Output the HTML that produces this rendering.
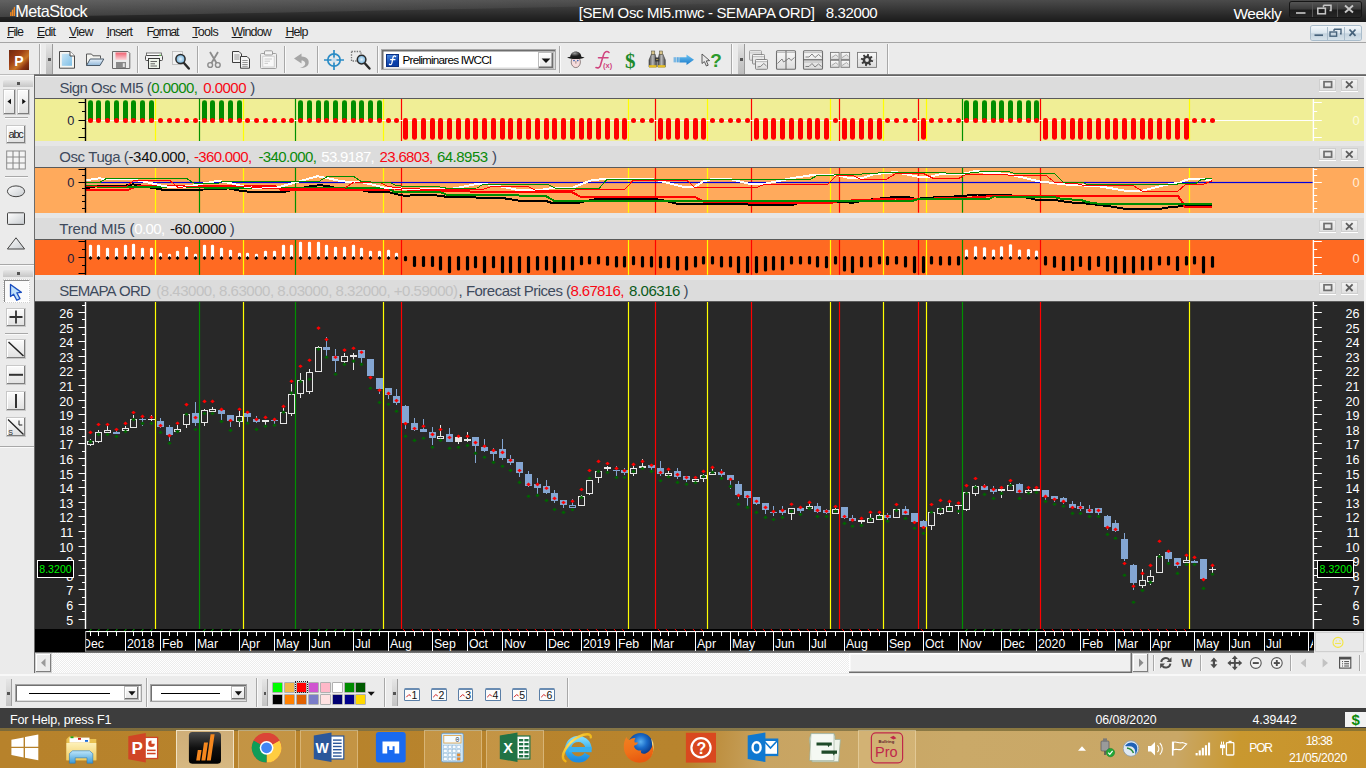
<!DOCTYPE html>
<html><head><meta charset="utf-8"><title>MetaStock</title>
<style>
html,body{margin:0;padding:0;}
body{width:1366px;height:768px;overflow:hidden;position:relative;background:#ebebeb;font-family:"Liberation Sans",sans-serif;}
.a{position:absolute;}
.t{position:absolute;white-space:nowrap;font-family:"Liberation Sans",sans-serif;}
svg{position:absolute;left:0;top:0;overflow:visible;}

</style></head>
<body>
<div class="a" style="left:0;top:0;width:1366px;height:22px;background:linear-gradient(#4b4b4b 0%,#3a3a3a 35%,#262626 75%,#1b1b1b 100%);"></div>
<svg width="1366" height="22"><defs><linearGradient id="sh" x1="0" y1="0" x2="1" y2="0"><stop offset="0" stop-color="#fff" stop-opacity="0.13"/><stop offset="1" stop-color="#fff" stop-opacity="0.0"/></linearGradient></defs><path d="M0,0 L900,0 C600,6 250,14 0,17 Z" fill="url(#sh)"/></svg>
<svg width="20" height="22"><path d="M10.1,16 V12.4 L11.5,11.6 V16 Z M11.9,16 V10 L13.3,9.2 V16 Z M13.7,16 V7.4 L15.1,6.6 V16 Z" fill="#f08a24"/></svg>
<div class="t" style="left:15.2px;top:0.8px;font-size:16.2px;line-height:21px;color:#ffffff;letter-spacing:-0.503px;">MetaStock</div>
<div class="t" style="left:578.7px;top:3.1px;font-size:15px;line-height:20px;color:#ffffff;letter-spacing:-0.384px;">[SEM Osc MI5.mwc - SEMAPA ORD]   8.32000</div>
<div class="t" style="left:1233.4px;top:3.6px;font-size:15.5px;line-height:20px;color:#ffffff;letter-spacing:-0.456px;">Weekly</div>
<div class="a" style="left:1289.5px;top:1.5px;width:71px;height:15.5px;border-radius:2px;background:linear-gradient(#555 0%,#3a3a3a 45%,#1d1d1d 55%,#262626 100%);box-shadow:0 0 0 1px #161616;"></div>
<div class="a" style="left:1311.5px;top:2px;width:1px;height:15px;background:#555;"></div><div class="a" style="left:1336.5px;top:2px;width:1px;height:15px;background:#555;"></div>
<svg width="1366" height="22"><g stroke="#c8c8c8" fill="none"><path d="M1296,13 H1305.5" stroke-width="1.6"/><path d="M1323.5,5.2 H1331 V10.5 H1329.5 M1323.5,5.2 V7.5" stroke-width="1.5"/><rect x="1317.8" y="8.2" width="7.6" height="5.6" stroke-width="1.5"/><path d="M1345,5.5 L1353,12.5 M1353,5.5 L1345,12.5" stroke-width="1.9"/></g></svg>
<div class="a" style="left:0;top:22px;width:1366px;height:20px;background:#ebebeb;"></div>
<div class="a" style="left:0;top:42px;width:1366px;height:1px;background:#a5a5a5;"></div>
<div class="t" style="left:7.0px;top:23.8px;font-size:12.5px;line-height:16px;color:#1a1a1a;letter-spacing:-1.035px;"><u>F</u>ile</div>
<div class="t" style="left:37.0px;top:23.8px;font-size:12.5px;line-height:16px;color:#1a1a1a;letter-spacing:-0.885px;"><u>E</u>dit</div>
<div class="t" style="left:69.0px;top:23.8px;font-size:12.5px;line-height:16px;color:#1a1a1a;letter-spacing:-0.816px;"><u>V</u>iew</div>
<div class="t" style="left:106.4px;top:23.8px;font-size:12.5px;line-height:16px;color:#1a1a1a;letter-spacing:-0.944px;"><u>I</u>nsert</div>
<div class="t" style="left:146.5px;top:23.8px;font-size:12.5px;line-height:16px;color:#1a1a1a;letter-spacing:-1.348px;">F<u>o</u>rmat</div>
<div class="t" style="left:192.3px;top:23.8px;font-size:12.5px;line-height:16px;color:#1a1a1a;letter-spacing:-0.696px;"><u>T</u>ools</div>
<div class="t" style="left:231.6px;top:23.8px;font-size:12.5px;line-height:16px;color:#1a1a1a;letter-spacing:-0.843px;"><u>W</u>indow</div>
<div class="t" style="left:285.4px;top:23.8px;font-size:12.5px;line-height:16px;color:#1a1a1a;letter-spacing:-0.902px;"><u>H</u>elp</div>
<div class="a" style="left:1310.5px;top:26px;width:50px;height:13.5px;border-radius:2px;background:linear-gradient(#f4f8fb 0%,#dbe6ee 50%,#c3d3de 55%,#d6e2ea 100%);box-shadow:0 0 0 1px #a9bccb;"></div>
<div class="a" style="left:1326.5px;top:26.5px;width:1px;height:13px;background:#a9bccb;"></div><div class="a" style="left:1344px;top:26.5px;width:1px;height:13px;background:#a9bccb;"></div>
<svg width="1366" height="44"><g stroke="#46627a" fill="none"><path d="M1314.5,35.2 H1323" stroke-width="1.7"/><path d="M1334,29.3 H1341 V33.8 H1340 M1334,29.3 V31" stroke-width="1.4"/><rect x="1330" y="32" width="6.6" height="4.2" stroke-width="1.4"/><path d="M1349.5,29.5 L1355.5,35.8 M1355.5,29.5 L1349.5,35.8" stroke-width="1.8"/></g></svg>
<div class="a" style="left:0;top:43px;width:1366px;height:32px;background:#ebebeb;"></div>
<div class="a" style="left:9px;top:50px;width:20px;height:20px;background:linear-gradient(135deg,#6e2810 0%,#9a3c14 35%,#c87426 62%,#8a3412 80%,#5e200c 100%);"></div>
<div class="t" style="left:14.2px;top:51.6px;font-size:14px;line-height:18px;color:#ffffff;font-weight:bold;">P</div>
<div class="a" style="left:39px;top:44px;width:1px;height:30px;background:#a8a8a8;"></div><div class="a" style="left:40px;top:44px;width:1px;height:30px;background:#fafafa;"></div>
<div class="a" style="left:46px;top:44px;width:6px;height:30px;background:linear-gradient(#e4e4e4,#c9c9c9 60%,#bdbdbd);border-right:1px solid #9a9a9a;"></div><div class="a" style="left:48px;top:58px;width:3px;height:3px;background:#555;"></div>
<div class="a" style="left:137px;top:46px;width:1px;height:27px;background:#a8a8a8;"></div><div class="a" style="left:138px;top:46px;width:1px;height:27px;background:#fafafa;"></div>
<div class="a" style="left:197px;top:46px;width:1px;height:27px;background:#a8a8a8;"></div><div class="a" style="left:198px;top:46px;width:1px;height:27px;background:#fafafa;"></div>
<div class="a" style="left:284px;top:46px;width:1px;height:27px;background:#a8a8a8;"></div><div class="a" style="left:285px;top:46px;width:1px;height:27px;background:#fafafa;"></div>
<div class="a" style="left:317px;top:46px;width:1px;height:27px;background:#a8a8a8;"></div><div class="a" style="left:318px;top:46px;width:1px;height:27px;background:#fafafa;"></div>
<div class="a" style="left:377px;top:46px;width:1px;height:27px;background:#a8a8a8;"></div><div class="a" style="left:378px;top:46px;width:1px;height:27px;background:#fafafa;"></div>
<div class="a" style="left:559px;top:46px;width:1px;height:27px;background:#a8a8a8;"></div><div class="a" style="left:560px;top:46px;width:1px;height:27px;background:#fafafa;"></div>
<div class="a" style="left:731px;top:44px;width:1px;height:30px;background:#a8a8a8;"></div><div class="a" style="left:732px;top:44px;width:1px;height:30px;background:#fafafa;"></div>
<div class="a" style="left:738px;top:44px;width:6px;height:30px;background:linear-gradient(#e4e4e4,#c9c9c9 60%,#bdbdbd);border-right:1px solid #9a9a9a;"></div><div class="a" style="left:740px;top:58px;width:3px;height:3px;background:#555;"></div>
<div class="a" style="left:887px;top:44px;width:1px;height:30px;background:#a8a8a8;"></div><div class="a" style="left:888px;top:44px;width:1px;height:30px;background:#fafafa;"></div>
<svg width="1366" height="80"><defs><linearGradient id="gblue" x1="0" y1="0" x2="1" y2="1"><stop offset="0" stop-color="#c9e6f6"/><stop offset="1" stop-color="#7fbfe6"/></linearGradient><linearGradient id="gfold" x1="0" y1="0" x2="0" y2="1"><stop offset="0" stop-color="#e9f2fa"/><stop offset="1" stop-color="#8fb6d9"/></linearGradient><linearGradient id="gred" x1="0" y1="0" x2="0" y2="1"><stop offset="0" stop-color="#f06070"/><stop offset="1" stop-color="#fbd8dc"/></linearGradient><radialGradient id="glens"><stop offset="0" stop-color="#e6f3fb"/><stop offset="1" stop-color="#6fb0dc"/></radialGradient><linearGradient id="ggrip" x1="0" y1="0" x2="0" y2="1"><stop offset="0" stop-color="#fdfdfd"/><stop offset="1" stop-color="#dcdcdc"/></linearGradient></defs><path d="M59.5,51.5 H70 L74.5,56 V68.2 H59.5 Z" fill="#f6f6f2" stroke="#4a4a4a" stroke-width="1"/><rect x="61.8" y="53.8" width="10.2" height="12" fill="url(#gblue)"/><path d="M70,51.5 V56 H74.5" fill="#fff" stroke="#4a4a4a" stroke-width="1"/><path d="M86.5,65.5 V54 H91.5 L93,55.8 H100.5 V58.5" fill="#f4f4f0" stroke="#5a5a5a" stroke-width="1"/><path d="M86.5,65.5 L90.2,59 H103.8 L100,65.5 Z" fill="url(#gfold)" stroke="#4a5a6a" stroke-width="1"/><path d="M112.5,51.5 H128 L129.8,53.3 V68.5 H112.5 Z" fill="#ececec" stroke="#6a6a6a" stroke-width="1"/><rect x="115.5" y="52.5" width="11" height="7.5" fill="url(#gred)"/><rect x="116" y="62" width="10" height="6" fill="#8a8a8a"/><rect x="122.8" y="63.2" width="2" height="3.8" fill="#e4e4e4"/><rect x="146.5" y="53" width="15" height="2.5" fill="#fdfdfd" stroke="#5a5a5a" stroke-width="0.8"/><rect x="145.5" y="55.5" width="17" height="5" rx="1" fill="#f2f2f2" stroke="#4a4a4a" stroke-width="1"/><rect x="159.3" y="54.6" width="1.6" height="1.4" fill="#5fc04f"/><rect x="148.5" y="58.5" width="11" height="10" fill="#eef4ea" stroke="#3a3a3a" stroke-width="1"/><path d="M150.5,61.5 H157 M150.5,63.8 H155 M150.5,66 H157" stroke="#555" stroke-width="0.9"/><rect x="172.5" y="51.5" width="10" height="13" fill="#f2f2f2" stroke="#b8b8b8" stroke-width="0.8"/><path d="M183.5,62.5 L188.8,68.5" stroke="#2a2a2a" stroke-width="2.4" stroke-linecap="round"/><circle cx="180.5" cy="59" r="4.6" fill="url(#glens)" stroke="#2a2a2a" stroke-width="1.5"/><g stroke="#8c8c8c" fill="none" stroke-width="1.4"><circle cx="210.2" cy="65" r="2.4"/><circle cx="217.8" cy="65" r="2.4"/><path d="M211.5,63 L218,52 M216.5,63 L210,52" stroke-width="1.8"/></g><g><path d="M232.5,51.5 H239 L241.5,54 V62.5 H232.5 Z" fill="#f4f4f4" stroke="#3e3e3e"/><path d="M234.3,55 H239.5 M234.3,57 H239.5 M234.3,59 H239.5" stroke="#8a8a8a" stroke-width="0.9"/><path d="M240.5,56.5 H247 L249.5,59 V68.2 H240.5 Z" fill="#f4f4f4" stroke="#3e3e3e"/><path d="M242.3,60.5 H247.7 M242.3,62.5 H247.7 M242.3,64.5 H247.7 M242.3,66.3 H247.7" stroke="#8a8a8a" stroke-width="0.9"/></g><g><rect x="260.5" y="53.5" width="16" height="15" rx="1" fill="#f0f0f0" stroke="#a0a0a0"/><rect x="264.5" y="50.8" width="8" height="4.2" rx="1" fill="#f4f4f4" stroke="#9a9a9a"/><rect x="262.8" y="56.2" width="11.4" height="10.8" fill="#f8f8f8" stroke="#c4c4c4" stroke-width="0.7"/><path d="M264.5,59 H272 M264.5,61.2 H270 M264.5,63.4 H268" stroke="#c0c0c0" stroke-width="0.8"/></g><path d="M294,58.5 L301.5,53.5 V56.5 C307.5,56.5 309.5,60.5 308.5,64 C307.5,67 304,68.2 300,68 C304,67 306,64.5 305,62.5 C304.3,61 303,60.6 301.5,60.6 V63.5 Z" fill="#a6a6a6"/><g stroke="#2b8cc6" fill="none"><circle cx="334" cy="60" r="6.2" stroke-width="1.7"/><path d="M324,60 H344 M334,50 V70" stroke-width="1.7"/></g><circle cx="334" cy="60" r="2.6" fill="#d8e6f0" opacity="0.9"/><g><rect x="351.5" y="51.5" width="9.5" height="9.5" fill="none" stroke="#777" stroke-width="1.3" stroke-dasharray="1.4,1.2"/><path d="M365,63.5 L369.5,68.5" stroke="#2a2a2a" stroke-width="2.4" stroke-linecap="round"/><circle cx="361.6" cy="59.6" r="4.3" fill="url(#glens)" stroke="#2a2a2a" stroke-width="1.5"/></g></svg>
<div class="a" style="left:380.6px;top:48.9px;width:175.2px;height:21.5px;background:#fff;box-shadow:inset 1.5px 1.5px 0 #6e6e6e, inset -1.5px -1.5px 0 #dadada;border:1px solid #a8a8a8;box-sizing:border-box;"></div>
<div class="a" style="left:385.8px;top:53.7px;width:13.1px;height:13.3px;background:linear-gradient(160deg,#4a8ae0,#0a3ea8 70%);border:1px solid #0a2f82;box-sizing:border-box;"></div>
<svg width="1366" height="80"><path d="M395.6,56.6 C394.6,55.4 393.2,56 392.9,57.8 L391.9,63 C391.6,64.6 390.4,65.2 389.4,64.2 M390.6,59.6 H395" fill="none" stroke="#fff" stroke-width="1.25" stroke-linecap="round"/></svg>
<div class="t" style="left:402.5px;top:52.4px;font-size:11.7px;line-height:15px;color:#000;letter-spacing:-0.767px;">Preliminares IWCCI</div>
<div class="a" style="left:538px;top:51.6px;width:16.4px;height:17.7px;background:linear-gradient(#fdfdfd,#e6e6e6);box-shadow:inset -1.5px -1.5px 0 #6e6e6e, inset 1px 1px 0 #fff;border:1px solid #bcbcbc;box-sizing:border-box;"></div>
<svg width="1366" height="80"><path d="M541.6,58.6 H550.4 L546,63 Z" fill="#111"/></svg>
<svg width="1366" height="80"><defs><radialGradient id="ghat" cx="0.4" cy="0.3"><stop offset="0" stop-color="#9a9a9a"/><stop offset="1" stop-color="#1e1e1e"/></radialGradient><linearGradient id="garrow" x1="0" y1="0" x2="0" y2="1"><stop offset="0" stop-color="#6cc4f4"/><stop offset="1" stop-color="#1878c8"/></linearGradient><linearGradient id="gbino" x1="0" y1="0" x2="1" y2="0"><stop offset="0" stop-color="#4a4a4a"/><stop offset="0.5" stop-color="#b8b8b8"/><stop offset="1" stop-color="#4a4a4a"/></linearGradient><linearGradient id="gwin" x1="0" y1="0" x2="0" y2="1"><stop offset="0" stop-color="#fafafa"/><stop offset="1" stop-color="#dcdcdc"/></linearGradient></defs><ellipse cx="575.8" cy="62" rx="4.6" ry="5.6" fill="#f6dcdc" stroke="#6a5a5a" stroke-width="0.7"/><path d="M570.2,57.5 C570.2,49.5 581.4,49.5 581.4,57.5 Z" fill="url(#ghat)"/><path d="M567,57.6 C572,59.6 580,59.6 584.6,57.6 C580,56.2 572,56.2 567,57.6 Z" fill="#1a1a1a"/><circle cx="574" cy="60.6" r="0.8" fill="#2a5ab0"/><circle cx="577.8" cy="60.6" r="0.8" fill="#2a5ab0"/><path d="M575.9,61 V63.6" stroke="#5a4a4a" stroke-width="0.6"/><path d="M609,52.5 C607,50.6 604.5,51.5 603.6,54.6 L600.2,66 C599.6,67.6 598,68.4 596,67.6 M598.5,57.8 H608" fill="none" stroke="#d0447e" stroke-width="1.6" stroke-linecap="round"/><text x="603" y="67.6" font-family="Liberation Sans" font-size="7.5" font-weight="bold" fill="#d0447e">(x)</text><text x="624.9" y="67.6" font-family="Liberation Serif" font-size="21" font-weight="bold" fill="#1c8a2c">$</text><g><path d="M649,67 V60 L651.5,54 H655 L656.5,60 V67 Z" fill="url(#gbino)" stroke="#3a3a3a" stroke-width="0.6"/><path d="M657.8,67 V60 L659.3,54 H662.8 L665.3,60 V67 Z" fill="url(#gbino)" stroke="#3a3a3a" stroke-width="0.6"/><rect x="651.5" y="51" width="3.3" height="3.4" fill="#d8c48a" stroke="#4a4a3a" stroke-width="0.5"/><rect x="659.4" y="51" width="3.3" height="3.4" fill="#d8c48a" stroke="#4a4a3a" stroke-width="0.5"/><rect x="655" y="57.5" width="4.4" height="4" fill="#3a3a3a"/><rect x="649" y="65.2" width="7.5" height="2.2" fill="#e8c020"/><rect x="657.8" y="65.2" width="7.5" height="2.2" fill="#e8c020"/><path d="M656,59.5 H658.6" stroke="#e8d070" stroke-width="0.8" stroke-dasharray="0.7,0.5"/></g><path d="M679.5,57.2 H686.5 V54.5 L694,59.8 L686.5,65 V62.4 H679.5 Z" fill="url(#garrow)"/><path d="M674.2,57.2 V62.4 M675.8,57.2 V62.4 M677.4,57.2 V62.4 M678.8,57.2 V62.4" stroke="#3a9ae0" stroke-width="0.9"/><path d="M702,54 L702,63.5 L704.4,61.6 L706.4,66 L708.2,65.2 L706.3,60.9 L709.6,60.6 Z" fill="#e8e8e8" stroke="#4a4a4a" stroke-width="0.9"/><text x="710.2" y="67" font-family="Liberation Sans" font-size="19" font-weight="bold" fill="#2c9a2c">?</text><g opacity="0.75"><rect x="749.5" y="50.7" width="12" height="9.5" rx="0.8" fill="url(#gwin)" stroke="#7a7a7a" stroke-width="0.9"/><path d="M749.5,52.900000000000006 H761.5" stroke="#9a9a9a" stroke-width="0.7"/></g><g opacity="0.9"><rect x="752.5" y="54.5" width="12" height="9.5" rx="0.8" fill="url(#gwin)" stroke="#7a7a7a" stroke-width="0.9"/><path d="M752.5,56.7 H764.5" stroke="#9a9a9a" stroke-width="0.7"/></g><rect x="755.5" y="59.5" width="12" height="9.8" rx="0.8" fill="url(#gwin)" stroke="#7a7a7a" stroke-width="0.9"/><path d="M755.5,61.7 H767.5" stroke="#9a9a9a" stroke-width="0.7"/><path d="M757.5,67 L760.5,66.5 L763.8,63.5 L766.5,66" fill="none" stroke="#6a6a6a" stroke-width="0.8"/><rect x="776.5" y="50.7" width="19" height="18.6" rx="1" fill="url(#gwin)" stroke="#6e6e6e" stroke-width="1.1"/><path d="M786,50.7 V69.3" stroke="#6e6e6e" stroke-width="1.1"/><path d="M776.5,52.5 H795.5" stroke="#9a9a9a" stroke-width="0.6"/><path d="M777.5,63.5 L780,61 L782,59 L783.5,62 L786,60.5 L789,58 L791,60.5 L794.5,57.5" fill="none" stroke="#6a6a6a" stroke-width="0.8"/><rect x="803.5" y="50.7" width="19" height="18.6" rx="1" fill="url(#gwin)" stroke="#6e6e6e" stroke-width="1.1"/><path d="M803.5,59.8 H822.5" stroke="#6e6e6e" stroke-width="1.3"/><path d="M803.5,52.6 H822.5 M803.5,62 H822.5" stroke="#9a9a9a" stroke-width="0.6"/><path d="M805.5,57 H809 L812,54 L815,57.5 L818.5,54.5 L821.5,57 M805.5,66.5 H809 L812,63.5 L815,67 L818.5,64 L821.5,66.5" fill="none" stroke="#6a6a6a" stroke-width="0.8"/><rect x="830.5" y="52.4" width="8.6" height="7" fill="url(#gwin)" stroke="#7a7a7a" stroke-width="0.9"/><path d="M831.7,57.6 L834.0,56.0 L835.9,54.8 L837.9,56.6" fill="none" stroke="#8a8a8a" stroke-width="0.7"/><rect x="841" y="52.4" width="8.6" height="7" fill="url(#gwin)" stroke="#7a7a7a" stroke-width="0.9"/><path d="M842.2,57.6 L844.5,56.0 L846.4,54.8 L848.4,56.6" fill="none" stroke="#8a8a8a" stroke-width="0.7"/><rect x="830.5" y="60.3" width="8.6" height="7" fill="url(#gwin)" stroke="#7a7a7a" stroke-width="0.9"/><path d="M831.7,65.5 L834.0,63.9 L835.9,62.699999999999996 L837.9,64.5" fill="none" stroke="#8a8a8a" stroke-width="0.7"/><rect x="841" y="60.3" width="8.6" height="7" fill="url(#gwin)" stroke="#7a7a7a" stroke-width="0.9"/><path d="M842.2,65.5 L844.5,63.9 L846.4,62.699999999999996 L848.4,64.5" fill="none" stroke="#8a8a8a" stroke-width="0.7"/><rect x="857.5" y="52.4" width="19" height="15" fill="url(#gwin)" stroke="#7a7a7a" stroke-width="0.9"/><path d="M857.5,59.8 H876.5" stroke="#bdbdbd" stroke-width="0.6" stroke-dasharray="1,1"/><path d="M873.19,60.41 L872.87,61.99 L870.77,61.86 L870.16,62.77 L871.08,64.67 L869.75,65.56 L868.35,63.98 L867.28,64.19 L866.59,66.19 L865.01,65.87 L865.14,63.77 L864.23,63.16 L862.33,64.08 L861.44,62.75 L863.02,61.35 L862.81,60.28 L860.81,59.59 L861.13,58.01 L863.23,58.14 L863.84,57.23 L862.92,55.33 L864.25,54.44 L865.65,56.02 L866.72,55.81 L867.41,53.81 L868.99,54.13 L868.86,56.23 L869.77,56.84 L871.67,55.92 L872.56,57.25 L870.98,58.65 L871.19,59.72 Z" fill="#3c3c3c"/><circle cx="867" cy="60" r="1.9" fill="#e6e6e6"/></svg>
<div class="a" style="left:0;top:75px;width:34px;height:600px;background:#ebebeb;"></div>
<div class="a" style="left:0;top:74px;width:34px;height:1px;background:#bcbcbc;"></div><div class="a" style="left:0;top:75px;width:34px;height:1px;background:#f8f8f8;"></div>
<div class="a" style="left:34px;top:74px;width:1332px;height:2px;background:linear-gradient(#8a8a8a,#585858);"></div>
<div class="a" style="left:33.5px;top:75px;width:1.5px;height:598px;background:#6c6c6c;"></div>
<div class="a" style="left:3px;top:79.5px;width:30px;height:7px;background:linear-gradient(#e6e6e6,#c6c6c6);border-radius:2px 2px 0 0;"></div><div class="a" style="left:16.5px;top:81.5px;width:3px;height:3px;background:#555;"></div>
<div class="a" style="left:3px;top:89px;width:13px;height:25.5px;background:linear-gradient(#fbfbfb,#e0e0e0);box-shadow:inset -1px -1px 0 #7e7e7e, inset 1px 1px 0 #ffffff;border:1px solid #c8c8c8;box-sizing:border-box;"></div>
<div class="a" style="left:17px;top:89px;width:13px;height:25.5px;background:linear-gradient(#fbfbfb,#e0e0e0);box-shadow:inset -1px -1px 0 #7e7e7e, inset 1px 1px 0 #ffffff;border:1px solid #c8c8c8;box-sizing:border-box;"></div>
<div class="a" style="left:5px;top:117px;width:23px;height:1px;background:#a8a8a8;"></div><div class="a" style="left:5px;top:118px;width:23px;height:1px;background:#fafafa;"></div>
<div class="a" style="left:5px;top:176px;width:23px;height:1px;background:#a8a8a8;"></div><div class="a" style="left:5px;top:177px;width:23px;height:1px;background:#fafafa;"></div>
<div class="a" style="left:6px;top:124.5px;width:20px;height:19px;background:linear-gradient(#fbfbfb,#e0e0e0);box-shadow:inset -1px -1px 0 #7e7e7e, inset 1px 1px 0 #ffffff;border:1px solid #c8c8c8;box-sizing:border-box;"></div>
<div class="t" style="left:8.6px;top:126.6px;font-size:11px;line-height:14px;color:#1a1a1a;letter-spacing:-1.311px;">abc</div>
<svg width="40" height="680"><path d="M7.4,101.5 L11,98.7 V104.3 Z M25.8,101.5 L22.2,98.7 V104.3 Z" fill="#111" transform="translate(0,0)"/><rect x="6.7" y="151" width="18.6" height="18" fill="#f4f4f4" stroke="#8a8a8a" stroke-width="1"/><path d="M13,151 V169 M19.2,151 V169 M6.7,157 H25.3 M6.7,163 H25.3" stroke="#8a8a8a" stroke-width="1.1"/><defs><linearGradient id="gsh" x1="0" y1="0" x2="1" y2="1"><stop offset="0" stop-color="#ffffff"/><stop offset="1" stop-color="#c8ccd0"/></linearGradient></defs><ellipse cx="16" cy="191.3" rx="8.6" ry="5.4" fill="url(#gsh)" stroke="#444" stroke-width="1"/><rect x="7.5" y="212.8" width="17" height="11.6" rx="0.8" fill="url(#gsh)" stroke="#444" stroke-width="1"/><path d="M7.4,249 L16,237.8 L24.6,249 Z" fill="url(#gsh)" stroke="#444" stroke-width="1" stroke-linejoin="round"/></svg>
<div class="a" style="left:0;top:264px;width:33.5px;height:1px;background:#a8a8a8;"></div><div class="a" style="left:0;top:265px;width:33.5px;height:1px;background:#fafafa;"></div>
<div class="a" style="left:3px;top:270px;width:30px;height:7px;background:linear-gradient(#e6e6e6,#c6c6c6);border-radius:2px 2px 0 0;"></div><div class="a" style="left:16.5px;top:272px;width:3px;height:3px;background:#555;"></div>
<div class="a" style="left:3px;top:278.5px;width:26.5px;height:24px;background:#fbfbfb;box-shadow:inset 1px 1px 0 #8a8a8a, inset -1px -1px 0 #ffffff;border:1px dotted #d0d0d0;box-sizing:border-box;"></div>
<div class="a" style="left:6px;top:307.5px;width:20px;height:19px;background:linear-gradient(#fbfbfb,#e0e0e0);box-shadow:inset -1px -1px 0 #7e7e7e, inset 1px 1px 0 #ffffff;border:1px solid #c8c8c8;box-sizing:border-box;"></div>
<div class="a" style="left:5px;top:332.5px;width:23px;height:1px;background:#a8a8a8;"></div><div class="a" style="left:5px;top:333.5px;width:23px;height:1px;background:#fafafa;"></div>
<div class="a" style="left:6px;top:339px;width:20px;height:19.5px;background:linear-gradient(#fbfbfb,#e0e0e0);box-shadow:inset -1px -1px 0 #7e7e7e, inset 1px 1px 0 #ffffff;border:1px solid #c8c8c8;box-sizing:border-box;"></div>
<div class="a" style="left:6px;top:365px;width:20px;height:19.5px;background:linear-gradient(#fbfbfb,#e0e0e0);box-shadow:inset -1px -1px 0 #7e7e7e, inset 1px 1px 0 #ffffff;border:1px solid #c8c8c8;box-sizing:border-box;"></div>
<div class="a" style="left:6px;top:391px;width:20px;height:19.5px;background:linear-gradient(#fbfbfb,#e0e0e0);box-shadow:inset -1px -1px 0 #7e7e7e, inset 1px 1px 0 #ffffff;border:1px solid #c8c8c8;box-sizing:border-box;"></div>
<div class="a" style="left:6px;top:417px;width:20px;height:19.5px;background:linear-gradient(#fbfbfb,#e0e0e0);box-shadow:inset -1px -1px 0 #7e7e7e, inset 1px 1px 0 #ffffff;border:1px solid #c8c8c8;box-sizing:border-box;"></div>
<div class="a" style="left:0;top:445.5px;width:33.5px;height:1px;background:#a8a8a8;"></div><div class="a" style="left:0;top:446.5px;width:33.5px;height:1px;background:#fafafa;"></div>
<svg width="40" height="680"><path d="M10.5,284.5 L10.5,296.5 L13.6,294.2 L16.8,300.3 L20,298.6 L16.8,292.8 L21.4,292.4 Z" fill="#bfe0fa" stroke="#1a4ec0" stroke-width="1.3" stroke-linejoin="round"/><path d="M9.5,317 H22.5 M16,310.5 V323.5" stroke="#333" stroke-width="1.8"/><path d="M8.5,342 L23.5,356" stroke="#222" stroke-width="1.5"/><path d="M9,374.8 H23" stroke="#333" stroke-width="2"/><path d="M16,394 V408" stroke="#333" stroke-width="2"/><path d="M8,419.5 L23.5,434.5" stroke="#222" stroke-width="1.3"/><path d="M19,420.5 V425 H22.3" stroke="#222" stroke-width="1" fill="none"/><text x="8.2" y="434.6" font-family="Liberation Sans" font-size="7" fill="#222">S</text></svg>
<div class="a" style="left:35px;top:76px;width:1331px;height:596.5px;background:#e6e6e6;"></div>
<div class="a" style="left:35px;top:76px;width:1331px;height:1px;background:#f8f8f8;"></div>
<div class="a" style="left:35px;top:77px;width:1329px;height:21px;background:#dcdcdc;"></div>
<div class="a" style="left:35px;top:97.5px;width:1329px;height:1.5px;background:#5a5a5a;"></div>
<div class="a" style="left:35px;top:99px;width:1329px;height:42px;background:#f0ee96;"></div>
<div class="a" style="left:35px;top:146px;width:1329px;height:21px;background:#dcdcdc;"></div>
<div class="a" style="left:35px;top:166.5px;width:1329px;height:1.5px;background:#5a5a5a;"></div>
<div class="a" style="left:35px;top:168px;width:1329px;height:44.69999999999999px;background:#ffaa5c;"></div>
<div class="a" style="left:35px;top:218px;width:1329px;height:21px;background:#dcdcdc;"></div>
<div class="a" style="left:35px;top:238.5px;width:1329px;height:1.5px;background:#5a5a5a;"></div>
<div class="a" style="left:35px;top:240px;width:1329px;height:34.80000000000001px;background:#ff6a22;"></div>
<div class="a" style="left:35px;top:279.5px;width:1329px;height:21.5px;background:#dcdcdc;"></div>
<div class="a" style="left:35px;top:300.5px;width:1329px;height:1.5px;background:#5a5a5a;"></div>
<div class="a" style="left:35px;top:302px;width:1329px;height:327px;background:#282828;"></div>
<div class="a" style="left:1319.3px;top:78.5px;width:16.6px;height:12.2px;background:linear-gradient(#f4f4f4,#dedede);box-shadow:0 1px 0 #fff, inset 0 0 0 1px #cfcfcf;box-sizing:border-box;"></div>
<div class="a" style="left:1341px;top:78.5px;width:16.6px;height:12.2px;background:linear-gradient(#f4f4f4,#dedede);box-shadow:0 1px 0 #fff, inset 0 0 0 1px #cfcfcf;box-sizing:border-box;"></div>
<svg width="1366" height="768"><rect x="1324" y="81.7" width="7.6" height="5.6" fill="none" stroke="#6e6e6e" stroke-width="1.7"/><path d="M1346,81.3 L1352.6,87.9 M1352.6,81.3 L1346,87.9" stroke="#5e5e5e" stroke-width="1.8"/></svg>
<div class="a" style="left:1319.3px;top:148.3px;width:16.6px;height:12.2px;background:linear-gradient(#f4f4f4,#dedede);box-shadow:0 1px 0 #fff, inset 0 0 0 1px #cfcfcf;box-sizing:border-box;"></div>
<div class="a" style="left:1341px;top:148.3px;width:16.6px;height:12.2px;background:linear-gradient(#f4f4f4,#dedede);box-shadow:0 1px 0 #fff, inset 0 0 0 1px #cfcfcf;box-sizing:border-box;"></div>
<svg width="1366" height="768"><rect x="1324" y="151.5" width="7.6" height="5.6" fill="none" stroke="#6e6e6e" stroke-width="1.7"/><path d="M1346,151.10000000000002 L1352.6,157.70000000000002 M1352.6,151.10000000000002 L1346,157.70000000000002" stroke="#5e5e5e" stroke-width="1.8"/></svg>
<div class="a" style="left:1319.3px;top:220.3px;width:16.6px;height:12.2px;background:linear-gradient(#f4f4f4,#dedede);box-shadow:0 1px 0 #fff, inset 0 0 0 1px #cfcfcf;box-sizing:border-box;"></div>
<div class="a" style="left:1341px;top:220.3px;width:16.6px;height:12.2px;background:linear-gradient(#f4f4f4,#dedede);box-shadow:0 1px 0 #fff, inset 0 0 0 1px #cfcfcf;box-sizing:border-box;"></div>
<svg width="1366" height="768"><rect x="1324" y="223.5" width="7.6" height="5.6" fill="none" stroke="#6e6e6e" stroke-width="1.7"/><path d="M1346,223.10000000000002 L1352.6,229.70000000000002 M1352.6,223.10000000000002 L1346,229.70000000000002" stroke="#5e5e5e" stroke-width="1.8"/></svg>
<div class="a" style="left:1319.3px;top:281.6px;width:16.6px;height:12.2px;background:linear-gradient(#f4f4f4,#dedede);box-shadow:0 1px 0 #fff, inset 0 0 0 1px #cfcfcf;box-sizing:border-box;"></div>
<div class="a" style="left:1341px;top:281.6px;width:16.6px;height:12.2px;background:linear-gradient(#f4f4f4,#dedede);box-shadow:0 1px 0 #fff, inset 0 0 0 1px #cfcfcf;box-sizing:border-box;"></div>
<svg width="1366" height="768"><rect x="1324" y="284.8" width="7.6" height="5.6" fill="none" stroke="#6e6e6e" stroke-width="1.7"/><path d="M1346,284.40000000000003 L1352.6,291.0 M1352.6,284.40000000000003 L1346,291.0" stroke="#5e5e5e" stroke-width="1.8"/></svg>
<div class="a" style="left:1364px;top:76.5px;width:2px;height:596px;background:#f4f4f4;"></div>
<div class="t" style="left:59.5px;top:77.5px;font-size:15px;line-height:20px;color:#3e4a5c;letter-spacing:-0.535px;">Sign Osc MI5 (</div>
<div class="t" style="left:151.2px;top:77.5px;font-size:15px;line-height:20px;color:#0a8a0a;letter-spacing:-0.535px;">0.0000,</div>
<div class="t" style="left:203.3px;top:77.5px;font-size:15px;line-height:20px;color:#f80814;letter-spacing:-0.530px;">0.0000</div>
<div class="t" style="left:250.2px;top:77.5px;font-size:15px;line-height:20px;color:#3e4a5c;">)</div>
<div class="t" style="left:59.3px;top:146.9px;font-size:15px;line-height:20px;color:#3e4a5c;letter-spacing:-0.453px;">Osc Tuga (</div>
<div class="t" style="left:128.4px;top:146.9px;font-size:15px;line-height:20px;color:#101010;letter-spacing:-0.276px;">-340.000,</div>
<div class="t" style="left:194.0px;top:146.9px;font-size:15px;line-height:20px;color:#f80814;letter-spacing:-0.665px;">-360.000,</div>
<div class="t" style="left:258.4px;top:146.9px;font-size:15px;line-height:20px;color:#0a8a0a;letter-spacing:-0.620px;">-340.000,</div>
<div class="t" style="left:321.3px;top:146.9px;font-size:15px;line-height:20px;color:#ffffff;letter-spacing:-0.711px;">53.9187,</div>
<div class="t" style="left:379.6px;top:146.9px;font-size:15px;line-height:20px;color:#f80814;letter-spacing:-0.673px;">23.6803,</div>
<div class="t" style="left:437.0px;top:146.9px;font-size:15px;line-height:20px;color:#0a8a0a;letter-spacing:-0.531px;">64.8953</div>
<div class="t" style="left:492.0px;top:146.9px;font-size:15px;line-height:20px;color:#3e4a5c;">)</div>
<div class="t" style="left:59.3px;top:219.0px;font-size:15px;line-height:20px;color:#3e4a5c;letter-spacing:-0.178px;">Trend MI5 (</div>
<div class="t" style="left:134.3px;top:219.0px;font-size:15px;line-height:20px;color:#ffffff;letter-spacing:-0.592px;">0.00,</div>
<div class="t" style="left:170.0px;top:219.0px;font-size:15px;line-height:20px;color:#101010;letter-spacing:-0.427px;">-60.0000</div>
<div class="t" style="left:229.7px;top:219.0px;font-size:15px;line-height:20px;color:#3e4a5c;">)</div>
<div class="t" style="left:59.3px;top:280.9px;font-size:15px;line-height:20px;color:#3e4a5c;letter-spacing:-0.821px;">SEMAPA ORD</div>
<div class="t" style="left:156.3px;top:280.9px;font-size:15px;line-height:20px;color:#c2c2c2;letter-spacing:-0.480px;">(8.43000, 8.63000, 8.03000, 8.32000, +0.59000)</div>
<div class="t" style="left:458.6px;top:280.9px;font-size:15px;line-height:20px;color:#3e4a5c;letter-spacing:-0.515px;">, Forecast Prices (</div>
<div class="t" style="left:570.5px;top:280.9px;font-size:15px;line-height:20px;color:#f80814;letter-spacing:-0.648px;">8.67816,</div>
<div class="t" style="left:629.0px;top:280.9px;font-size:15px;line-height:20px;color:#0a5a1a;letter-spacing:-0.460px;">8.06316</div>
<div class="t" style="left:683.5px;top:280.9px;font-size:15px;line-height:20px;color:#3e4a5c;">)</div>
<svg width="1366" height="768" shape-rendering="auto"><rect x="154.90" y="99" width="1.2" height="42" fill="#ffff00"/><rect x="198.90" y="99" width="1.2" height="42" fill="#009000"/><rect x="242.90" y="99" width="1.2" height="42" fill="#ffff00"/><rect x="294.90" y="99" width="1.2" height="42" fill="#009000"/><rect x="382.90" y="99" width="1.2" height="42" fill="#ffff00"/><rect x="400.90" y="99" width="1.2" height="42" fill="#ff0000"/><rect x="627.90" y="99" width="1.2" height="42" fill="#ffff00"/><rect x="654.90" y="99" width="1.2" height="42" fill="#ff0000"/><rect x="706.90" y="99" width="1.2" height="42" fill="#ffff00"/><rect x="750.90" y="99" width="1.2" height="42" fill="#ff0000"/><rect x="829.90" y="99" width="1.2" height="42" fill="#ffff00"/><rect x="838.90" y="99" width="1.2" height="42" fill="#ff0000"/><rect x="882.90" y="99" width="1.2" height="42" fill="#ffff00"/><rect x="917.90" y="99" width="1.2" height="42" fill="#ff0000"/><rect x="925.90" y="99" width="1.2" height="42" fill="#ffff00"/><rect x="961.90" y="99" width="1.2" height="42" fill="#009000"/><rect x="1039.90" y="99" width="1.2" height="42" fill="#ff0000"/><rect x="1188.90" y="99" width="1.2" height="42" fill="#ffff00"/><rect x="86" y="120.0" width="1227" height="1" fill="#ffffff"/><rect x="88.00" y="100.2" width="5" height="21.3" rx="2.3" fill="#008c00"/><rect x="96.00" y="100.2" width="5" height="21.3" rx="2.3" fill="#008c00"/><rect x="105.00" y="100.2" width="5" height="21.3" rx="2.3" fill="#008c00"/><rect x="114.00" y="100.2" width="5" height="21.3" rx="2.3" fill="#008c00"/><rect x="123.00" y="100.2" width="5" height="21.3" rx="2.3" fill="#008c00"/><rect x="131.00" y="100.2" width="5" height="21.3" rx="2.3" fill="#008c00"/><rect x="140.00" y="100.2" width="5" height="21.3" rx="2.3" fill="#008c00"/><rect x="149.00" y="100.2" width="5" height="21.3" rx="2.3" fill="#008c00"/><rect x="202.00" y="100.2" width="5" height="21.3" rx="2.3" fill="#008c00"/><rect x="210.00" y="100.2" width="5" height="21.3" rx="2.3" fill="#008c00"/><rect x="219.00" y="100.2" width="5" height="21.3" rx="2.3" fill="#008c00"/><rect x="228.00" y="100.2" width="5" height="21.3" rx="2.3" fill="#008c00"/><rect x="237.00" y="100.2" width="5" height="21.3" rx="2.3" fill="#008c00"/><rect x="298.00" y="100.2" width="5" height="21.3" rx="2.3" fill="#008c00"/><rect x="307.00" y="100.2" width="5" height="21.3" rx="2.3" fill="#008c00"/><rect x="316.00" y="100.2" width="5" height="21.3" rx="2.3" fill="#008c00"/><rect x="324.00" y="100.2" width="5" height="21.3" rx="2.3" fill="#008c00"/><rect x="333.00" y="100.2" width="5" height="21.3" rx="2.3" fill="#008c00"/><rect x="342.00" y="100.2" width="5" height="21.3" rx="2.3" fill="#008c00"/><rect x="351.00" y="100.2" width="5" height="21.3" rx="2.3" fill="#008c00"/><rect x="359.00" y="100.2" width="5" height="21.3" rx="2.3" fill="#008c00"/><rect x="368.00" y="100.2" width="5" height="21.3" rx="2.3" fill="#008c00"/><rect x="377.00" y="100.2" width="5" height="21.3" rx="2.3" fill="#008c00"/><rect x="964.00" y="100.2" width="5" height="21.3" rx="2.3" fill="#008c00"/><rect x="973.00" y="100.2" width="5" height="21.3" rx="2.3" fill="#008c00"/><rect x="982.00" y="100.2" width="5" height="21.3" rx="2.3" fill="#008c00"/><rect x="991.00" y="100.2" width="5" height="21.3" rx="2.3" fill="#008c00"/><rect x="999.00" y="100.2" width="5" height="21.3" rx="2.3" fill="#008c00"/><rect x="1008.00" y="100.2" width="5" height="21.3" rx="2.3" fill="#008c00"/><rect x="1017.00" y="100.2" width="5" height="21.3" rx="2.3" fill="#008c00"/><rect x="1026.00" y="100.2" width="5" height="21.3" rx="2.3" fill="#008c00"/><rect x="1034.00" y="100.2" width="5" height="21.3" rx="2.3" fill="#008c00"/><rect x="403.00" y="118.1" width="5" height="21.7" rx="2.3" fill="#ff0000"/><rect x="412.00" y="118.1" width="5" height="21.7" rx="2.3" fill="#ff0000"/><rect x="421.00" y="118.1" width="5" height="21.7" rx="2.3" fill="#ff0000"/><rect x="430.00" y="118.1" width="5" height="21.7" rx="2.3" fill="#ff0000"/><rect x="438.00" y="118.1" width="5" height="21.7" rx="2.3" fill="#ff0000"/><rect x="447.00" y="118.1" width="5" height="21.7" rx="2.3" fill="#ff0000"/><rect x="456.00" y="118.1" width="5" height="21.7" rx="2.3" fill="#ff0000"/><rect x="465.00" y="118.1" width="5" height="21.7" rx="2.3" fill="#ff0000"/><rect x="473.00" y="118.1" width="5" height="21.7" rx="2.3" fill="#ff0000"/><rect x="482.00" y="118.1" width="5" height="21.7" rx="2.3" fill="#ff0000"/><rect x="491.00" y="118.1" width="5" height="21.7" rx="2.3" fill="#ff0000"/><rect x="500.00" y="118.1" width="5" height="21.7" rx="2.3" fill="#ff0000"/><rect x="508.00" y="118.1" width="5" height="21.7" rx="2.3" fill="#ff0000"/><rect x="517.00" y="118.1" width="5" height="21.7" rx="2.3" fill="#ff0000"/><rect x="526.00" y="118.1" width="5" height="21.7" rx="2.3" fill="#ff0000"/><rect x="535.00" y="118.1" width="5" height="21.7" rx="2.3" fill="#ff0000"/><rect x="544.00" y="118.1" width="5" height="21.7" rx="2.3" fill="#ff0000"/><rect x="552.00" y="118.1" width="5" height="21.7" rx="2.3" fill="#ff0000"/><rect x="561.00" y="118.1" width="5" height="21.7" rx="2.3" fill="#ff0000"/><rect x="570.00" y="118.1" width="5" height="21.7" rx="2.3" fill="#ff0000"/><rect x="579.00" y="118.1" width="5" height="21.7" rx="2.3" fill="#ff0000"/><rect x="587.00" y="118.1" width="5" height="21.7" rx="2.3" fill="#ff0000"/><rect x="596.00" y="118.1" width="5" height="21.7" rx="2.3" fill="#ff0000"/><rect x="605.00" y="118.1" width="5" height="21.7" rx="2.3" fill="#ff0000"/><rect x="614.00" y="118.1" width="5" height="21.7" rx="2.3" fill="#ff0000"/><rect x="622.00" y="118.1" width="5" height="21.7" rx="2.3" fill="#ff0000"/><rect x="658.00" y="118.1" width="5" height="21.7" rx="2.3" fill="#ff0000"/><rect x="666.00" y="118.1" width="5" height="21.7" rx="2.3" fill="#ff0000"/><rect x="675.00" y="118.1" width="5" height="21.7" rx="2.3" fill="#ff0000"/><rect x="684.00" y="118.1" width="5" height="21.7" rx="2.3" fill="#ff0000"/><rect x="693.00" y="118.1" width="5" height="21.7" rx="2.3" fill="#ff0000"/><rect x="701.00" y="118.1" width="5" height="21.7" rx="2.3" fill="#ff0000"/><rect x="754.00" y="118.1" width="5" height="21.7" rx="2.3" fill="#ff0000"/><rect x="763.00" y="118.1" width="5" height="21.7" rx="2.3" fill="#ff0000"/><rect x="771.00" y="118.1" width="5" height="21.7" rx="2.3" fill="#ff0000"/><rect x="780.00" y="118.1" width="5" height="21.7" rx="2.3" fill="#ff0000"/><rect x="789.00" y="118.1" width="5" height="21.7" rx="2.3" fill="#ff0000"/><rect x="798.00" y="118.1" width="5" height="21.7" rx="2.3" fill="#ff0000"/><rect x="807.00" y="118.1" width="5" height="21.7" rx="2.3" fill="#ff0000"/><rect x="815.00" y="118.1" width="5" height="21.7" rx="2.3" fill="#ff0000"/><rect x="824.00" y="118.1" width="5" height="21.7" rx="2.3" fill="#ff0000"/><rect x="842.00" y="118.1" width="5" height="21.7" rx="2.3" fill="#ff0000"/><rect x="850.00" y="118.1" width="5" height="21.7" rx="2.3" fill="#ff0000"/><rect x="859.00" y="118.1" width="5" height="21.7" rx="2.3" fill="#ff0000"/><rect x="868.00" y="118.1" width="5" height="21.7" rx="2.3" fill="#ff0000"/><rect x="877.00" y="118.1" width="5" height="21.7" rx="2.3" fill="#ff0000"/><rect x="921.00" y="118.1" width="5" height="21.7" rx="2.3" fill="#ff0000"/><rect x="1043.00" y="118.1" width="5" height="21.7" rx="2.3" fill="#ff0000"/><rect x="1052.00" y="118.1" width="5" height="21.7" rx="2.3" fill="#ff0000"/><rect x="1061.00" y="118.1" width="5" height="21.7" rx="2.3" fill="#ff0000"/><rect x="1070.00" y="118.1" width="5" height="21.7" rx="2.3" fill="#ff0000"/><rect x="1078.00" y="118.1" width="5" height="21.7" rx="2.3" fill="#ff0000"/><rect x="1087.00" y="118.1" width="5" height="21.7" rx="2.3" fill="#ff0000"/><rect x="1096.00" y="118.1" width="5" height="21.7" rx="2.3" fill="#ff0000"/><rect x="1105.00" y="118.1" width="5" height="21.7" rx="2.3" fill="#ff0000"/><rect x="1113.00" y="118.1" width="5" height="21.7" rx="2.3" fill="#ff0000"/><rect x="1122.00" y="118.1" width="5" height="21.7" rx="2.3" fill="#ff0000"/><rect x="1131.00" y="118.1" width="5" height="21.7" rx="2.3" fill="#ff0000"/><rect x="1140.00" y="118.1" width="5" height="21.7" rx="2.3" fill="#ff0000"/><rect x="1148.00" y="118.1" width="5" height="21.7" rx="2.3" fill="#ff0000"/><rect x="1157.00" y="118.1" width="5" height="21.7" rx="2.3" fill="#ff0000"/><rect x="1166.00" y="118.1" width="5" height="21.7" rx="2.3" fill="#ff0000"/><rect x="1175.00" y="118.1" width="5" height="21.7" rx="2.3" fill="#ff0000"/><rect x="1184.00" y="118.1" width="5" height="21.7" rx="2.3" fill="#ff0000"/><circle cx="90.50" cy="120.5" r="2.5" fill="#ff0000"/><circle cx="98.50" cy="120.5" r="2.5" fill="#ff0000"/><circle cx="107.50" cy="120.5" r="2.5" fill="#ff0000"/><circle cx="116.50" cy="120.5" r="2.5" fill="#ff0000"/><circle cx="125.50" cy="120.5" r="2.5" fill="#ff0000"/><circle cx="133.50" cy="120.5" r="2.5" fill="#ff0000"/><circle cx="142.50" cy="120.5" r="2.5" fill="#ff0000"/><circle cx="151.50" cy="120.5" r="2.5" fill="#ff0000"/><circle cx="160.50" cy="120.5" r="2.5" fill="#ff0000"/><circle cx="169.50" cy="120.5" r="2.5" fill="#ff0000"/><circle cx="177.50" cy="120.5" r="2.5" fill="#ff0000"/><circle cx="186.50" cy="120.5" r="2.5" fill="#ff0000"/><circle cx="195.50" cy="120.5" r="2.5" fill="#ff0000"/><circle cx="204.50" cy="120.5" r="2.5" fill="#ff0000"/><circle cx="212.50" cy="120.5" r="2.5" fill="#ff0000"/><circle cx="221.50" cy="120.5" r="2.5" fill="#ff0000"/><circle cx="230.50" cy="120.5" r="2.5" fill="#ff0000"/><circle cx="239.50" cy="120.5" r="2.5" fill="#ff0000"/><circle cx="247.50" cy="120.5" r="2.5" fill="#ff0000"/><circle cx="256.50" cy="120.5" r="2.5" fill="#ff0000"/><circle cx="265.50" cy="120.5" r="2.5" fill="#ff0000"/><circle cx="274.50" cy="120.5" r="2.5" fill="#ff0000"/><circle cx="283.50" cy="120.5" r="2.5" fill="#ff0000"/><circle cx="291.50" cy="120.5" r="2.5" fill="#ff0000"/><circle cx="300.50" cy="120.5" r="2.5" fill="#ff0000"/><circle cx="309.50" cy="120.5" r="2.5" fill="#ff0000"/><circle cx="318.50" cy="120.5" r="2.5" fill="#ff0000"/><circle cx="326.50" cy="120.5" r="2.5" fill="#ff0000"/><circle cx="335.50" cy="120.5" r="2.5" fill="#ff0000"/><circle cx="344.50" cy="120.5" r="2.5" fill="#ff0000"/><circle cx="353.50" cy="120.5" r="2.5" fill="#ff0000"/><circle cx="361.50" cy="120.5" r="2.5" fill="#ff0000"/><circle cx="370.50" cy="120.5" r="2.5" fill="#ff0000"/><circle cx="379.50" cy="120.5" r="2.5" fill="#ff0000"/><circle cx="388.50" cy="120.5" r="2.5" fill="#ff0000"/><circle cx="396.50" cy="120.5" r="2.5" fill="#ff0000"/><circle cx="633.50" cy="120.5" r="2.5" fill="#ff0000"/><circle cx="642.50" cy="120.5" r="2.5" fill="#ff0000"/><circle cx="651.50" cy="120.5" r="2.5" fill="#ff0000"/><circle cx="712.50" cy="120.5" r="2.5" fill="#ff0000"/><circle cx="721.50" cy="120.5" r="2.5" fill="#ff0000"/><circle cx="730.50" cy="120.5" r="2.5" fill="#ff0000"/><circle cx="738.50" cy="120.5" r="2.5" fill="#ff0000"/><circle cx="747.50" cy="120.5" r="2.5" fill="#ff0000"/><circle cx="835.50" cy="120.5" r="2.5" fill="#ff0000"/><circle cx="887.50" cy="120.5" r="2.5" fill="#ff0000"/><circle cx="896.50" cy="120.5" r="2.5" fill="#ff0000"/><circle cx="905.50" cy="120.5" r="2.5" fill="#ff0000"/><circle cx="914.50" cy="120.5" r="2.5" fill="#ff0000"/><circle cx="931.50" cy="120.5" r="2.5" fill="#ff0000"/><circle cx="940.50" cy="120.5" r="2.5" fill="#ff0000"/><circle cx="949.50" cy="120.5" r="2.5" fill="#ff0000"/><circle cx="958.50" cy="120.5" r="2.5" fill="#ff0000"/><circle cx="966.50" cy="120.5" r="2.5" fill="#ff0000"/><circle cx="975.50" cy="120.5" r="2.5" fill="#ff0000"/><circle cx="984.50" cy="120.5" r="2.5" fill="#ff0000"/><circle cx="993.50" cy="120.5" r="2.5" fill="#ff0000"/><circle cx="1001.50" cy="120.5" r="2.5" fill="#ff0000"/><circle cx="1010.50" cy="120.5" r="2.5" fill="#ff0000"/><circle cx="1019.50" cy="120.5" r="2.5" fill="#ff0000"/><circle cx="1028.50" cy="120.5" r="2.5" fill="#ff0000"/><circle cx="1036.50" cy="120.5" r="2.5" fill="#ff0000"/><circle cx="1194.50" cy="120.5" r="2.5" fill="#ff0000"/><circle cx="1203.50" cy="120.5" r="2.5" fill="#ff0000"/><circle cx="1212.50" cy="120.5" r="2.5" fill="#ff0000"/><rect x="84.8" y="99" width="1.4" height="42" fill="#000"/><rect x="78.5" y="102" width="7" height="1" fill="#000"/><rect x="82.0" y="111" width="3.5" height="1" fill="#000"/><rect x="78.5" y="120" width="7" height="1" fill="#000"/><rect x="82.0" y="128" width="3.5" height="1" fill="#000"/><rect x="78.5" y="137" width="7" height="1" fill="#000"/><rect x="1312.7" y="99" width="1.4" height="42" fill="#fff"/><rect x="1313.4" y="102" width="8.4" height="1" fill="#fff"/><rect x="1313.4" y="111" width="3.8" height="1" fill="#fff"/><rect x="1313.4" y="120" width="8.4" height="1" fill="#fff"/><rect x="1313.4" y="128" width="3.8" height="1" fill="#fff"/><rect x="1313.4" y="137" width="8.4" height="1" fill="#fff"/><rect x="154.90" y="168" width="1.2" height="44.69999999999999" fill="#ffff00"/><rect x="198.90" y="168" width="1.2" height="44.69999999999999" fill="#009000"/><rect x="242.90" y="168" width="1.2" height="44.69999999999999" fill="#ffff00"/><rect x="294.90" y="168" width="1.2" height="44.69999999999999" fill="#009000"/><rect x="382.90" y="168" width="1.2" height="44.69999999999999" fill="#ffff00"/><rect x="400.90" y="168" width="1.2" height="44.69999999999999" fill="#ff0000"/><rect x="627.90" y="168" width="1.2" height="44.69999999999999" fill="#ffff00"/><rect x="654.90" y="168" width="1.2" height="44.69999999999999" fill="#ff0000"/><rect x="706.90" y="168" width="1.2" height="44.69999999999999" fill="#ffff00"/><rect x="750.90" y="168" width="1.2" height="44.69999999999999" fill="#ff0000"/><rect x="829.90" y="168" width="1.2" height="44.69999999999999" fill="#ffff00"/><rect x="838.90" y="168" width="1.2" height="44.69999999999999" fill="#ff0000"/><rect x="882.90" y="168" width="1.2" height="44.69999999999999" fill="#ffff00"/><rect x="917.90" y="168" width="1.2" height="44.69999999999999" fill="#ff0000"/><rect x="925.90" y="168" width="1.2" height="44.69999999999999" fill="#ffff00"/><rect x="961.90" y="168" width="1.2" height="44.69999999999999" fill="#009000"/><rect x="1039.90" y="168" width="1.2" height="44.69999999999999" fill="#ff0000"/><rect x="1188.90" y="168" width="1.2" height="44.69999999999999" fill="#ffff00"/><rect x="86" y="181.9" width="1227" height="1.2" fill="#0000e0"/><polyline points="86.0,188.4 98.4,185.8 126.0,185.5 132.7,184.4 138.0,185.0 151.0,187.7 164.3,190.0 182.8,190.0 203.9,189.5 229.0,188.4 238.0,190.4 248.7,191.7 284.0,192.0 291.0,190.2 309.0,186.5 319.0,185.3 328.0,185.8 335.0,188.0 361.5,190.2 370.3,192.0 388.0,192.0 398.0,194.5 405.4,196.0 420.0,194.5 439.8,195.7 448.6,197.2 501.3,197.8 518.8,200.7 545.2,200.7 551.8,202.9 578.0,202.9 591.3,200.0 600.0,198.5 650.6,198.5 661.6,200.0 677.0,203.8 703.3,203.8 739.5,204.4 792.2,205.1 798.8,202.9 842.8,201.6 851.5,202.9 871.3,199.4 893.3,197.2 906.5,196.7 915.0,198.9 937.2,197.2 959.2,196.3 976.7,194.5 1008.6,195.0 1028.3,197.8 1037.1,200.0 1054.7,200.0 1067.9,202.2 1089.8,203.8 1111.8,206.6 1125.0,208.8 1160.1,208.8 1168.9,207.3 1184.3,206.0 1211.7,205.5" fill="none" stroke="#000000" stroke-width="2" stroke-linejoin="round" shape-rendering="crispEdges"/><polyline points="86.0,190.4 127.4,190.4 132.7,187.7 138.0,186.4 230.0,186.2 275.0,185.8 281.0,190.0 388.0,190.0 394.0,188.4 420.0,190.6 464.0,190.6 472.7,191.9 571.5,191.9 580.3,196.7 694.5,196.7 703.3,201.6 720.0,202.2 783.5,202.9 829.6,203.3 838.4,201.1 895.5,198.5 917.4,198.9 963.6,197.8 980.0,197.2 993.2,195.7 1177.7,195.7 1183.2,203.3 1184.3,206.6 1211.7,206.6" fill="none" stroke="#ff0000" stroke-width="2" stroke-linejoin="round" shape-rendering="crispEdges"/><polyline points="86.0,186.4 126.0,186.8 151.0,187.1 229.0,187.7 243.4,188.4 260.0,187.6 388.0,187.6 394.0,192.0 420.0,191.9 439.8,191.9 447.5,195.0 545.2,195.7 554.0,200.7 720.0,200.7 836.2,201.1 913.0,200.7 917.4,199.4 987.7,199.4 994.3,196.5 1054.7,197.2 1061.3,198.9 1081.0,200.0 1087.6,202.2 1098.6,203.8 1182.0,204.4 1211.7,204.4" fill="none" stroke="#008c00" stroke-width="2" stroke-linejoin="round" shape-rendering="crispEdges"/><polyline points="86.0,180.2 99.8,178.3 106.4,179.2 132.7,179.4 143.2,181.5 153.8,183.8 164.3,186.4 180.1,187.1 192.0,185.8 205.2,183.1 218.4,180.8 227.6,182.5 238.1,185.1 246.0,187.1 260.0,188.0 276.6,187.7 317.6,176.2 342.5,181.4 361.5,182.1 386.4,188.0 420.0,189.1 453.0,188.6 477.0,184.0 492.5,184.7 518.8,190.2 538.6,190.2 551.8,188.0 571.5,188.0 591.3,180.3 606.7,178.7 650.6,178.7 661.6,181.4 683.6,186.9 694.5,186.9 703.3,181.4 713.0,178.7 728.6,178.7 748.3,183.6 765.9,183.6 792.2,178.1 814.2,174.8 836.2,174.8 849.4,178.1 862.5,178.1 873.5,174.3 895.5,172.1 908.7,174.8 921.8,177.4 928.4,177.4 941.6,173.7 963.6,173.7 976.7,170.8 985.5,173.0 1006.4,173.7 1039.3,181.4 1067.9,184.7 1098.6,186.2 1125.0,190.6 1142.5,190.6 1166.7,184.7 1179.9,182.5 1186.5,179.6 1197.4,178.7 1211.7,180.3" fill="none" stroke="#ffffff" stroke-width="2" stroke-linejoin="round" shape-rendering="crispEdges"/><polyline points="86.0,186.6 126.0,186.8 134.0,180.2 169.6,180.2 177.5,187.1 240.0,186.0 262.0,188.0 345.0,188.0 354.0,182.0 361.5,182.1 380.5,182.8 388.0,186.5 401.0,188.0 415.0,188.0 421.6,189.4 481.5,189.7 492.5,186.2 527.6,186.2 536.4,190.6 560.6,190.6 599.0,189.0 625.4,189.0 633.0,180.3 686.9,180.3 694.5,187.3 757.1,187.3 763.7,184.7 827.4,184.7 836.2,175.9 853.7,175.9 860.3,179.2 886.7,179.2 895.5,173.7 924.0,173.7 932.8,178.1 959.2,178.1 965.8,174.8 1045.9,175.2 1054.7,182.5 1076.6,183.6 1083.2,185.3 1133.7,185.8 1142.5,191.3 1177.7,191.3 1185.4,184.7 1204.0,184.0 1211.7,180.9" fill="none" stroke="#ff0000" stroke-width="1" stroke-linejoin="round" shape-rendering="crispEdges"/><polyline points="86.0,182.5 99.8,182.5 106.4,178.5 186.7,178.5 194.6,183.5 218.0,183.5 221.0,181.8 260.0,181.5 319.0,181.4 327.8,176.2 353.5,176.2 361.5,181.8 389.3,182.4 396.7,185.8 420.0,186.9 439.8,186.9 448.6,188.6 477.0,188.0 483.7,184.0 547.4,184.0 556.0,188.6 599.0,188.6 606.7,179.6 809.8,179.6 816.4,175.9 838.4,174.8 871.3,173.7 886.7,172.1 943.8,172.1 948.2,173.7 963.6,173.7 983.3,171.5 1008.6,171.5 1015.1,173.7 1054.7,173.7 1063.5,182.5 1083.0,182.5 1087.6,184.7 1173.3,184.7 1180.0,183.6 1196.3,183.1 1201.8,179.2 1211.7,178.7" fill="none" stroke="#008c00" stroke-width="1" stroke-linejoin="round" shape-rendering="crispEdges"/><rect x="84.8" y="168" width="1.4" height="44.69999999999999" fill="#000"/><rect x="78.5" y="169" width="7" height="1" fill="#000"/><rect x="82.0" y="175" width="3.5" height="1" fill="#000"/><rect x="78.5" y="182" width="7" height="1" fill="#000"/><rect x="82.0" y="188" width="3.5" height="1" fill="#000"/><rect x="82.0" y="195" width="3.5" height="1" fill="#000"/><rect x="82.0" y="201" width="3.5" height="1" fill="#000"/><rect x="82.0" y="208" width="3.5" height="1" fill="#000"/><rect x="1312.7" y="168" width="1.4" height="44.69999999999999" fill="#fff"/><rect x="1313.4" y="169" width="3.8" height="1" fill="#fff"/><rect x="1313.4" y="175" width="3.8" height="1" fill="#fff"/><rect x="1313.4" y="182" width="8.4" height="1" fill="#fff"/><rect x="1313.4" y="188" width="3.8" height="1" fill="#fff"/><rect x="1313.4" y="195" width="3.8" height="1" fill="#fff"/><rect x="1313.4" y="201" width="3.8" height="1" fill="#fff"/><rect x="1313.4" y="208" width="3.8" height="1" fill="#fff"/><rect x="154.90" y="240" width="1.2" height="34.80000000000001" fill="#ffff00"/><rect x="198.90" y="240" width="1.2" height="34.80000000000001" fill="#009000"/><rect x="242.90" y="240" width="1.2" height="34.80000000000001" fill="#ffff00"/><rect x="294.90" y="240" width="1.2" height="34.80000000000001" fill="#009000"/><rect x="382.90" y="240" width="1.2" height="34.80000000000001" fill="#ffff00"/><rect x="400.90" y="240" width="1.2" height="34.80000000000001" fill="#ff0000"/><rect x="627.90" y="240" width="1.2" height="34.80000000000001" fill="#ffff00"/><rect x="654.90" y="240" width="1.2" height="34.80000000000001" fill="#ff0000"/><rect x="706.90" y="240" width="1.2" height="34.80000000000001" fill="#ffff00"/><rect x="750.90" y="240" width="1.2" height="34.80000000000001" fill="#ff0000"/><rect x="829.90" y="240" width="1.2" height="34.80000000000001" fill="#ffff00"/><rect x="838.90" y="240" width="1.2" height="34.80000000000001" fill="#ff0000"/><rect x="882.90" y="240" width="1.2" height="34.80000000000001" fill="#ffff00"/><rect x="917.90" y="240" width="1.2" height="34.80000000000001" fill="#ff0000"/><rect x="925.90" y="240" width="1.2" height="34.80000000000001" fill="#ffff00"/><rect x="961.90" y="240" width="1.2" height="34.80000000000001" fill="#009000"/><rect x="1039.90" y="240" width="1.2" height="34.80000000000001" fill="#ff0000"/><rect x="1188.90" y="240" width="1.2" height="34.80000000000001" fill="#ffff00"/><rect x="88.90" y="244.7" width="3.2" height="14.0" rx="1.4" fill="#ffffff"/><path d="M88.50,257.9 L90.50,256.09999999999997 L92.50,257.9 L90.50,259.9 Z" fill="#000"/><rect x="96.90" y="244.7" width="3.2" height="14.0" rx="1.4" fill="#ffffff"/><path d="M96.50,257.9 L98.50,256.09999999999997 L100.50,257.9 L98.50,259.9 Z" fill="#000"/><rect x="105.90" y="247.7" width="3.2" height="11.0" rx="1.4" fill="#ffffff"/><path d="M105.50,257.9 L107.50,256.09999999999997 L109.50,257.9 L107.50,259.9 Z" fill="#000"/><rect x="114.90" y="247.7" width="3.2" height="11.0" rx="1.4" fill="#ffffff"/><path d="M114.50,257.9 L116.50,256.09999999999997 L118.50,257.9 L116.50,259.9 Z" fill="#000"/><rect x="123.90" y="244.7" width="3.2" height="14.0" rx="1.4" fill="#ffffff"/><path d="M123.50,257.9 L125.50,256.09999999999997 L127.50,257.9 L125.50,259.9 Z" fill="#000"/><rect x="131.90" y="243.7" width="3.2" height="15.0" rx="1.4" fill="#ffffff"/><path d="M131.50,257.9 L133.50,256.09999999999997 L135.50,257.9 L133.50,259.9 Z" fill="#000"/><rect x="140.90" y="247.7" width="3.2" height="11.0" rx="1.4" fill="#ffffff"/><path d="M140.50,257.9 L142.50,256.09999999999997 L144.50,257.9 L142.50,259.9 Z" fill="#000"/><rect x="149.90" y="247.7" width="3.2" height="11.0" rx="1.4" fill="#ffffff"/><path d="M149.50,257.9 L151.50,256.09999999999997 L153.50,257.9 L151.50,259.9 Z" fill="#000"/><rect x="158.90" y="252.7" width="3.2" height="6.0" rx="1.4" fill="#ffffff"/><path d="M158.50,257.9 L160.50,256.09999999999997 L162.50,257.9 L160.50,259.9 Z" fill="#000"/><rect x="167.90" y="253.7" width="3.2" height="5.0" rx="1.4" fill="#ffffff"/><path d="M167.50,257.9 L169.50,256.09999999999997 L171.50,257.9 L169.50,259.9 Z" fill="#000"/><rect x="175.90" y="250.7" width="3.2" height="8.0" rx="1.4" fill="#ffffff"/><path d="M175.50,257.9 L177.50,256.09999999999997 L179.50,257.9 L177.50,259.9 Z" fill="#000"/><rect x="184.90" y="246.7" width="3.2" height="12.0" rx="1.4" fill="#ffffff"/><path d="M184.50,257.9 L186.50,256.09999999999997 L188.50,257.9 L186.50,259.9 Z" fill="#000"/><rect x="193.90" y="253.7" width="3.2" height="5.0" rx="1.4" fill="#ffffff"/><path d="M193.50,257.9 L195.50,256.09999999999997 L197.50,257.9 L195.50,259.9 Z" fill="#000"/><rect x="202.90" y="244.7" width="3.2" height="14.0" rx="1.4" fill="#ffffff"/><path d="M202.50,257.9 L204.50,256.09999999999997 L206.50,257.9 L204.50,259.9 Z" fill="#000"/><rect x="210.90" y="244.7" width="3.2" height="14.0" rx="1.4" fill="#ffffff"/><path d="M210.50,257.9 L212.50,256.09999999999997 L214.50,257.9 L212.50,259.9 Z" fill="#000"/><rect x="219.90" y="247.7" width="3.2" height="11.0" rx="1.4" fill="#ffffff"/><path d="M219.50,257.9 L221.50,256.09999999999997 L223.50,257.9 L221.50,259.9 Z" fill="#000"/><rect x="228.90" y="249.7" width="3.2" height="9.0" rx="1.4" fill="#ffffff"/><path d="M228.50,257.9 L230.50,256.09999999999997 L232.50,257.9 L230.50,259.9 Z" fill="#000"/><rect x="237.90" y="252.7" width="3.2" height="6.0" rx="1.4" fill="#ffffff"/><path d="M237.50,257.9 L239.50,256.09999999999997 L241.50,257.9 L239.50,259.9 Z" fill="#000"/><rect x="245.90" y="252.7" width="3.2" height="6.0" rx="1.4" fill="#ffffff"/><path d="M245.50,257.9 L247.50,256.09999999999997 L249.50,257.9 L247.50,259.9 Z" fill="#000"/><rect x="254.90" y="253.7" width="3.2" height="5.0" rx="1.4" fill="#ffffff"/><path d="M254.50,257.9 L256.50,256.09999999999997 L258.50,257.9 L256.50,259.9 Z" fill="#000"/><rect x="263.90" y="250.7" width="3.2" height="8.0" rx="1.4" fill="#ffffff"/><path d="M263.50,257.9 L265.50,256.09999999999997 L267.50,257.9 L265.50,259.9 Z" fill="#000"/><rect x="272.90" y="250.7" width="3.2" height="8.0" rx="1.4" fill="#ffffff"/><path d="M272.50,257.9 L274.50,256.09999999999997 L276.50,257.9 L274.50,259.9 Z" fill="#000"/><rect x="281.90" y="244.7" width="3.2" height="14.0" rx="1.4" fill="#ffffff"/><path d="M281.50,257.9 L283.50,256.09999999999997 L285.50,257.9 L283.50,259.9 Z" fill="#000"/><rect x="289.90" y="244.7" width="3.2" height="14.0" rx="1.4" fill="#ffffff"/><path d="M289.50,257.9 L291.50,256.09999999999997 L293.50,257.9 L291.50,259.9 Z" fill="#000"/><rect x="298.90" y="241.7" width="3.2" height="17.0" rx="1.4" fill="#ffffff"/><path d="M298.50,257.9 L300.50,256.09999999999997 L302.50,257.9 L300.50,259.9 Z" fill="#000"/><rect x="307.90" y="241.7" width="3.2" height="17.0" rx="1.4" fill="#ffffff"/><path d="M307.50,257.9 L309.50,256.09999999999997 L311.50,257.9 L309.50,259.9 Z" fill="#000"/><rect x="316.90" y="241.7" width="3.2" height="17.0" rx="1.4" fill="#ffffff"/><path d="M316.50,257.9 L318.50,256.09999999999997 L320.50,257.9 L318.50,259.9 Z" fill="#000"/><rect x="324.90" y="244.7" width="3.2" height="14.0" rx="1.4" fill="#ffffff"/><path d="M324.50,257.9 L326.50,256.09999999999997 L328.50,257.9 L326.50,259.9 Z" fill="#000"/><rect x="333.90" y="246.7" width="3.2" height="12.0" rx="1.4" fill="#ffffff"/><path d="M333.50,257.9 L335.50,256.09999999999997 L337.50,257.9 L335.50,259.9 Z" fill="#000"/><rect x="342.90" y="246.7" width="3.2" height="12.0" rx="1.4" fill="#ffffff"/><path d="M342.50,257.9 L344.50,256.09999999999997 L346.50,257.9 L344.50,259.9 Z" fill="#000"/><rect x="351.90" y="244.7" width="3.2" height="14.0" rx="1.4" fill="#ffffff"/><path d="M351.50,257.9 L353.50,256.09999999999997 L355.50,257.9 L353.50,259.9 Z" fill="#000"/><rect x="359.90" y="247.7" width="3.2" height="11.0" rx="1.4" fill="#ffffff"/><path d="M359.50,257.9 L361.50,256.09999999999997 L363.50,257.9 L361.50,259.9 Z" fill="#000"/><rect x="368.90" y="250.7" width="3.2" height="8.0" rx="1.4" fill="#ffffff"/><path d="M368.50,257.9 L370.50,256.09999999999997 L372.50,257.9 L370.50,259.9 Z" fill="#000"/><rect x="377.90" y="250.7" width="3.2" height="8.0" rx="1.4" fill="#ffffff"/><path d="M377.50,257.9 L379.50,256.09999999999997 L381.50,257.9 L379.50,259.9 Z" fill="#000"/><rect x="386.90" y="249.7" width="3.2" height="9.0" rx="1.4" fill="#ffffff"/><path d="M386.50,257.9 L388.50,256.09999999999997 L390.50,257.9 L388.50,259.9 Z" fill="#000"/><rect x="394.90" y="252.7" width="3.2" height="6.0" rx="1.4" fill="#ffffff"/><path d="M394.50,257.9 L396.50,256.09999999999997 L398.50,257.9 L396.50,259.9 Z" fill="#000"/><rect x="403.90" y="256.1" width="3.2" height="5.1" rx="1.5" fill="#000000"/><rect x="412.90" y="256.1" width="3.2" height="10.9" rx="1.5" fill="#000000"/><rect x="421.90" y="256.1" width="3.2" height="10.9" rx="1.5" fill="#000000"/><rect x="430.90" y="256.1" width="3.2" height="10.9" rx="1.5" fill="#000000"/><rect x="438.90" y="256.1" width="3.2" height="14.4" rx="1.5" fill="#000000"/><rect x="447.90" y="256.1" width="3.2" height="17.1" rx="1.5" fill="#000000"/><rect x="456.90" y="256.1" width="3.2" height="14.4" rx="1.5" fill="#000000"/><rect x="465.90" y="256.1" width="3.2" height="14.4" rx="1.5" fill="#000000"/><rect x="473.90" y="256.1" width="3.2" height="12.1" rx="1.5" fill="#000000"/><rect x="482.90" y="256.1" width="3.2" height="17.1" rx="1.5" fill="#000000"/><rect x="491.90" y="256.1" width="3.2" height="12.1" rx="1.5" fill="#000000"/><rect x="500.90" y="256.1" width="3.2" height="17.1" rx="1.5" fill="#000000"/><rect x="508.90" y="256.1" width="3.2" height="17.1" rx="1.5" fill="#000000"/><rect x="517.90" y="256.1" width="3.2" height="17.1" rx="1.5" fill="#000000"/><rect x="526.90" y="256.1" width="3.2" height="17.1" rx="1.5" fill="#000000"/><rect x="535.90" y="256.1" width="3.2" height="14.4" rx="1.5" fill="#000000"/><rect x="544.90" y="256.1" width="3.2" height="14.4" rx="1.5" fill="#000000"/><rect x="552.90" y="256.1" width="3.2" height="17.1" rx="1.5" fill="#000000"/><rect x="561.90" y="256.1" width="3.2" height="14.4" rx="1.5" fill="#000000"/><rect x="570.90" y="256.1" width="3.2" height="14.4" rx="1.5" fill="#000000"/><rect x="579.90" y="256.1" width="3.2" height="9.1" rx="1.5" fill="#000000"/><rect x="587.90" y="256.1" width="3.2" height="8.3" rx="1.5" fill="#000000"/><rect x="596.90" y="256.1" width="3.2" height="8.3" rx="1.5" fill="#000000"/><rect x="605.90" y="256.1" width="3.2" height="9.6" rx="1.5" fill="#000000"/><rect x="614.90" y="256.1" width="3.2" height="11.4" rx="1.5" fill="#000000"/><rect x="622.90" y="256.1" width="3.2" height="11.4" rx="1.5" fill="#000000"/><rect x="631.90" y="256.1" width="3.2" height="9.1" rx="1.5" fill="#000000"/><rect x="640.90" y="256.1" width="3.2" height="11.4" rx="1.5" fill="#000000"/><rect x="649.90" y="256.1" width="3.2" height="11.4" rx="1.5" fill="#000000"/><rect x="658.90" y="256.1" width="3.2" height="12.1" rx="1.5" fill="#000000"/><rect x="666.90" y="256.1" width="3.2" height="12.1" rx="1.5" fill="#000000"/><rect x="675.90" y="256.1" width="3.2" height="14.4" rx="1.5" fill="#000000"/><rect x="684.90" y="256.1" width="3.2" height="14.4" rx="1.5" fill="#000000"/><rect x="693.90" y="256.1" width="3.2" height="11.4" rx="1.5" fill="#000000"/><rect x="701.90" y="256.1" width="3.2" height="8.3" rx="1.5" fill="#000000"/><rect x="710.90" y="256.1" width="3.2" height="8.3" rx="1.5" fill="#000000"/><rect x="719.90" y="256.1" width="3.2" height="11.4" rx="1.5" fill="#000000"/><rect x="728.90" y="256.1" width="3.2" height="11.4" rx="1.5" fill="#000000"/><rect x="736.90" y="256.1" width="3.2" height="17.1" rx="1.5" fill="#000000"/><rect x="745.90" y="256.1" width="3.2" height="17.1" rx="1.5" fill="#000000"/><rect x="754.90" y="256.1" width="3.2" height="17.1" rx="1.5" fill="#000000"/><rect x="763.90" y="256.1" width="3.2" height="15.3" rx="1.5" fill="#000000"/><rect x="771.90" y="256.1" width="3.2" height="14.4" rx="1.5" fill="#000000"/><rect x="780.90" y="256.1" width="3.2" height="14.4" rx="1.5" fill="#000000"/><rect x="789.90" y="256.1" width="3.2" height="8.3" rx="1.5" fill="#000000"/><rect x="798.90" y="256.1" width="3.2" height="8.3" rx="1.5" fill="#000000"/><rect x="807.90" y="256.1" width="3.2" height="8.3" rx="1.5" fill="#000000"/><rect x="815.90" y="256.1" width="3.2" height="11.4" rx="1.5" fill="#000000"/><rect x="824.90" y="256.1" width="3.2" height="12.1" rx="1.5" fill="#000000"/><rect x="833.90" y="256.1" width="3.2" height="8.3" rx="1.5" fill="#000000"/><rect x="842.90" y="256.1" width="3.2" height="15.3" rx="1.5" fill="#000000"/><rect x="850.90" y="256.1" width="3.2" height="17.1" rx="1.5" fill="#000000"/><rect x="859.90" y="256.1" width="3.2" height="11.4" rx="1.5" fill="#000000"/><rect x="868.90" y="256.1" width="3.2" height="11.4" rx="1.5" fill="#000000"/><rect x="877.90" y="256.1" width="3.2" height="8.3" rx="1.5" fill="#000000"/><rect x="885.90" y="256.1" width="3.2" height="9.1" rx="1.5" fill="#000000"/><rect x="894.90" y="256.1" width="3.2" height="8.3" rx="1.5" fill="#000000"/><rect x="903.90" y="256.1" width="3.2" height="11.4" rx="1.5" fill="#000000"/><rect x="912.90" y="256.1" width="3.2" height="17.1" rx="1.5" fill="#000000"/><rect x="921.90" y="256.1" width="3.2" height="17.1" rx="1.5" fill="#000000"/><rect x="929.90" y="256.1" width="3.2" height="8.3" rx="1.5" fill="#000000"/><rect x="938.90" y="256.1" width="3.2" height="9.4" rx="1.5" fill="#000000"/><rect x="947.90" y="256.1" width="3.2" height="9.4" rx="1.5" fill="#000000"/><rect x="956.90" y="256.1" width="3.2" height="9.4" rx="1.5" fill="#000000"/><rect x="964.90" y="249.4" width="3.2" height="9.3" rx="1.4" fill="#ffffff"/><path d="M964.50,257.9 L966.50,256.09999999999997 L968.50,257.9 L966.50,259.9 Z" fill="#000"/><rect x="973.90" y="246.3" width="3.2" height="12.4" rx="1.4" fill="#ffffff"/><path d="M973.50,257.9 L975.50,256.09999999999997 L977.50,257.9 L975.50,259.9 Z" fill="#000"/><rect x="982.90" y="247.2" width="3.2" height="11.5" rx="1.4" fill="#ffffff"/><path d="M982.50,257.9 L984.50,256.09999999999997 L986.50,257.9 L984.50,259.9 Z" fill="#000"/><rect x="991.90" y="249.4" width="3.2" height="9.3" rx="1.4" fill="#ffffff"/><path d="M991.50,257.9 L993.50,256.09999999999997 L995.50,257.9 L993.50,259.9 Z" fill="#000"/><rect x="999.90" y="246.3" width="3.2" height="12.4" rx="1.4" fill="#ffffff"/><path d="M999.50,257.9 L1001.50,256.09999999999997 L1003.50,257.9 L1001.50,259.9 Z" fill="#000"/><rect x="1008.90" y="244.2" width="3.2" height="14.5" rx="1.4" fill="#ffffff"/><path d="M1008.50,257.9 L1010.50,256.09999999999997 L1012.50,257.9 L1010.50,259.9 Z" fill="#000"/><rect x="1017.90" y="249.4" width="3.2" height="9.3" rx="1.4" fill="#ffffff"/><path d="M1017.50,257.9 L1019.50,256.09999999999997 L1021.50,257.9 L1019.50,259.9 Z" fill="#000"/><rect x="1026.90" y="249.0" width="3.2" height="9.7" rx="1.4" fill="#ffffff"/><path d="M1026.50,257.9 L1028.50,256.09999999999997 L1030.50,257.9 L1028.50,259.9 Z" fill="#000"/><rect x="1034.90" y="250.5" width="3.2" height="8.2" rx="1.4" fill="#ffffff"/><path d="M1034.50,257.9 L1036.50,256.09999999999997 L1038.50,257.9 L1036.50,259.9 Z" fill="#000"/><rect x="1043.90" y="256.1" width="3.2" height="9.4" rx="1.5" fill="#000000"/><rect x="1052.90" y="256.1" width="3.2" height="11.6" rx="1.5" fill="#000000"/><rect x="1061.90" y="256.1" width="3.2" height="14.8" rx="1.5" fill="#000000"/><rect x="1070.90" y="256.1" width="3.2" height="14.8" rx="1.5" fill="#000000"/><rect x="1078.90" y="256.1" width="3.2" height="10.9" rx="1.5" fill="#000000"/><rect x="1087.90" y="256.1" width="3.2" height="14.4" rx="1.5" fill="#000000"/><rect x="1096.90" y="256.1" width="3.2" height="10.9" rx="1.5" fill="#000000"/><rect x="1105.90" y="256.1" width="3.2" height="15.3" rx="1.5" fill="#000000"/><rect x="1113.90" y="256.1" width="3.2" height="17.5" rx="1.5" fill="#000000"/><rect x="1122.90" y="256.1" width="3.2" height="17.5" rx="1.5" fill="#000000"/><rect x="1131.90" y="256.1" width="3.2" height="17.5" rx="1.5" fill="#000000"/><rect x="1140.90" y="256.1" width="3.2" height="14.4" rx="1.5" fill="#000000"/><rect x="1148.90" y="256.1" width="3.2" height="14.4" rx="1.5" fill="#000000"/><rect x="1157.90" y="256.1" width="3.2" height="9.4" rx="1.5" fill="#000000"/><rect x="1166.90" y="256.1" width="3.2" height="9.4" rx="1.5" fill="#000000"/><rect x="1175.90" y="256.1" width="3.2" height="14.8" rx="1.5" fill="#000000"/><rect x="1184.90" y="256.1" width="3.2" height="9.4" rx="1.5" fill="#000000"/><rect x="1192.90" y="256.1" width="3.2" height="8.3" rx="1.5" fill="#000000"/><rect x="1201.90" y="256.1" width="3.2" height="17.5" rx="1.5" fill="#000000"/><rect x="1210.90" y="256.1" width="3.2" height="11.6" rx="1.5" fill="#000000"/><rect x="84.8" y="240" width="1.4" height="34.80000000000001" fill="#000"/><rect x="78.5" y="241" width="7" height="1" fill="#000"/><rect x="82.0" y="249" width="3.5" height="1" fill="#000"/><rect x="78.5" y="257" width="7" height="1" fill="#000"/><rect x="82.0" y="265" width="3.5" height="1" fill="#000"/><rect x="78.5" y="273" width="7" height="1" fill="#000"/><rect x="1312.7" y="240" width="1.4" height="34.80000000000001" fill="#fff"/><rect x="1313.4" y="241" width="8.4" height="1" fill="#fff"/><rect x="1313.4" y="249" width="3.8" height="1" fill="#fff"/><rect x="1313.4" y="257" width="8.4" height="1" fill="#fff"/><rect x="1313.4" y="265" width="3.8" height="1" fill="#fff"/><rect x="1313.4" y="273" width="8.4" height="1" fill="#fff"/><rect x="154.90" y="302" width="1.2" height="327" fill="#ffff00"/><rect x="198.90" y="302" width="1.2" height="327" fill="#009000"/><rect x="242.90" y="302" width="1.2" height="327" fill="#ffff00"/><rect x="294.90" y="302" width="1.2" height="327" fill="#009000"/><rect x="382.90" y="302" width="1.2" height="327" fill="#ffff00"/><rect x="400.90" y="302" width="1.2" height="327" fill="#ff0000"/><rect x="627.90" y="302" width="1.2" height="327" fill="#ffff00"/><rect x="654.90" y="302" width="1.2" height="327" fill="#ff0000"/><rect x="706.90" y="302" width="1.2" height="327" fill="#ffff00"/><rect x="750.90" y="302" width="1.2" height="327" fill="#ff0000"/><rect x="829.90" y="302" width="1.2" height="327" fill="#ffff00"/><rect x="838.90" y="302" width="1.2" height="327" fill="#ff0000"/><rect x="882.90" y="302" width="1.2" height="327" fill="#ffff00"/><rect x="917.90" y="302" width="1.2" height="327" fill="#ff0000"/><rect x="925.90" y="302" width="1.2" height="327" fill="#ffff00"/><rect x="961.90" y="302" width="1.2" height="327" fill="#009000"/><rect x="1039.90" y="302" width="1.2" height="327" fill="#ff0000"/><rect x="1188.90" y="302" width="1.2" height="327" fill="#ffff00"/><rect x="84.8" y="302" width="1.4" height="327" fill="#ffffff"/><rect x="78.5" y="619" width="7" height="1" fill="#ffffff"/><rect x="82.0" y="611" width="3.5" height="1" fill="#ffffff"/><rect x="78.5" y="604" width="7" height="1" fill="#ffffff"/><rect x="82.0" y="597" width="3.5" height="1" fill="#ffffff"/><rect x="78.5" y="589" width="7" height="1" fill="#ffffff"/><rect x="82.0" y="582" width="3.5" height="1" fill="#ffffff"/><rect x="78.5" y="575" width="7" height="1" fill="#ffffff"/><rect x="82.0" y="568" width="3.5" height="1" fill="#ffffff"/><rect x="78.5" y="560" width="7" height="1" fill="#ffffff"/><rect x="82.0" y="553" width="3.5" height="1" fill="#ffffff"/><rect x="78.5" y="546" width="7" height="1" fill="#ffffff"/><rect x="82.0" y="538" width="3.5" height="1" fill="#ffffff"/><rect x="78.5" y="531" width="7" height="1" fill="#ffffff"/><rect x="82.0" y="524" width="3.5" height="1" fill="#ffffff"/><rect x="78.5" y="516" width="7" height="1" fill="#ffffff"/><rect x="82.0" y="509" width="3.5" height="1" fill="#ffffff"/><rect x="78.5" y="502" width="7" height="1" fill="#ffffff"/><rect x="82.0" y="495" width="3.5" height="1" fill="#ffffff"/><rect x="78.5" y="487" width="7" height="1" fill="#ffffff"/><rect x="82.0" y="480" width="3.5" height="1" fill="#ffffff"/><rect x="78.5" y="473" width="7" height="1" fill="#ffffff"/><rect x="82.0" y="465" width="3.5" height="1" fill="#ffffff"/><rect x="78.5" y="458" width="7" height="1" fill="#ffffff"/><rect x="82.0" y="451" width="3.5" height="1" fill="#ffffff"/><rect x="78.5" y="443" width="7" height="1" fill="#ffffff"/><rect x="82.0" y="436" width="3.5" height="1" fill="#ffffff"/><rect x="78.5" y="429" width="7" height="1" fill="#ffffff"/><rect x="82.0" y="422" width="3.5" height="1" fill="#ffffff"/><rect x="78.5" y="414" width="7" height="1" fill="#ffffff"/><rect x="82.0" y="407" width="3.5" height="1" fill="#ffffff"/><rect x="78.5" y="400" width="7" height="1" fill="#ffffff"/><rect x="82.0" y="392" width="3.5" height="1" fill="#ffffff"/><rect x="78.5" y="385" width="7" height="1" fill="#ffffff"/><rect x="82.0" y="378" width="3.5" height="1" fill="#ffffff"/><rect x="78.5" y="370" width="7" height="1" fill="#ffffff"/><rect x="82.0" y="363" width="3.5" height="1" fill="#ffffff"/><rect x="78.5" y="356" width="7" height="1" fill="#ffffff"/><rect x="82.0" y="349" width="3.5" height="1" fill="#ffffff"/><rect x="78.5" y="341" width="7" height="1" fill="#ffffff"/><rect x="82.0" y="334" width="3.5" height="1" fill="#ffffff"/><rect x="78.5" y="327" width="7" height="1" fill="#ffffff"/><rect x="82.0" y="319" width="3.5" height="1" fill="#ffffff"/><rect x="78.5" y="312" width="7" height="1" fill="#ffffff"/><rect x="82.0" y="305" width="3.5" height="1" fill="#ffffff"/><rect x="1312.7" y="302" width="1.4" height="327" fill="#ffffff"/><rect x="1313.4" y="619" width="8.4" height="1" fill="#ffffff"/><rect x="1313.4" y="611" width="3.8" height="1" fill="#ffffff"/><rect x="1313.4" y="604" width="8.4" height="1" fill="#ffffff"/><rect x="1313.4" y="597" width="3.8" height="1" fill="#ffffff"/><rect x="1313.4" y="589" width="8.4" height="1" fill="#ffffff"/><rect x="1313.4" y="582" width="3.8" height="1" fill="#ffffff"/><rect x="1313.4" y="575" width="8.4" height="1" fill="#ffffff"/><rect x="1313.4" y="568" width="3.8" height="1" fill="#ffffff"/><rect x="1313.4" y="560" width="8.4" height="1" fill="#ffffff"/><rect x="1313.4" y="553" width="3.8" height="1" fill="#ffffff"/><rect x="1313.4" y="546" width="8.4" height="1" fill="#ffffff"/><rect x="1313.4" y="538" width="3.8" height="1" fill="#ffffff"/><rect x="1313.4" y="531" width="8.4" height="1" fill="#ffffff"/><rect x="1313.4" y="524" width="3.8" height="1" fill="#ffffff"/><rect x="1313.4" y="516" width="8.4" height="1" fill="#ffffff"/><rect x="1313.4" y="509" width="3.8" height="1" fill="#ffffff"/><rect x="1313.4" y="502" width="8.4" height="1" fill="#ffffff"/><rect x="1313.4" y="495" width="3.8" height="1" fill="#ffffff"/><rect x="1313.4" y="487" width="8.4" height="1" fill="#ffffff"/><rect x="1313.4" y="480" width="3.8" height="1" fill="#ffffff"/><rect x="1313.4" y="473" width="8.4" height="1" fill="#ffffff"/><rect x="1313.4" y="465" width="3.8" height="1" fill="#ffffff"/><rect x="1313.4" y="458" width="8.4" height="1" fill="#ffffff"/><rect x="1313.4" y="451" width="3.8" height="1" fill="#ffffff"/><rect x="1313.4" y="443" width="8.4" height="1" fill="#ffffff"/><rect x="1313.4" y="436" width="3.8" height="1" fill="#ffffff"/><rect x="1313.4" y="429" width="8.4" height="1" fill="#ffffff"/><rect x="1313.4" y="422" width="3.8" height="1" fill="#ffffff"/><rect x="1313.4" y="414" width="8.4" height="1" fill="#ffffff"/><rect x="1313.4" y="407" width="3.8" height="1" fill="#ffffff"/><rect x="1313.4" y="400" width="8.4" height="1" fill="#ffffff"/><rect x="1313.4" y="392" width="3.8" height="1" fill="#ffffff"/><rect x="1313.4" y="385" width="8.4" height="1" fill="#ffffff"/><rect x="1313.4" y="378" width="3.8" height="1" fill="#ffffff"/><rect x="1313.4" y="370" width="8.4" height="1" fill="#ffffff"/><rect x="1313.4" y="363" width="3.8" height="1" fill="#ffffff"/><rect x="1313.4" y="356" width="8.4" height="1" fill="#ffffff"/><rect x="1313.4" y="349" width="3.8" height="1" fill="#ffffff"/><rect x="1313.4" y="341" width="8.4" height="1" fill="#ffffff"/><rect x="1313.4" y="334" width="3.8" height="1" fill="#ffffff"/><rect x="1313.4" y="327" width="8.4" height="1" fill="#ffffff"/><rect x="1313.4" y="319" width="3.8" height="1" fill="#ffffff"/><rect x="1313.4" y="312" width="8.4" height="1" fill="#ffffff"/><rect x="1313.4" y="305" width="3.8" height="1" fill="#ffffff"/><g shape-rendering="crispEdges"><rect x="90.0" y="439" width="1" height="2" fill="#e6e6e6"/><rect x="90.0" y="445" width="1" height="1" fill="#e6e6e6"/><rect x="87.5" y="441.5" width="6" height="3" fill="none" stroke="#e6e6e6" stroke-width="1"/><rect x="98.0" y="430" width="1" height="2" fill="#e6e6e6"/><rect x="98.0" y="442" width="1" height="1" fill="#e6e6e6"/><rect x="95.5" y="432.5" width="6" height="9" fill="none" stroke="#e6e6e6" stroke-width="1"/><rect x="107.0" y="426" width="1" height="4" fill="#e6e6e6"/><rect x="104.5" y="430.5" width="6" height="2" fill="none" stroke="#e6e6e6" stroke-width="1"/><rect x="116.0" y="431" width="1" height="3" fill="#84a6d2"/><rect x="113.0" y="432" width="7" height="2" fill="#84a6d2"/><rect x="125.0" y="426" width="1" height="2" fill="#e6e6e6"/><rect x="122.5" y="428.5" width="6" height="2" fill="none" stroke="#e6e6e6" stroke-width="1"/><rect x="133.0" y="415" width="1" height="4" fill="#e6e6e6"/><rect x="130.5" y="419.5" width="6" height="8" fill="none" stroke="#e6e6e6" stroke-width="1"/><rect x="142.0" y="418" width="1" height="8" fill="#84a6d2"/><rect x="139.0" y="419" width="7" height="1" fill="#84a6d2"/><rect x="151.0" y="415" width="1" height="6" fill="#e6e6e6"/><rect x="148.0" y="419" width="7" height="1" fill="#e6e6e6"/><rect x="160.0" y="418" width="1" height="10" fill="#84a6d2"/><rect x="157.0" y="421" width="7" height="6" fill="#84a6d2"/><rect x="169.0" y="425" width="1" height="16" fill="#84a6d2"/><rect x="166.0" y="427" width="7" height="8" fill="#84a6d2"/><rect x="177.0" y="425" width="1" height="4" fill="#e6e6e6"/><rect x="174.5" y="429.5" width="6" height="2" fill="none" stroke="#e6e6e6" stroke-width="1"/><rect x="186.0" y="425" width="1" height="3" fill="#e6e6e6"/><rect x="183.5" y="414.5" width="6" height="10" fill="none" stroke="#e6e6e6" stroke-width="1"/><rect x="195.0" y="402" width="1" height="24" fill="#84a6d2"/><rect x="192.0" y="413" width="7" height="10" fill="#84a6d2"/><rect x="204.0" y="409" width="1" height="1" fill="#e6e6e6"/><rect x="204.0" y="423" width="1" height="3" fill="#e6e6e6"/><rect x="201.5" y="410.5" width="6" height="12" fill="none" stroke="#e6e6e6" stroke-width="1"/><rect x="212.0" y="407" width="1" height="2" fill="#e6e6e6"/><rect x="209.5" y="409.5" width="6" height="2" fill="none" stroke="#e6e6e6" stroke-width="1"/><rect x="221.0" y="410" width="1" height="10" fill="#84a6d2"/><rect x="218.0" y="410" width="7" height="4" fill="#84a6d2"/><rect x="230.0" y="415" width="1" height="12" fill="#84a6d2"/><rect x="227.0" y="415" width="7" height="6" fill="#84a6d2"/><rect x="239.0" y="411" width="1" height="5" fill="#e6e6e6"/><rect x="239.0" y="422" width="1" height="5" fill="#e6e6e6"/><rect x="236.5" y="416.5" width="6" height="5" fill="none" stroke="#e6e6e6" stroke-width="1"/><rect x="247.0" y="413" width="1" height="9" fill="#84a6d2"/><rect x="244.0" y="413" width="7" height="4" fill="#84a6d2"/><rect x="256.0" y="416" width="1" height="7" fill="#84a6d2"/><rect x="253.0" y="419" width="7" height="3" fill="#84a6d2"/><rect x="265.0" y="420" width="1" height="6" fill="#e6e6e6"/><rect x="262.0" y="420" width="7" height="2" fill="#e6e6e6"/><rect x="274.0" y="418" width="1" height="6" fill="#84a6d2"/><rect x="271.0" y="420" width="7" height="1" fill="#84a6d2"/><rect x="283.0" y="408" width="1" height="4" fill="#e6e6e6"/><rect x="280.5" y="412.5" width="6" height="11" fill="none" stroke="#e6e6e6" stroke-width="1"/><rect x="291.0" y="384" width="1" height="10" fill="#e6e6e6"/><rect x="291.0" y="414" width="1" height="2" fill="#e6e6e6"/><rect x="288.5" y="394.5" width="6" height="19" fill="none" stroke="#e6e6e6" stroke-width="1"/><rect x="300.0" y="373" width="1" height="7" fill="#e6e6e6"/><rect x="300.0" y="394" width="1" height="4" fill="#e6e6e6"/><rect x="297.5" y="380.5" width="6" height="13" fill="none" stroke="#e6e6e6" stroke-width="1"/><rect x="309.0" y="369" width="1" height="3" fill="#e6e6e6"/><rect x="309.0" y="392" width="1" height="2" fill="#e6e6e6"/><rect x="306.5" y="372.5" width="6" height="19" fill="none" stroke="#e6e6e6" stroke-width="1"/><rect x="318.0" y="346" width="1" height="1" fill="#e6e6e6"/><rect x="315.5" y="347.5" width="6" height="24" fill="none" stroke="#e6e6e6" stroke-width="1"/><rect x="326.0" y="337" width="1" height="19" fill="#84a6d2"/><rect x="323.0" y="347" width="7" height="3" fill="#84a6d2"/><rect x="335.0" y="349" width="1" height="23" fill="#84a6d2"/><rect x="332.0" y="356" width="7" height="5" fill="#84a6d2"/><rect x="344.0" y="353" width="1" height="3" fill="#e6e6e6"/><rect x="344.0" y="362" width="1" height="1" fill="#e6e6e6"/><rect x="341.5" y="356.5" width="6" height="5" fill="none" stroke="#e6e6e6" stroke-width="1"/><rect x="353.0" y="353" width="1" height="17" fill="#e6e6e6"/><rect x="350.0" y="355" width="7" height="2" fill="#e6e6e6"/><rect x="361.0" y="350" width="1" height="13" fill="#84a6d2"/><rect x="358.0" y="350" width="7" height="8" fill="#84a6d2"/><rect x="370.0" y="359" width="1" height="17" fill="#84a6d2"/><rect x="367.0" y="359" width="7" height="17" fill="#84a6d2"/><rect x="379.0" y="378" width="1" height="16" fill="#84a6d2"/><rect x="376.0" y="378" width="7" height="11" fill="#84a6d2"/><rect x="388.0" y="388" width="1" height="11" fill="#84a6d2"/><rect x="385.0" y="388" width="7" height="7" fill="#84a6d2"/><rect x="396.0" y="389" width="1" height="16" fill="#84a6d2"/><rect x="393.0" y="396" width="7" height="7" fill="#84a6d2"/><rect x="405.0" y="405" width="1" height="24" fill="#84a6d2"/><rect x="402.0" y="406" width="7" height="17" fill="#84a6d2"/><rect x="414.0" y="418" width="1" height="13" fill="#84a6d2"/><rect x="411.0" y="423" width="7" height="7" fill="#84a6d2"/><rect x="423.0" y="419" width="1" height="13" fill="#84a6d2"/><rect x="420.0" y="429" width="7" height="3" fill="#84a6d2"/><rect x="432.0" y="427" width="1" height="18" fill="#84a6d2"/><rect x="429.0" y="432" width="7" height="6" fill="#84a6d2"/><rect x="440.0" y="425" width="1" height="11" fill="#e6e6e6"/><rect x="437.5" y="436.5" width="6" height="2" fill="none" stroke="#e6e6e6" stroke-width="1"/><rect x="449.0" y="428" width="1" height="14" fill="#84a6d2"/><rect x="446.0" y="434" width="7" height="8" fill="#84a6d2"/><rect x="458.0" y="436" width="1" height="8" fill="#e6e6e6"/><rect x="455.0" y="437" width="7" height="5" fill="#e6e6e6"/><rect x="467.0" y="432" width="1" height="10" fill="#e6e6e6"/><rect x="464.0" y="439" width="7" height="2" fill="#e6e6e6"/><rect x="475.0" y="437" width="1" height="26" fill="#84a6d2"/><rect x="472.0" y="437" width="7" height="9" fill="#84a6d2"/><rect x="484.0" y="439" width="1" height="13" fill="#84a6d2"/><rect x="481.0" y="447" width="7" height="4" fill="#84a6d2"/><rect x="493.0" y="448" width="1" height="13" fill="#84a6d2"/><rect x="490.0" y="451" width="7" height="3" fill="#84a6d2"/><rect x="502.0" y="439" width="1" height="21" fill="#84a6d2"/><rect x="499.0" y="449" width="7" height="9" fill="#84a6d2"/><rect x="510.0" y="455" width="1" height="10" fill="#84a6d2"/><rect x="507.0" y="459" width="7" height="4" fill="#84a6d2"/><rect x="519.0" y="462" width="1" height="15" fill="#84a6d2"/><rect x="516.0" y="462" width="7" height="11" fill="#84a6d2"/><rect x="528.0" y="471" width="1" height="16" fill="#84a6d2"/><rect x="525.0" y="474" width="7" height="12" fill="#84a6d2"/><rect x="537.0" y="478" width="1" height="16" fill="#84a6d2"/><rect x="534.0" y="484" width="7" height="4" fill="#84a6d2"/><rect x="546.0" y="480" width="1" height="14" fill="#84a6d2"/><rect x="543.0" y="486" width="7" height="7" fill="#84a6d2"/><rect x="554.0" y="490" width="1" height="13" fill="#84a6d2"/><rect x="551.0" y="493" width="7" height="8" fill="#84a6d2"/><rect x="563.0" y="500" width="1" height="8" fill="#84a6d2"/><rect x="560.0" y="500" width="7" height="5" fill="#84a6d2"/><rect x="572.0" y="499" width="1" height="6" fill="#84a6d2"/><rect x="569.5" y="505.5" width="6" height="2" fill="none" stroke="#84a6d2" stroke-width="1"/><rect x="581.0" y="495" width="1" height="1" fill="#e6e6e6"/><rect x="578.5" y="496.5" width="6" height="9" fill="none" stroke="#e6e6e6" stroke-width="1"/><rect x="589.0" y="494" width="1" height="1" fill="#e6e6e6"/><rect x="586.5" y="480.5" width="6" height="13" fill="none" stroke="#e6e6e6" stroke-width="1"/><rect x="598.0" y="478" width="1" height="5" fill="#e6e6e6"/><rect x="595.5" y="471.5" width="6" height="6" fill="none" stroke="#e6e6e6" stroke-width="1"/><rect x="607.0" y="466" width="1" height="5" fill="#e6e6e6"/><rect x="604.0" y="467" width="7" height="2" fill="#e6e6e6"/><rect x="616.0" y="466" width="1" height="10" fill="#84a6d2"/><rect x="613.0" y="470" width="7" height="1" fill="#84a6d2"/><rect x="624.0" y="468" width="1" height="7" fill="#84a6d2"/><rect x="621.0" y="470" width="7" height="3" fill="#84a6d2"/><rect x="633.0" y="466" width="1" height="2" fill="#e6e6e6"/><rect x="633.0" y="474" width="1" height="2" fill="#e6e6e6"/><rect x="630.5" y="468.5" width="6" height="5" fill="none" stroke="#e6e6e6" stroke-width="1"/><rect x="642.0" y="459" width="1" height="9" fill="#e6e6e6"/><rect x="639.0" y="466" width="7" height="2" fill="#e6e6e6"/><rect x="651.0" y="465" width="1" height="5" fill="#84a6d2"/><rect x="648.0" y="465" width="7" height="3" fill="#84a6d2"/><rect x="660.0" y="461" width="1" height="15" fill="#84a6d2"/><rect x="657.0" y="468" width="7" height="6" fill="#84a6d2"/><rect x="668.0" y="471" width="1" height="2" fill="#e6e6e6"/><rect x="665.5" y="473.5" width="6" height="2" fill="none" stroke="#e6e6e6" stroke-width="1"/><rect x="677.0" y="468" width="1" height="11" fill="#84a6d2"/><rect x="674.0" y="471" width="7" height="6" fill="#84a6d2"/><rect x="686.0" y="476" width="1" height="6" fill="#84a6d2"/><rect x="683.0" y="476" width="7" height="4" fill="#84a6d2"/><rect x="695.0" y="477" width="1" height="2" fill="#e6e6e6"/><rect x="692.5" y="479.5" width="6" height="2" fill="none" stroke="#e6e6e6" stroke-width="1"/><rect x="703.0" y="474" width="1" height="1" fill="#e6e6e6"/><rect x="703.0" y="479" width="1" height="3" fill="#e6e6e6"/><rect x="700.5" y="475.5" width="6" height="3" fill="none" stroke="#e6e6e6" stroke-width="1"/><rect x="712.0" y="468" width="1" height="4" fill="#e6e6e6"/><rect x="709.5" y="472.5" width="6" height="2" fill="none" stroke="#e6e6e6" stroke-width="1"/><rect x="721.0" y="469" width="1" height="9" fill="#84a6d2"/><rect x="718.0" y="472" width="7" height="3" fill="#84a6d2"/><rect x="730.0" y="475" width="1" height="14" fill="#84a6d2"/><rect x="727.0" y="475" width="7" height="5" fill="#84a6d2"/><rect x="738.0" y="481" width="1" height="18" fill="#84a6d2"/><rect x="735.0" y="484" width="7" height="11" fill="#84a6d2"/><rect x="747.0" y="491" width="1" height="16" fill="#84a6d2"/><rect x="744.0" y="491" width="7" height="7" fill="#84a6d2"/><rect x="756.0" y="497" width="1" height="8" fill="#84a6d2"/><rect x="753.0" y="497" width="7" height="7" fill="#84a6d2"/><rect x="765.0" y="503" width="1" height="11" fill="#84a6d2"/><rect x="762.0" y="503" width="7" height="7" fill="#84a6d2"/><rect x="773.0" y="506" width="1" height="10" fill="#84a6d2"/><rect x="770.0" y="512" width="7" height="1" fill="#84a6d2"/><rect x="782.0" y="506" width="1" height="9" fill="#84a6d2"/><rect x="779.0" y="510" width="7" height="3" fill="#84a6d2"/><rect x="791.0" y="514" width="1" height="6" fill="#e6e6e6"/><rect x="788.5" y="508.5" width="6" height="5" fill="none" stroke="#e6e6e6" stroke-width="1"/><rect x="800.0" y="506" width="1" height="7" fill="#84a6d2"/><rect x="797.0" y="508" width="7" height="3" fill="#84a6d2"/><rect x="809.0" y="504" width="1" height="2" fill="#e6e6e6"/><rect x="806.5" y="506.5" width="6" height="2" fill="none" stroke="#e6e6e6" stroke-width="1"/><rect x="817.0" y="503" width="1" height="10" fill="#84a6d2"/><rect x="814.0" y="506" width="7" height="6" fill="#84a6d2"/><rect x="826.0" y="509" width="1" height="5" fill="#84a6d2"/><rect x="823.0" y="510" width="7" height="3" fill="#84a6d2"/><rect x="835.0" y="508" width="1" height="1" fill="#e6e6e6"/><rect x="832.5" y="509.5" width="6" height="4" fill="none" stroke="#e6e6e6" stroke-width="1"/><rect x="844.0" y="507" width="1" height="12" fill="#84a6d2"/><rect x="841.0" y="507" width="7" height="11" fill="#84a6d2"/><rect x="852.0" y="515" width="1" height="6" fill="#84a6d2"/><rect x="849.0" y="518" width="7" height="3" fill="#84a6d2"/><rect x="861.0" y="520" width="1" height="4" fill="#e6e6e6"/><rect x="858.0" y="520" width="7" height="2" fill="#e6e6e6"/><rect x="870.0" y="514" width="1" height="4" fill="#e6e6e6"/><rect x="867.5" y="518.5" width="6" height="4" fill="none" stroke="#e6e6e6" stroke-width="1"/><rect x="879.0" y="514" width="1" height="1" fill="#e6e6e6"/><rect x="876.5" y="515.5" width="6" height="4" fill="none" stroke="#e6e6e6" stroke-width="1"/><rect x="887.0" y="513" width="1" height="7" fill="#84a6d2"/><rect x="884.0" y="515" width="7" height="3" fill="#84a6d2"/><rect x="893.5" y="509.5" width="6" height="8" fill="none" stroke="#e6e6e6" stroke-width="1"/><rect x="905.0" y="506" width="1" height="9" fill="#84a6d2"/><rect x="902.0" y="509" width="7" height="6" fill="#84a6d2"/><rect x="914.0" y="513" width="1" height="9" fill="#84a6d2"/><rect x="911.0" y="513" width="7" height="9" fill="#84a6d2"/><rect x="923.0" y="520" width="1" height="7" fill="#84a6d2"/><rect x="920.0" y="521" width="7" height="6" fill="#84a6d2"/><rect x="931.0" y="526" width="1" height="4" fill="#e6e6e6"/><rect x="928.5" y="512.5" width="6" height="13" fill="none" stroke="#e6e6e6" stroke-width="1"/><rect x="940.0" y="514" width="1" height="1" fill="#e6e6e6"/><rect x="937.5" y="508.5" width="6" height="5" fill="none" stroke="#e6e6e6" stroke-width="1"/><rect x="949.0" y="503" width="1" height="3" fill="#e6e6e6"/><rect x="946.5" y="506.5" width="6" height="5" fill="none" stroke="#e6e6e6" stroke-width="1"/><rect x="958.0" y="505" width="1" height="9" fill="#e6e6e6"/><rect x="955.0" y="505" width="7" height="1" fill="#e6e6e6"/><rect x="966.0" y="510" width="1" height="1" fill="#e6e6e6"/><rect x="963.5" y="492.5" width="6" height="17" fill="none" stroke="#e6e6e6" stroke-width="1"/><rect x="975.0" y="485" width="1" height="1" fill="#e6e6e6"/><rect x="975.0" y="494" width="1" height="2" fill="#e6e6e6"/><rect x="972.5" y="486.5" width="6" height="7" fill="none" stroke="#e6e6e6" stroke-width="1"/><rect x="984.0" y="484" width="1" height="6" fill="#84a6d2"/><rect x="981.0" y="486" width="7" height="4" fill="#84a6d2"/><rect x="993.0" y="486" width="1" height="8" fill="#84a6d2"/><rect x="990.0" y="489" width="7" height="3" fill="#84a6d2"/><rect x="1001.0" y="489" width="1" height="9" fill="#e6e6e6"/><rect x="998.0" y="489" width="7" height="2" fill="#e6e6e6"/><rect x="1010.0" y="483" width="1" height="2" fill="#e6e6e6"/><rect x="1007.5" y="485.5" width="6" height="5" fill="none" stroke="#e6e6e6" stroke-width="1"/><rect x="1019.0" y="483" width="1" height="10" fill="#84a6d2"/><rect x="1016.0" y="484" width="7" height="9" fill="#84a6d2"/><rect x="1028.0" y="489" width="1" height="1" fill="#e6e6e6"/><rect x="1025.5" y="490.5" width="6" height="2" fill="none" stroke="#e6e6e6" stroke-width="1"/><rect x="1036.0" y="489" width="1" height="2" fill="#e6e6e6"/><rect x="1033.0" y="489" width="7" height="2" fill="#e6e6e6"/><rect x="1045.0" y="490" width="1" height="10" fill="#84a6d2"/><rect x="1042.0" y="490" width="7" height="7" fill="#84a6d2"/><rect x="1054.0" y="496" width="1" height="6" fill="#84a6d2"/><rect x="1051.0" y="496" width="7" height="3" fill="#84a6d2"/><rect x="1063.0" y="497" width="1" height="7" fill="#84a6d2"/><rect x="1060.0" y="498" width="7" height="4" fill="#84a6d2"/><rect x="1072.0" y="501" width="1" height="7" fill="#84a6d2"/><rect x="1069.0" y="504" width="7" height="4" fill="#84a6d2"/><rect x="1080.0" y="502" width="1" height="9" fill="#84a6d2"/><rect x="1077.0" y="506" width="7" height="3" fill="#84a6d2"/><rect x="1089.0" y="505" width="1" height="8" fill="#84a6d2"/><rect x="1086.0" y="509" width="7" height="4" fill="#84a6d2"/><rect x="1098.0" y="508" width="1" height="7" fill="#84a6d2"/><rect x="1095.0" y="508" width="7" height="5" fill="#84a6d2"/><rect x="1107.0" y="515" width="1" height="15" fill="#84a6d2"/><rect x="1104.0" y="516" width="7" height="11" fill="#84a6d2"/><rect x="1115.0" y="520" width="1" height="12" fill="#84a6d2"/><rect x="1112.0" y="523" width="7" height="8" fill="#84a6d2"/><rect x="1124.0" y="533" width="1" height="28" fill="#84a6d2"/><rect x="1121.0" y="539" width="7" height="20" fill="#84a6d2"/><rect x="1133.0" y="564" width="1" height="26" fill="#84a6d2"/><rect x="1130.0" y="565" width="7" height="18" fill="#84a6d2"/><rect x="1142.0" y="569" width="1" height="11" fill="#e6e6e6"/><rect x="1142.0" y="586" width="1" height="2" fill="#e6e6e6"/><rect x="1139.5" y="580.5" width="6" height="5" fill="none" stroke="#e6e6e6" stroke-width="1"/><rect x="1150.0" y="570" width="1" height="6" fill="#e6e6e6"/><rect x="1150.0" y="582" width="1" height="3" fill="#e6e6e6"/><rect x="1147.5" y="576.5" width="6" height="5" fill="none" stroke="#e6e6e6" stroke-width="1"/><rect x="1159.0" y="554" width="1" height="2" fill="#e6e6e6"/><rect x="1156.5" y="556.5" width="6" height="16" fill="none" stroke="#e6e6e6" stroke-width="1"/><rect x="1168.0" y="552" width="1" height="10" fill="#84a6d2"/><rect x="1165.0" y="552" width="7" height="7" fill="#84a6d2"/><rect x="1177.0" y="558" width="1" height="10" fill="#84a6d2"/><rect x="1174.0" y="558" width="7" height="8" fill="#84a6d2"/><rect x="1186.0" y="556" width="1" height="4" fill="#e6e6e6"/><rect x="1183.5" y="560.5" width="6" height="2" fill="none" stroke="#e6e6e6" stroke-width="1"/><rect x="1194.0" y="560" width="1" height="3" fill="#84a6d2"/><rect x="1191.0" y="561" width="7" height="2" fill="#84a6d2"/><rect x="1203.0" y="559" width="1" height="20" fill="#84a6d2"/><rect x="1200.0" y="559" width="7" height="20" fill="#84a6d2"/><rect x="1212.0" y="567" width="1" height="6" fill="#e6e6e6"/><rect x="1209.0" y="569" width="7" height="1" fill="#e6e6e6"/></g><path d="M88.30,441.6 L90.50,439.8 L92.70,441.6 L90.50,443.4 Z" fill="#006400"/><path d="M88.30,432.4 L90.50,430.6 L92.70,432.4 L90.50,434.2 Z" fill="#ff0000"/><path d="M96.30,434.4 L98.50,432.6 L100.70,434.4 L98.50,436.2 Z" fill="#006400"/><path d="M96.30,424.5 L98.50,422.7 L100.70,424.5 L98.50,426.3 Z" fill="#ff0000"/><path d="M105.30,434.5 L107.50,432.7 L109.70,434.5 L107.50,436.3 Z" fill="#006400"/><path d="M105.30,424.5 L107.50,422.7 L109.70,424.5 L107.50,426.3 Z" fill="#ff0000"/><path d="M114.30,436.5 L116.50,434.7 L118.70,436.5 L116.50,438.3 Z" fill="#006400"/><path d="M114.30,429.5 L116.50,427.7 L118.70,429.5 L116.50,431.3 Z" fill="#ff0000"/><path d="M123.30,431.6 L125.50,429.8 L127.70,431.6 L125.50,433.4 Z" fill="#006400"/><path d="M123.30,423.4 L125.50,421.6 L127.70,423.4 L125.50,425.2 Z" fill="#ff0000"/><path d="M131.30,419.6 L133.50,417.8 L135.70,419.6 L133.50,421.4 Z" fill="#006400"/><path d="M131.30,412.5 L133.50,410.7 L135.70,412.5 L133.50,414.3 Z" fill="#ff0000"/><path d="M140.30,423.4 L142.50,421.6 L144.70,423.4 L142.50,425.2 Z" fill="#006400"/><path d="M140.30,416.4 L142.50,414.6 L144.70,416.4 L142.50,418.2 Z" fill="#ff0000"/><path d="M149.30,423.4 L151.50,421.6 L153.70,423.4 L151.50,425.2 Z" fill="#006400"/><path d="M149.30,417.2 L151.50,415.4 L153.70,417.2 L151.50,419.0 Z" fill="#ff0000"/><path d="M158.30,432.4 L160.50,430.6 L162.70,432.4 L160.50,434.2 Z" fill="#006400"/><path d="M158.30,425.6 L160.50,423.8 L162.70,425.6 L160.50,427.4 Z" fill="#ff0000"/><path d="M167.30,443.3 L169.50,441.5 L171.70,443.3 L169.50,445.1 Z" fill="#006400"/><path d="M167.30,435.6 L169.50,433.8 L171.70,435.6 L169.50,437.4 Z" fill="#ff0000"/><path d="M175.30,431.6 L177.50,429.8 L179.70,431.6 L177.50,433.4 Z" fill="#006400"/><path d="M175.30,423.3 L177.50,421.5 L179.70,423.3 L177.50,425.1 Z" fill="#ff0000"/><path d="M184.30,414.3 L186.50,412.5 L188.70,414.3 L186.50,416.1 Z" fill="#006400"/><path d="M184.30,404.6 L186.50,402.8 L188.70,404.6 L186.50,406.4 Z" fill="#ff0000"/><path d="M193.30,429.5 L195.50,427.7 L197.70,429.5 L195.50,431.3 Z" fill="#006400"/><path d="M193.30,417.6 L195.50,415.8 L197.70,417.6 L195.50,419.4 Z" fill="#ff0000"/><path d="M202.30,413.5 L204.50,411.7 L206.70,413.5 L204.50,415.3 Z" fill="#006400"/><path d="M202.30,401.4 L204.50,399.6 L206.70,401.4 L204.50,403.2 Z" fill="#ff0000"/><path d="M210.30,413.5 L212.50,411.7 L214.70,413.5 L212.50,415.3 Z" fill="#006400"/><path d="M210.30,401.4 L212.50,399.6 L214.70,401.4 L212.50,403.2 Z" fill="#ff0000"/><path d="M219.30,421.5 L221.50,419.7 L223.70,421.5 L221.50,423.3 Z" fill="#006400"/><path d="M219.30,409.4 L221.50,407.6 L223.70,409.4 L221.50,411.2 Z" fill="#ff0000"/><path d="M228.30,430.4 L230.50,428.6 L232.70,430.4 L230.50,432.2 Z" fill="#006400"/><path d="M228.30,420.5 L230.50,418.7 L232.70,420.5 L230.50,422.3 Z" fill="#ff0000"/><path d="M237.30,420.2 L239.50,418.4 L241.70,420.2 L239.50,422.0 Z" fill="#006400"/><path d="M237.30,409.3 L239.50,407.5 L241.70,409.3 L239.50,411.1 Z" fill="#ff0000"/><path d="M245.30,423.3 L247.50,421.5 L249.70,423.3 L247.50,425.1 Z" fill="#006400"/><path d="M245.30,412.3 L247.50,410.5 L249.70,412.3 L247.50,414.1 Z" fill="#ff0000"/><path d="M254.30,429.4 L256.50,427.6 L258.70,429.4 L256.50,431.2 Z" fill="#006400"/><path d="M254.30,419.4 L256.50,417.6 L258.70,419.4 L256.50,421.2 Z" fill="#ff0000"/><path d="M263.30,426.3 L265.50,424.5 L267.70,426.3 L265.50,428.1 Z" fill="#006400"/><path d="M263.30,417.4 L265.50,415.6 L267.70,417.4 L265.50,419.2 Z" fill="#ff0000"/><path d="M272.30,425.3 L274.50,423.5 L276.70,425.3 L274.50,427.1 Z" fill="#006400"/><path d="M272.30,419.4 L274.50,417.6 L276.70,419.4 L274.50,421.2 Z" fill="#ff0000"/><path d="M281.30,412.3 L283.50,410.5 L285.70,412.3 L283.50,414.1 Z" fill="#006400"/><path d="M281.30,406.4 L283.50,404.6 L285.70,406.4 L283.50,408.2 Z" fill="#ff0000"/><path d="M289.30,393.1 L291.50,391.3 L293.70,393.1 L291.50,394.9 Z" fill="#006400"/><path d="M289.30,381.3 L291.50,379.5 L293.70,381.3 L291.50,383.1 Z" fill="#ff0000"/><path d="M298.30,381.5 L300.50,379.7 L302.70,381.5 L300.50,383.3 Z" fill="#006400"/><path d="M298.30,366.2 L300.50,364.4 L302.70,366.2 L300.50,368.0 Z" fill="#ff0000"/><path d="M307.30,379.3 L309.50,377.5 L311.70,379.3 L309.50,381.1 Z" fill="#006400"/><path d="M307.30,360.3 L309.50,358.5 L311.70,360.3 L309.50,362.1 Z" fill="#ff0000"/><path d="M316.30,349.3 L318.50,347.5 L320.70,349.3 L318.50,351.1 Z" fill="#006400"/><path d="M316.30,328.1 L318.50,326.3 L320.70,328.1 L318.50,329.9 Z" fill="#ff0000"/><path d="M324.30,357.3 L326.50,355.5 L328.70,357.3 L326.50,359.1 Z" fill="#006400"/><path d="M324.30,339.5 L326.50,337.7 L328.70,339.5 L326.50,341.3 Z" fill="#ff0000"/><path d="M333.30,374.2 L335.50,372.4 L337.70,374.2 L335.50,376.0 Z" fill="#006400"/><path d="M333.30,357.3 L335.50,355.5 L337.70,357.3 L335.50,359.1 Z" fill="#ff0000"/><path d="M342.30,364.4 L344.50,362.6 L346.70,364.4 L344.50,366.2 Z" fill="#006400"/><path d="M342.30,350.1 L344.50,348.3 L346.70,350.1 L344.50,351.9 Z" fill="#ff0000"/><path d="M351.30,361.1 L353.50,359.3 L355.70,361.1 L353.50,362.9 Z" fill="#006400"/><path d="M351.30,348.3 L353.50,346.5 L355.70,348.3 L353.50,350.1 Z" fill="#ff0000"/><path d="M359.30,364.4 L361.50,362.6 L363.70,364.4 L361.50,366.2 Z" fill="#006400"/><path d="M359.30,352.2 L361.50,350.4 L363.70,352.2 L361.50,354.0 Z" fill="#ff0000"/><path d="M368.30,388.2 L370.50,386.4 L372.70,388.2 L370.50,390.0 Z" fill="#006400"/><path d="M368.30,377.6 L370.50,375.8 L372.70,377.6 L370.50,379.4 Z" fill="#ff0000"/><path d="M377.30,402.5 L379.50,400.7 L381.70,402.5 L379.50,404.3 Z" fill="#006400"/><path d="M377.30,390.3 L379.50,388.5 L381.70,390.3 L379.50,392.1 Z" fill="#ff0000"/><path d="M386.30,404.3 L388.50,402.5 L390.70,404.3 L388.50,406.1 Z" fill="#006400"/><path d="M386.30,393.4 L388.50,391.6 L390.70,393.4 L388.50,395.2 Z" fill="#ff0000"/><path d="M394.30,411.2 L396.50,409.4 L398.70,411.2 L396.50,413.0 Z" fill="#006400"/><path d="M394.30,400.6 L396.50,398.8 L398.70,400.6 L396.50,402.4 Z" fill="#ff0000"/><path d="M403.30,436.3 L405.50,434.5 L407.70,436.3 L405.50,438.1 Z" fill="#006400"/><path d="M403.30,423.6 L405.50,421.8 L407.70,423.6 L405.50,425.4 Z" fill="#ff0000"/><path d="M412.30,440.4 L414.50,438.6 L416.70,440.4 L414.50,442.2 Z" fill="#006400"/><path d="M412.30,428.5 L414.50,426.7 L416.70,428.5 L414.50,430.3 Z" fill="#ff0000"/><path d="M421.30,438.3 L423.50,436.5 L425.70,438.3 L423.50,440.1 Z" fill="#006400"/><path d="M421.30,426.3 L423.50,424.5 L425.70,426.3 L423.50,428.1 Z" fill="#ff0000"/><path d="M430.30,447.3 L432.50,445.5 L434.70,447.3 L432.50,449.1 Z" fill="#006400"/><path d="M430.30,434.4 L432.50,432.6 L434.70,434.4 L432.50,436.2 Z" fill="#ff0000"/><path d="M438.30,440.4 L440.50,438.6 L442.70,440.4 L440.50,442.2 Z" fill="#006400"/><path d="M438.30,429.5 L440.50,427.7 L442.70,429.5 L440.50,431.3 Z" fill="#ff0000"/><path d="M447.30,448.3 L449.50,446.5 L451.70,448.3 L449.50,450.1 Z" fill="#006400"/><path d="M447.30,437.5 L449.50,435.7 L451.70,437.5 L449.50,439.3 Z" fill="#ff0000"/><path d="M456.30,447.3 L458.50,445.5 L460.70,447.3 L458.50,449.1 Z" fill="#006400"/><path d="M456.30,436.3 L458.50,434.5 L460.70,436.3 L458.50,438.1 Z" fill="#ff0000"/><path d="M465.30,445.4 L467.50,443.6 L469.70,445.4 L467.50,447.2 Z" fill="#006400"/><path d="M465.30,436.3 L467.50,434.5 L469.70,436.3 L467.50,438.1 Z" fill="#ff0000"/><path d="M473.30,453.2 L475.50,451.4 L477.70,453.2 L475.50,455.0 Z" fill="#006400"/><path d="M473.30,442.6 L475.50,440.8 L477.70,442.6 L475.50,444.4 Z" fill="#ff0000"/><path d="M482.30,457.3 L484.50,455.5 L486.70,457.3 L484.50,459.1 Z" fill="#006400"/><path d="M482.30,446.3 L484.50,444.5 L486.70,446.3 L484.50,448.1 Z" fill="#ff0000"/><path d="M491.30,462.4 L493.50,460.6 L495.70,462.4 L493.50,464.2 Z" fill="#006400"/><path d="M491.30,450.4 L493.50,448.6 L495.70,450.4 L493.50,452.2 Z" fill="#ff0000"/><path d="M500.30,466.3 L502.50,464.5 L504.70,466.3 L502.50,468.1 Z" fill="#006400"/><path d="M500.30,452.4 L502.50,450.6 L504.70,452.4 L502.50,454.2 Z" fill="#ff0000"/><path d="M508.30,470.5 L510.50,468.7 L512.70,470.5 L510.50,472.3 Z" fill="#006400"/><path d="M508.30,460.3 L510.50,458.5 L512.70,460.3 L510.50,462.1 Z" fill="#ff0000"/><path d="M517.30,482.4 L519.50,480.6 L521.70,482.4 L519.50,484.2 Z" fill="#006400"/><path d="M517.30,470.5 L519.50,468.7 L521.70,470.5 L519.50,472.3 Z" fill="#ff0000"/><path d="M526.30,496.2 L528.50,494.4 L530.70,496.2 L528.50,498.0 Z" fill="#006400"/><path d="M526.30,484.4 L528.50,482.6 L530.70,484.4 L528.50,486.2 Z" fill="#ff0000"/><path d="M535.30,495.4 L537.50,493.6 L539.70,495.4 L537.50,497.2 Z" fill="#006400"/><path d="M535.30,484.4 L537.50,482.6 L539.70,484.4 L537.50,486.2 Z" fill="#ff0000"/><path d="M544.30,500.5 L546.50,498.7 L548.70,500.5 L546.50,502.3 Z" fill="#006400"/><path d="M544.30,488.3 L546.50,486.5 L548.70,488.3 L546.50,490.1 Z" fill="#ff0000"/><path d="M552.30,509.5 L554.50,507.7 L556.70,509.5 L554.50,511.3 Z" fill="#006400"/><path d="M552.30,498.4 L554.50,496.6 L556.70,498.4 L554.50,500.2 Z" fill="#ff0000"/><path d="M561.30,512.4 L563.50,510.6 L565.70,512.4 L563.50,514.2 Z" fill="#006400"/><path d="M561.30,502.5 L563.50,500.7 L565.70,502.5 L563.50,504.3 Z" fill="#ff0000"/><path d="M570.30,509.7 L572.50,507.9 L574.70,509.7 L572.50,511.5 Z" fill="#006400"/><path d="M570.30,501.3 L572.50,499.5 L574.70,501.3 L572.50,503.1 Z" fill="#ff0000"/><path d="M579.30,497.4 L581.50,495.6 L583.70,497.4 L581.50,499.2 Z" fill="#006400"/><path d="M579.30,489.5 L581.50,487.7 L583.70,489.5 L581.50,491.3 Z" fill="#ff0000"/><path d="M587.30,478.3 L589.50,476.5 L591.70,478.3 L589.50,480.1 Z" fill="#006400"/><path d="M587.30,470.5 L589.50,468.7 L591.70,470.5 L589.50,472.3 Z" fill="#ff0000"/><path d="M596.30,471.4 L598.50,469.6 L600.70,471.4 L598.50,473.2 Z" fill="#006400"/><path d="M596.30,461.4 L598.50,459.6 L600.70,461.4 L598.50,463.2 Z" fill="#ff0000"/><path d="M605.30,472.5 L607.50,470.7 L609.70,472.5 L607.50,474.3 Z" fill="#006400"/><path d="M605.30,463.5 L607.50,461.7 L609.70,463.5 L607.50,465.3 Z" fill="#ff0000"/><path d="M614.30,477.5 L616.50,475.7 L618.70,477.5 L616.50,479.3 Z" fill="#006400"/><path d="M614.30,468.4 L616.50,466.6 L618.70,468.4 L616.50,470.2 Z" fill="#ff0000"/><path d="M622.30,477.5 L624.50,475.7 L626.70,477.5 L624.50,479.3 Z" fill="#006400"/><path d="M622.30,470.7 L624.50,468.9 L626.70,470.7 L624.50,472.5 Z" fill="#ff0000"/><path d="M631.30,471.4 L633.50,469.6 L635.70,471.4 L633.50,473.2 Z" fill="#006400"/><path d="M631.30,464.4 L633.50,462.6 L635.70,464.4 L633.50,466.2 Z" fill="#ff0000"/><path d="M640.30,468.5 L642.50,466.7 L644.70,468.5 L642.50,470.3 Z" fill="#006400"/><path d="M640.30,461.4 L642.50,459.6 L644.70,461.4 L642.50,463.2 Z" fill="#ff0000"/><path d="M649.30,471.4 L651.50,469.6 L653.70,471.4 L651.50,473.2 Z" fill="#006400"/><path d="M649.30,465.2 L651.50,463.4 L653.70,465.2 L651.50,467.0 Z" fill="#ff0000"/><path d="M658.30,480.7 L660.50,478.9 L662.70,480.7 L660.50,482.5 Z" fill="#006400"/><path d="M658.30,472.5 L660.50,470.7 L662.70,472.5 L660.50,474.3 Z" fill="#ff0000"/><path d="M666.30,476.7 L668.50,474.9 L670.70,476.7 L668.50,478.5 Z" fill="#006400"/><path d="M666.30,469.3 L668.50,467.5 L670.70,469.3 L668.50,471.1 Z" fill="#ff0000"/><path d="M675.30,482.4 L677.50,480.6 L679.70,482.4 L677.50,484.2 Z" fill="#006400"/><path d="M675.30,474.6 L677.50,472.8 L679.70,474.6 L677.50,476.4 Z" fill="#ff0000"/><path d="M684.30,484.3 L686.50,482.5 L688.70,484.3 L686.50,486.1 Z" fill="#006400"/><path d="M684.30,477.5 L686.50,475.7 L688.70,477.5 L686.50,479.3 Z" fill="#ff0000"/><path d="M693.30,482.7 L695.50,480.9 L697.70,482.7 L695.50,484.5 Z" fill="#006400"/><path d="M693.30,477.5 L695.50,475.7 L697.70,477.5 L695.50,479.3 Z" fill="#ff0000"/><path d="M701.30,476.4 L703.50,474.6 L705.70,476.4 L703.50,478.2 Z" fill="#006400"/><path d="M701.30,471.4 L703.50,469.6 L705.70,471.4 L703.50,473.2 Z" fill="#ff0000"/><path d="M710.30,472.3 L712.50,470.5 L714.70,472.3 L712.50,474.1 Z" fill="#006400"/><path d="M710.30,467.4 L712.50,465.6 L714.70,467.4 L712.50,469.2 Z" fill="#ff0000"/><path d="M719.30,478.4 L721.50,476.6 L723.70,478.4 L721.50,480.2 Z" fill="#006400"/><path d="M719.30,472.3 L721.50,470.5 L723.70,472.3 L721.50,474.1 Z" fill="#ff0000"/><path d="M728.30,486.4 L730.50,484.6 L732.70,486.4 L730.50,488.2 Z" fill="#006400"/><path d="M728.30,479.3 L730.50,477.5 L732.70,479.3 L730.50,481.1 Z" fill="#ff0000"/><path d="M736.30,504.3 L738.50,502.5 L740.70,504.3 L738.50,506.1 Z" fill="#006400"/><path d="M736.30,495.4 L738.50,493.6 L740.70,495.4 L738.50,497.2 Z" fill="#ff0000"/><path d="M745.30,507.4 L747.50,505.6 L749.70,507.4 L747.50,509.2 Z" fill="#006400"/><path d="M745.30,496.5 L747.50,494.7 L749.70,496.5 L747.50,498.3 Z" fill="#ff0000"/><path d="M754.30,512.4 L756.50,510.6 L758.70,512.4 L756.50,514.2 Z" fill="#006400"/><path d="M754.30,501.3 L756.50,499.5 L758.70,501.3 L756.50,503.1 Z" fill="#ff0000"/><path d="M763.30,517.4 L765.50,515.6 L767.70,517.4 L765.50,519.2 Z" fill="#006400"/><path d="M763.30,507.4 L765.50,505.6 L767.70,507.4 L765.50,509.2 Z" fill="#ff0000"/><path d="M771.30,519.5 L773.50,517.7 L775.70,519.5 L773.50,521.3 Z" fill="#006400"/><path d="M771.30,511.5 L773.50,509.7 L775.70,511.5 L773.50,513.3 Z" fill="#ff0000"/><path d="M780.30,517.4 L782.50,515.6 L784.70,517.4 L782.50,519.2 Z" fill="#006400"/><path d="M780.30,510.4 L782.50,508.6 L784.70,510.4 L782.50,512.2 Z" fill="#ff0000"/><path d="M789.30,511.3 L791.50,509.5 L793.70,511.3 L791.50,513.1 Z" fill="#006400"/><path d="M789.30,504.3 L791.50,502.5 L793.70,504.3 L791.50,506.1 Z" fill="#ff0000"/><path d="M798.30,514.5 L800.50,512.7 L802.70,514.5 L800.50,516.3 Z" fill="#006400"/><path d="M798.30,507.4 L800.50,505.6 L802.70,507.4 L800.50,509.2 Z" fill="#ff0000"/><path d="M807.30,508.4 L809.50,506.6 L811.70,508.4 L809.50,510.2 Z" fill="#006400"/><path d="M807.30,502.4 L809.50,500.6 L811.70,502.4 L809.50,504.2 Z" fill="#ff0000"/><path d="M815.30,516.5 L817.50,514.7 L819.70,516.5 L817.50,518.3 Z" fill="#006400"/><path d="M815.30,510.4 L817.50,508.6 L819.70,510.4 L817.50,512.2 Z" fill="#ff0000"/><path d="M824.30,516.5 L826.50,514.7 L828.70,516.5 L826.50,518.3 Z" fill="#006400"/><path d="M824.30,511.3 L826.50,509.5 L828.70,511.3 L826.50,513.1 Z" fill="#ff0000"/><path d="M833.30,511.3 L835.50,509.5 L837.70,511.3 L835.50,513.1 Z" fill="#006400"/><path d="M833.30,506.5 L835.50,504.7 L837.70,506.5 L835.50,508.3 Z" fill="#ff0000"/><path d="M842.30,523.4 L844.50,521.6 L846.70,523.4 L844.50,525.2 Z" fill="#006400"/><path d="M842.30,516.5 L844.50,514.7 L846.70,516.5 L844.50,518.3 Z" fill="#ff0000"/><path d="M850.30,526.2 L852.50,524.4 L854.70,526.2 L852.50,528.0 Z" fill="#006400"/><path d="M850.30,520.1 L852.50,518.3 L854.70,520.1 L852.50,521.9 Z" fill="#ff0000"/><path d="M859.30,525.4 L861.50,523.6 L863.70,525.4 L861.50,527.2 Z" fill="#006400"/><path d="M859.30,518.4 L861.50,516.6 L863.70,518.4 L861.50,520.2 Z" fill="#ff0000"/><path d="M868.30,519.3 L870.50,517.5 L872.70,519.3 L870.50,521.1 Z" fill="#006400"/><path d="M868.30,512.3 L870.50,510.5 L872.70,512.3 L870.50,514.1 Z" fill="#ff0000"/><path d="M877.30,517.4 L879.50,515.6 L881.70,517.4 L879.50,519.2 Z" fill="#006400"/><path d="M877.30,512.3 L879.50,510.5 L881.70,512.3 L879.50,514.1 Z" fill="#ff0000"/><path d="M885.30,521.3 L887.50,519.5 L889.70,521.3 L887.50,523.1 Z" fill="#006400"/><path d="M885.30,516.3 L887.50,514.5 L889.70,516.3 L887.50,518.1 Z" fill="#ff0000"/><path d="M894.30,510.4 L896.50,508.6 L898.70,510.4 L896.50,512.2 Z" fill="#006400"/><path d="M894.30,504.5 L896.50,502.7 L898.70,504.5 L896.50,506.3 Z" fill="#ff0000"/><path d="M903.30,518.4 L905.50,516.6 L907.70,518.4 L905.50,520.2 Z" fill="#006400"/><path d="M903.30,512.3 L905.50,510.5 L907.70,512.3 L905.50,514.1 Z" fill="#ff0000"/><path d="M912.30,528.3 L914.50,526.5 L916.70,528.3 L914.50,530.1 Z" fill="#006400"/><path d="M912.30,522.5 L914.50,520.7 L916.70,522.5 L914.50,524.3 Z" fill="#ff0000"/><path d="M921.30,533.4 L923.50,531.6 L925.70,533.4 L923.50,535.2 Z" fill="#006400"/><path d="M921.30,527.5 L923.50,525.7 L925.70,527.5 L923.50,529.3 Z" fill="#ff0000"/><path d="M929.30,512.3 L931.50,510.5 L933.70,512.3 L931.50,514.1 Z" fill="#006400"/><path d="M929.30,504.5 L931.50,502.7 L933.70,504.5 L931.50,506.3 Z" fill="#ff0000"/><path d="M938.30,509.2 L940.50,507.4 L942.70,509.2 L940.50,511.0 Z" fill="#006400"/><path d="M938.30,500.4 L940.50,498.6 L942.70,500.4 L940.50,502.2 Z" fill="#ff0000"/><path d="M947.30,509.0 L949.50,507.2 L951.70,509.0 L949.50,510.8 Z" fill="#006400"/><path d="M947.30,501.4 L949.50,499.6 L951.70,501.4 L949.50,503.2 Z" fill="#ff0000"/><path d="M956.30,511.3 L958.50,509.5 L960.70,511.3 L958.50,513.1 Z" fill="#006400"/><path d="M956.30,503.1 L958.50,501.3 L960.70,503.1 L958.50,504.9 Z" fill="#ff0000"/><path d="M964.30,493.2 L966.50,491.4 L968.70,493.2 L966.50,495.0 Z" fill="#006400"/><path d="M964.30,485.6 L966.50,483.8 L968.70,485.6 L966.50,487.4 Z" fill="#ff0000"/><path d="M973.30,487.3 L975.50,485.5 L977.70,487.3 L975.50,489.1 Z" fill="#006400"/><path d="M973.30,478.5 L975.50,476.7 L977.70,478.5 L975.50,480.3 Z" fill="#ff0000"/><path d="M982.30,494.4 L984.50,492.6 L986.70,494.4 L984.50,496.2 Z" fill="#006400"/><path d="M982.30,486.4 L984.50,484.6 L986.70,486.4 L984.50,488.2 Z" fill="#ff0000"/><path d="M991.30,498.4 L993.50,496.6 L995.70,498.4 L993.50,500.2 Z" fill="#006400"/><path d="M991.30,489.4 L993.50,487.6 L995.70,489.4 L993.50,491.2 Z" fill="#ff0000"/><path d="M999.30,493.4 L1001.50,491.6 L1003.70,493.4 L1001.50,495.2 Z" fill="#006400"/><path d="M999.30,487.6 L1001.50,485.8 L1003.70,487.6 L1001.50,489.4 Z" fill="#ff0000"/><path d="M1008.30,485.2 L1010.50,483.4 L1012.70,485.2 L1010.50,487.0 Z" fill="#006400"/><path d="M1008.30,480.6 L1010.50,478.8 L1012.70,480.6 L1010.50,482.4 Z" fill="#ff0000"/><path d="M1017.30,498.4 L1019.50,496.6 L1021.70,498.4 L1019.50,500.2 Z" fill="#006400"/><path d="M1017.30,491.3 L1019.50,489.5 L1021.70,491.3 L1019.50,493.1 Z" fill="#ff0000"/><path d="M1026.30,493.2 L1028.50,491.4 L1030.70,493.2 L1028.50,495.0 Z" fill="#006400"/><path d="M1026.30,487.6 L1028.50,485.8 L1030.70,487.6 L1028.50,489.4 Z" fill="#ff0000"/><path d="M1034.30,492.5 L1036.50,490.7 L1038.70,492.5 L1036.50,494.3 Z" fill="#006400"/><path d="M1034.30,487.6 L1036.50,485.8 L1038.70,487.6 L1036.50,489.4 Z" fill="#ff0000"/><path d="M1043.30,501.4 L1045.50,499.6 L1047.70,501.4 L1045.50,503.2 Z" fill="#006400"/><path d="M1043.30,496.4 L1045.50,494.6 L1047.70,496.4 L1045.50,498.2 Z" fill="#ff0000"/><path d="M1052.30,504.3 L1054.50,502.5 L1056.70,504.3 L1054.50,506.1 Z" fill="#006400"/><path d="M1052.30,499.3 L1054.50,497.5 L1056.70,499.3 L1054.50,501.1 Z" fill="#ff0000"/><path d="M1061.30,506.3 L1063.50,504.5 L1065.70,506.3 L1063.50,508.1 Z" fill="#006400"/><path d="M1061.30,501.4 L1063.50,499.6 L1065.70,501.4 L1063.50,503.2 Z" fill="#ff0000"/><path d="M1070.30,513.4 L1072.50,511.6 L1074.70,513.4 L1072.50,515.2 Z" fill="#006400"/><path d="M1070.30,507.5 L1072.50,505.7 L1074.70,507.5 L1072.50,509.3 Z" fill="#ff0000"/><path d="M1078.30,513.4 L1080.50,511.6 L1082.70,513.4 L1080.50,515.2 Z" fill="#006400"/><path d="M1078.30,507.5 L1080.50,505.7 L1082.70,507.5 L1080.50,509.3 Z" fill="#ff0000"/><path d="M1087.30,516.5 L1089.50,514.7 L1091.70,516.5 L1089.50,518.3 Z" fill="#006400"/><path d="M1087.30,510.4 L1089.50,508.6 L1091.70,510.4 L1089.50,512.2 Z" fill="#ff0000"/><path d="M1096.30,516.5 L1098.50,514.7 L1100.70,516.5 L1098.50,518.3 Z" fill="#006400"/><path d="M1096.30,510.4 L1098.50,508.6 L1100.70,510.4 L1098.50,512.2 Z" fill="#ff0000"/><path d="M1105.30,534.4 L1107.50,532.6 L1109.70,534.4 L1107.50,536.2 Z" fill="#006400"/><path d="M1105.30,527.4 L1107.50,525.6 L1109.70,527.4 L1107.50,529.2 Z" fill="#ff0000"/><path d="M1113.30,538.2 L1115.50,536.4 L1117.70,538.2 L1115.50,540.0 Z" fill="#006400"/><path d="M1113.30,529.4 L1115.50,527.6 L1117.70,529.4 L1115.50,531.2 Z" fill="#ff0000"/><path d="M1122.30,575.3 L1124.50,573.5 L1126.70,575.3 L1124.50,577.1 Z" fill="#006400"/><path d="M1122.30,563.5 L1124.50,561.7 L1126.70,563.5 L1124.50,565.3 Z" fill="#ff0000"/><path d="M1131.30,602.2 L1133.50,600.4 L1135.70,602.2 L1133.50,604.0 Z" fill="#006400"/><path d="M1131.30,586.3 L1133.50,584.5 L1135.70,586.3 L1133.50,588.1 Z" fill="#ff0000"/><path d="M1140.30,590.5 L1142.50,588.7 L1144.70,590.5 L1142.50,592.3 Z" fill="#006400"/><path d="M1140.30,573.4 L1142.50,571.6 L1144.70,573.4 L1142.50,575.2 Z" fill="#ff0000"/><path d="M1148.30,582.3 L1150.50,580.5 L1152.70,582.3 L1150.50,584.1 Z" fill="#006400"/><path d="M1148.30,565.4 L1150.50,563.6 L1152.70,565.4 L1150.50,567.2 Z" fill="#ff0000"/><path d="M1157.30,556.6 L1159.50,554.8 L1161.70,556.6 L1159.50,558.4 Z" fill="#006400"/><path d="M1157.30,541.3 L1159.50,539.5 L1161.70,541.3 L1159.50,543.1 Z" fill="#ff0000"/><path d="M1166.30,563.5 L1168.50,561.7 L1170.70,563.5 L1168.50,565.3 Z" fill="#006400"/><path d="M1166.30,551.3 L1168.50,549.5 L1170.70,551.3 L1168.50,553.1 Z" fill="#ff0000"/><path d="M1175.30,573.4 L1177.50,571.6 L1179.70,573.4 L1177.50,575.2 Z" fill="#006400"/><path d="M1175.30,563.5 L1177.50,561.7 L1179.70,563.5 L1177.50,565.3 Z" fill="#ff0000"/><path d="M1184.30,564.5 L1186.50,562.7 L1188.70,564.5 L1186.50,566.3 Z" fill="#006400"/><path d="M1184.30,555.3 L1186.50,553.5 L1188.70,555.3 L1186.50,557.1 Z" fill="#ff0000"/><path d="M1192.30,564.5 L1194.50,562.7 L1196.70,564.5 L1194.50,566.3 Z" fill="#006400"/><path d="M1192.30,557.4 L1194.50,555.6 L1196.70,557.4 L1194.50,559.2 Z" fill="#ff0000"/><path d="M1201.30,588.4 L1203.50,586.6 L1205.70,588.4 L1203.50,590.2 Z" fill="#006400"/><path d="M1201.30,579.6 L1203.50,577.8 L1205.70,579.6 L1203.50,581.4 Z" fill="#ff0000"/><path d="M1210.30,574.3 L1212.50,572.5 L1214.70,574.3 L1212.50,576.1 Z" fill="#006400"/><path d="M1210.30,565.4 L1212.50,563.6 L1214.70,565.4 L1212.50,567.2 Z" fill="#ff0000"/><rect x="35" y="629" width="1279" height="23.5" fill="#000"/><rect x="35" y="629" width="1329" height="2" fill="#000"/><path d="M89.4,631 L91.4,629" stroke="#00b000" stroke-width="1"/><path d="M97.4,631 L99.4,629" stroke="#00b000" stroke-width="1"/><path d="M106.4,631 L108.4,629" stroke="#00b000" stroke-width="1"/><path d="M115.4,631 L117.4,629" stroke="#00b000" stroke-width="1"/><path d="M124.4,631 L126.4,629" stroke="#00b000" stroke-width="1"/><path d="M132.4,631 L134.4,629" stroke="#00b000" stroke-width="1"/><path d="M141.4,631 L143.4,629" stroke="#00b000" stroke-width="1"/><path d="M150.4,631 L152.4,629" stroke="#00b000" stroke-width="1"/><path d="M203.4,631 L205.4,629" stroke="#00b000" stroke-width="1"/><path d="M211.4,631 L213.4,629" stroke="#00b000" stroke-width="1"/><path d="M220.4,631 L222.4,629" stroke="#00b000" stroke-width="1"/><path d="M229.4,631 L231.4,629" stroke="#00b000" stroke-width="1"/><path d="M238.4,631 L240.4,629" stroke="#00b000" stroke-width="1"/><path d="M299.4,631 L301.4,629" stroke="#00b000" stroke-width="1"/><path d="M308.4,631 L310.4,629" stroke="#00b000" stroke-width="1"/><path d="M317.4,631 L319.4,629" stroke="#00b000" stroke-width="1"/><path d="M325.4,631 L327.4,629" stroke="#00b000" stroke-width="1"/><path d="M334.4,631 L336.4,629" stroke="#00b000" stroke-width="1"/><path d="M343.4,631 L345.4,629" stroke="#00b000" stroke-width="1"/><path d="M352.4,631 L354.4,629" stroke="#00b000" stroke-width="1"/><path d="M360.4,631 L362.4,629" stroke="#00b000" stroke-width="1"/><path d="M369.4,631 L371.4,629" stroke="#00b000" stroke-width="1"/><path d="M378.4,631 L380.4,629" stroke="#00b000" stroke-width="1"/><path d="M965.4,631 L967.4,629" stroke="#00b000" stroke-width="1"/><path d="M974.4,631 L976.4,629" stroke="#00b000" stroke-width="1"/><path d="M983.4,631 L985.4,629" stroke="#00b000" stroke-width="1"/><path d="M992.4,631 L994.4,629" stroke="#00b000" stroke-width="1"/><path d="M1000.4,631 L1002.4,629" stroke="#00b000" stroke-width="1"/><path d="M1009.4,631 L1011.4,629" stroke="#00b000" stroke-width="1"/><path d="M1018.4,631 L1020.4,629" stroke="#00b000" stroke-width="1"/><path d="M1027.4,631 L1029.4,629" stroke="#00b000" stroke-width="1"/><path d="M1035.4,631 L1037.4,629" stroke="#00b000" stroke-width="1"/><path d="M402.9,629 L404.9,631" stroke="#ff0000" stroke-width="1"/><path d="M411.9,629 L413.9,631" stroke="#ff0000" stroke-width="1"/><path d="M420.9,629 L422.9,631" stroke="#ff0000" stroke-width="1"/><path d="M429.9,629 L431.9,631" stroke="#ff0000" stroke-width="1"/><path d="M437.9,629 L439.9,631" stroke="#ff0000" stroke-width="1"/><path d="M446.9,629 L448.9,631" stroke="#ff0000" stroke-width="1"/><path d="M455.9,629 L457.9,631" stroke="#ff0000" stroke-width="1"/><path d="M464.9,629 L466.9,631" stroke="#ff0000" stroke-width="1"/><path d="M472.9,629 L474.9,631" stroke="#ff0000" stroke-width="1"/><path d="M481.9,629 L483.9,631" stroke="#ff0000" stroke-width="1"/><path d="M490.9,629 L492.9,631" stroke="#ff0000" stroke-width="1"/><path d="M499.9,629 L501.9,631" stroke="#ff0000" stroke-width="1"/><path d="M507.9,629 L509.9,631" stroke="#ff0000" stroke-width="1"/><path d="M516.9,629 L518.9,631" stroke="#ff0000" stroke-width="1"/><path d="M525.9,629 L527.9,631" stroke="#ff0000" stroke-width="1"/><path d="M534.9,629 L536.9,631" stroke="#ff0000" stroke-width="1"/><path d="M543.9,629 L545.9,631" stroke="#ff0000" stroke-width="1"/><path d="M551.9,629 L553.9,631" stroke="#ff0000" stroke-width="1"/><path d="M560.9,629 L562.9,631" stroke="#ff0000" stroke-width="1"/><path d="M569.9,629 L571.9,631" stroke="#ff0000" stroke-width="1"/><path d="M578.9,629 L580.9,631" stroke="#ff0000" stroke-width="1"/><path d="M586.9,629 L588.9,631" stroke="#ff0000" stroke-width="1"/><path d="M595.9,629 L597.9,631" stroke="#ff0000" stroke-width="1"/><path d="M604.9,629 L606.9,631" stroke="#ff0000" stroke-width="1"/><path d="M613.9,629 L615.9,631" stroke="#ff0000" stroke-width="1"/><path d="M621.9,629 L623.9,631" stroke="#ff0000" stroke-width="1"/><path d="M657.9,629 L659.9,631" stroke="#ff0000" stroke-width="1"/><path d="M665.9,629 L667.9,631" stroke="#ff0000" stroke-width="1"/><path d="M674.9,629 L676.9,631" stroke="#ff0000" stroke-width="1"/><path d="M683.9,629 L685.9,631" stroke="#ff0000" stroke-width="1"/><path d="M692.9,629 L694.9,631" stroke="#ff0000" stroke-width="1"/><path d="M700.9,629 L702.9,631" stroke="#ff0000" stroke-width="1"/><path d="M753.9,629 L755.9,631" stroke="#ff0000" stroke-width="1"/><path d="M762.9,629 L764.9,631" stroke="#ff0000" stroke-width="1"/><path d="M770.9,629 L772.9,631" stroke="#ff0000" stroke-width="1"/><path d="M779.9,629 L781.9,631" stroke="#ff0000" stroke-width="1"/><path d="M788.9,629 L790.9,631" stroke="#ff0000" stroke-width="1"/><path d="M797.9,629 L799.9,631" stroke="#ff0000" stroke-width="1"/><path d="M806.9,629 L808.9,631" stroke="#ff0000" stroke-width="1"/><path d="M814.9,629 L816.9,631" stroke="#ff0000" stroke-width="1"/><path d="M823.9,629 L825.9,631" stroke="#ff0000" stroke-width="1"/><path d="M841.9,629 L843.9,631" stroke="#ff0000" stroke-width="1"/><path d="M849.9,629 L851.9,631" stroke="#ff0000" stroke-width="1"/><path d="M858.9,629 L860.9,631" stroke="#ff0000" stroke-width="1"/><path d="M867.9,629 L869.9,631" stroke="#ff0000" stroke-width="1"/><path d="M876.9,629 L878.9,631" stroke="#ff0000" stroke-width="1"/><path d="M920.9,629 L922.9,631" stroke="#ff0000" stroke-width="1"/><path d="M1042.9,629 L1044.9,631" stroke="#ff0000" stroke-width="1"/><path d="M1051.9,629 L1053.9,631" stroke="#ff0000" stroke-width="1"/><path d="M1060.9,629 L1062.9,631" stroke="#ff0000" stroke-width="1"/><path d="M1069.9,629 L1071.9,631" stroke="#ff0000" stroke-width="1"/><path d="M1077.9,629 L1079.9,631" stroke="#ff0000" stroke-width="1"/><path d="M1086.9,629 L1088.9,631" stroke="#ff0000" stroke-width="1"/><path d="M1095.9,629 L1097.9,631" stroke="#ff0000" stroke-width="1"/><path d="M1104.9,629 L1106.9,631" stroke="#ff0000" stroke-width="1"/><path d="M1112.9,629 L1114.9,631" stroke="#ff0000" stroke-width="1"/><path d="M1121.9,629 L1123.9,631" stroke="#ff0000" stroke-width="1"/><path d="M1130.9,629 L1132.9,631" stroke="#ff0000" stroke-width="1"/><path d="M1139.9,629 L1141.9,631" stroke="#ff0000" stroke-width="1"/><path d="M1147.9,629 L1149.9,631" stroke="#ff0000" stroke-width="1"/><path d="M1156.9,629 L1158.9,631" stroke="#ff0000" stroke-width="1"/><path d="M1165.9,629 L1167.9,631" stroke="#ff0000" stroke-width="1"/><path d="M1174.9,629 L1176.9,631" stroke="#ff0000" stroke-width="1"/><path d="M1183.9,629 L1185.9,631" stroke="#ff0000" stroke-width="1"/><rect x="85.5" y="631" width="1228.5" height="1.1" fill="#fff"/><rect x="85" y="631" width="1.2" height="20.5" fill="#9a9a9a"/><rect x="85" y="650.6" width="1229" height="1.1" fill="#8a8a8a"/><rect x="90.00" y="631" width="1" height="5" fill="#fff"/><rect x="98.00" y="631" width="1" height="5" fill="#fff"/><rect x="107.00" y="631" width="1" height="5" fill="#fff"/><rect x="116.00" y="631" width="1" height="5" fill="#fff"/><rect x="125.00" y="631" width="1" height="20" fill="#fff"/><rect x="133.00" y="631" width="1" height="5" fill="#fff"/><rect x="142.00" y="631" width="1" height="5" fill="#fff"/><rect x="151.00" y="631" width="1" height="5" fill="#fff"/><rect x="160.00" y="631" width="1" height="20" fill="#fff"/><rect x="169.00" y="631" width="1" height="5" fill="#fff"/><rect x="177.00" y="631" width="1" height="5" fill="#fff"/><rect x="186.00" y="631" width="1" height="5" fill="#fff"/><rect x="195.00" y="631" width="1" height="20" fill="#fff"/><rect x="204.00" y="631" width="1" height="5" fill="#fff"/><rect x="212.00" y="631" width="1" height="5" fill="#fff"/><rect x="221.00" y="631" width="1" height="5" fill="#fff"/><rect x="230.00" y="631" width="1" height="5" fill="#fff"/><rect x="239.00" y="631" width="1" height="20" fill="#fff"/><rect x="247.00" y="631" width="1" height="5" fill="#fff"/><rect x="256.00" y="631" width="1" height="5" fill="#fff"/><rect x="265.00" y="631" width="1" height="5" fill="#fff"/><rect x="274.00" y="631" width="1" height="20" fill="#fff"/><rect x="283.00" y="631" width="1" height="5" fill="#fff"/><rect x="291.00" y="631" width="1" height="5" fill="#fff"/><rect x="300.00" y="631" width="1" height="5" fill="#fff"/><rect x="309.00" y="631" width="1" height="20" fill="#fff"/><rect x="318.00" y="631" width="1" height="5" fill="#fff"/><rect x="326.00" y="631" width="1" height="5" fill="#fff"/><rect x="335.00" y="631" width="1" height="5" fill="#fff"/><rect x="344.00" y="631" width="1" height="5" fill="#fff"/><rect x="353.00" y="631" width="1" height="20" fill="#fff"/><rect x="361.00" y="631" width="1" height="5" fill="#fff"/><rect x="370.00" y="631" width="1" height="5" fill="#fff"/><rect x="379.00" y="631" width="1" height="5" fill="#fff"/><rect x="388.00" y="631" width="1" height="20" fill="#fff"/><rect x="396.00" y="631" width="1" height="5" fill="#fff"/><rect x="405.00" y="631" width="1" height="5" fill="#fff"/><rect x="414.00" y="631" width="1" height="5" fill="#fff"/><rect x="423.00" y="631" width="1" height="5" fill="#fff"/><rect x="432.00" y="631" width="1" height="20" fill="#fff"/><rect x="440.00" y="631" width="1" height="5" fill="#fff"/><rect x="449.00" y="631" width="1" height="5" fill="#fff"/><rect x="458.00" y="631" width="1" height="5" fill="#fff"/><rect x="467.00" y="631" width="1" height="20" fill="#fff"/><rect x="475.00" y="631" width="1" height="5" fill="#fff"/><rect x="484.00" y="631" width="1" height="5" fill="#fff"/><rect x="493.00" y="631" width="1" height="5" fill="#fff"/><rect x="502.00" y="631" width="1" height="20" fill="#fff"/><rect x="510.00" y="631" width="1" height="5" fill="#fff"/><rect x="519.00" y="631" width="1" height="5" fill="#fff"/><rect x="528.00" y="631" width="1" height="5" fill="#fff"/><rect x="537.00" y="631" width="1" height="5" fill="#fff"/><rect x="546.00" y="631" width="1" height="20" fill="#fff"/><rect x="554.00" y="631" width="1" height="5" fill="#fff"/><rect x="563.00" y="631" width="1" height="5" fill="#fff"/><rect x="572.00" y="631" width="1" height="5" fill="#fff"/><rect x="581.00" y="631" width="1" height="20" fill="#fff"/><rect x="589.00" y="631" width="1" height="5" fill="#fff"/><rect x="598.00" y="631" width="1" height="5" fill="#fff"/><rect x="607.00" y="631" width="1" height="5" fill="#fff"/><rect x="616.00" y="631" width="1" height="20" fill="#fff"/><rect x="624.00" y="631" width="1" height="5" fill="#fff"/><rect x="633.00" y="631" width="1" height="5" fill="#fff"/><rect x="642.00" y="631" width="1" height="5" fill="#fff"/><rect x="651.00" y="631" width="1" height="20" fill="#fff"/><rect x="660.00" y="631" width="1" height="5" fill="#fff"/><rect x="668.00" y="631" width="1" height="5" fill="#fff"/><rect x="677.00" y="631" width="1" height="5" fill="#fff"/><rect x="686.00" y="631" width="1" height="5" fill="#fff"/><rect x="695.00" y="631" width="1" height="20" fill="#fff"/><rect x="703.00" y="631" width="1" height="5" fill="#fff"/><rect x="712.00" y="631" width="1" height="5" fill="#fff"/><rect x="721.00" y="631" width="1" height="5" fill="#fff"/><rect x="730.00" y="631" width="1" height="20" fill="#fff"/><rect x="738.00" y="631" width="1" height="5" fill="#fff"/><rect x="747.00" y="631" width="1" height="5" fill="#fff"/><rect x="756.00" y="631" width="1" height="5" fill="#fff"/><rect x="765.00" y="631" width="1" height="5" fill="#fff"/><rect x="773.00" y="631" width="1" height="20" fill="#fff"/><rect x="782.00" y="631" width="1" height="5" fill="#fff"/><rect x="791.00" y="631" width="1" height="5" fill="#fff"/><rect x="800.00" y="631" width="1" height="5" fill="#fff"/><rect x="809.00" y="631" width="1" height="20" fill="#fff"/><rect x="817.00" y="631" width="1" height="5" fill="#fff"/><rect x="826.00" y="631" width="1" height="5" fill="#fff"/><rect x="835.00" y="631" width="1" height="5" fill="#fff"/><rect x="844.00" y="631" width="1" height="20" fill="#fff"/><rect x="852.00" y="631" width="1" height="5" fill="#fff"/><rect x="861.00" y="631" width="1" height="5" fill="#fff"/><rect x="870.00" y="631" width="1" height="5" fill="#fff"/><rect x="879.00" y="631" width="1" height="5" fill="#fff"/><rect x="887.00" y="631" width="1" height="20" fill="#fff"/><rect x="896.00" y="631" width="1" height="5" fill="#fff"/><rect x="905.00" y="631" width="1" height="5" fill="#fff"/><rect x="914.00" y="631" width="1" height="5" fill="#fff"/><rect x="923.00" y="631" width="1" height="20" fill="#fff"/><rect x="931.00" y="631" width="1" height="5" fill="#fff"/><rect x="940.00" y="631" width="1" height="5" fill="#fff"/><rect x="949.00" y="631" width="1" height="5" fill="#fff"/><rect x="958.00" y="631" width="1" height="20" fill="#fff"/><rect x="966.00" y="631" width="1" height="5" fill="#fff"/><rect x="975.00" y="631" width="1" height="5" fill="#fff"/><rect x="984.00" y="631" width="1" height="5" fill="#fff"/><rect x="993.00" y="631" width="1" height="5" fill="#fff"/><rect x="1001.00" y="631" width="1" height="20" fill="#fff"/><rect x="1010.00" y="631" width="1" height="5" fill="#fff"/><rect x="1019.00" y="631" width="1" height="5" fill="#fff"/><rect x="1028.00" y="631" width="1" height="5" fill="#fff"/><rect x="1036.00" y="631" width="1" height="20" fill="#fff"/><rect x="1045.00" y="631" width="1" height="5" fill="#fff"/><rect x="1054.00" y="631" width="1" height="5" fill="#fff"/><rect x="1063.00" y="631" width="1" height="5" fill="#fff"/><rect x="1072.00" y="631" width="1" height="5" fill="#fff"/><rect x="1080.00" y="631" width="1" height="20" fill="#fff"/><rect x="1089.00" y="631" width="1" height="5" fill="#fff"/><rect x="1098.00" y="631" width="1" height="5" fill="#fff"/><rect x="1107.00" y="631" width="1" height="5" fill="#fff"/><rect x="1115.00" y="631" width="1" height="20" fill="#fff"/><rect x="1124.00" y="631" width="1" height="5" fill="#fff"/><rect x="1133.00" y="631" width="1" height="5" fill="#fff"/><rect x="1142.00" y="631" width="1" height="5" fill="#fff"/><rect x="1150.00" y="631" width="1" height="20" fill="#fff"/><rect x="1159.00" y="631" width="1" height="5" fill="#fff"/><rect x="1168.00" y="631" width="1" height="5" fill="#fff"/><rect x="1177.00" y="631" width="1" height="5" fill="#fff"/><rect x="1186.00" y="631" width="1" height="5" fill="#fff"/><rect x="1194.00" y="631" width="1" height="20" fill="#fff"/><rect x="1203.00" y="631" width="1" height="5" fill="#fff"/><rect x="1212.00" y="631" width="1" height="5" fill="#fff"/><rect x="1221.00" y="631" width="1" height="5" fill="#fff"/><rect x="1229.00" y="631" width="1" height="20" fill="#fff"/><rect x="1238.00" y="631" width="1" height="5" fill="#fff"/><rect x="1247.00" y="631" width="1" height="5" fill="#fff"/><rect x="1256.00" y="631" width="1" height="5" fill="#fff"/><rect x="1264.00" y="631" width="1" height="20" fill="#fff"/><rect x="1273.00" y="631" width="1" height="5" fill="#fff"/><rect x="1282.00" y="631" width="1" height="5" fill="#fff"/><rect x="1291.00" y="631" width="1" height="5" fill="#fff"/><rect x="1299.00" y="631" width="1" height="5" fill="#fff"/><rect x="1308.00" y="631" width="1" height="20" fill="#fff"/></svg>
<div class="t" style="left:67.2px;top:112.4px;font-size:12.8px;line-height:17px;color:#1c1c3c;">0</div>
<div class="t" style="left:67.2px;top:174.4px;font-size:12.8px;line-height:17px;color:#1c1c3c;">0</div>
<div class="t" style="left:67.2px;top:249.5px;font-size:12.8px;line-height:17px;color:#1c1c3c;">0</div>
<div class="t" style="left:1352.5px;top:112.4px;font-size:12.8px;line-height:17px;color:#fdfbdc;">0</div>
<div class="t" style="left:1352.5px;top:174.4px;font-size:12.8px;line-height:17px;color:#ffeeda;">0</div>
<div class="t" style="left:1352.5px;top:249.5px;font-size:12.8px;line-height:17px;color:#ffe4d4;">0</div>
<div class="t" style="left:66.3px;top:612.6px;font-size:12.6px;line-height:16px;color:#fff;">5</div>
<div class="t" style="left:1352.5px;top:612.6px;font-size:12.6px;line-height:16px;color:#fff;">5</div>
<div class="t" style="left:66.3px;top:598.0px;font-size:12.6px;line-height:16px;color:#fff;">6</div>
<div class="t" style="left:1352.5px;top:598.0px;font-size:12.6px;line-height:16px;color:#fff;">6</div>
<div class="t" style="left:66.3px;top:583.4px;font-size:12.6px;line-height:16px;color:#fff;">7</div>
<div class="t" style="left:1352.5px;top:583.4px;font-size:12.6px;line-height:16px;color:#fff;">7</div>
<div class="t" style="left:66.3px;top:568.8px;font-size:12.6px;line-height:16px;color:#fff;">8</div>
<div class="t" style="left:1352.5px;top:568.8px;font-size:12.6px;line-height:16px;color:#fff;">8</div>
<div class="t" style="left:66.3px;top:554.2px;font-size:12.6px;line-height:16px;color:#fff;">9</div>
<div class="t" style="left:1352.5px;top:554.2px;font-size:12.6px;line-height:16px;color:#fff;">9</div>
<div class="t" style="left:59.3px;top:539.6px;font-size:12.6px;line-height:16px;color:#fff;">10</div>
<div class="t" style="left:1345.5px;top:539.6px;font-size:12.6px;line-height:16px;color:#fff;">10</div>
<div class="t" style="left:60.2px;top:525.0px;font-size:12.6px;line-height:16px;color:#fff;">11</div>
<div class="t" style="left:1346.4px;top:525.0px;font-size:12.6px;line-height:16px;color:#fff;">11</div>
<div class="t" style="left:59.3px;top:510.4px;font-size:12.6px;line-height:16px;color:#fff;">12</div>
<div class="t" style="left:1345.5px;top:510.4px;font-size:12.6px;line-height:16px;color:#fff;">12</div>
<div class="t" style="left:59.3px;top:495.8px;font-size:12.6px;line-height:16px;color:#fff;">13</div>
<div class="t" style="left:1345.5px;top:495.8px;font-size:12.6px;line-height:16px;color:#fff;">13</div>
<div class="t" style="left:59.3px;top:481.2px;font-size:12.6px;line-height:16px;color:#fff;">14</div>
<div class="t" style="left:1345.5px;top:481.2px;font-size:12.6px;line-height:16px;color:#fff;">14</div>
<div class="t" style="left:59.3px;top:466.6px;font-size:12.6px;line-height:16px;color:#fff;">15</div>
<div class="t" style="left:1345.5px;top:466.6px;font-size:12.6px;line-height:16px;color:#fff;">15</div>
<div class="t" style="left:59.3px;top:451.9px;font-size:12.6px;line-height:16px;color:#fff;">16</div>
<div class="t" style="left:1345.5px;top:451.9px;font-size:12.6px;line-height:16px;color:#fff;">16</div>
<div class="t" style="left:59.3px;top:437.3px;font-size:12.6px;line-height:16px;color:#fff;">17</div>
<div class="t" style="left:1345.5px;top:437.3px;font-size:12.6px;line-height:16px;color:#fff;">17</div>
<div class="t" style="left:59.3px;top:422.7px;font-size:12.6px;line-height:16px;color:#fff;">18</div>
<div class="t" style="left:1345.5px;top:422.7px;font-size:12.6px;line-height:16px;color:#fff;">18</div>
<div class="t" style="left:59.3px;top:408.1px;font-size:12.6px;line-height:16px;color:#fff;">19</div>
<div class="t" style="left:1345.5px;top:408.1px;font-size:12.6px;line-height:16px;color:#fff;">19</div>
<div class="t" style="left:59.3px;top:393.5px;font-size:12.6px;line-height:16px;color:#fff;">20</div>
<div class="t" style="left:1345.5px;top:393.5px;font-size:12.6px;line-height:16px;color:#fff;">20</div>
<div class="t" style="left:59.3px;top:378.9px;font-size:12.6px;line-height:16px;color:#fff;">21</div>
<div class="t" style="left:1345.5px;top:378.9px;font-size:12.6px;line-height:16px;color:#fff;">21</div>
<div class="t" style="left:59.3px;top:364.3px;font-size:12.6px;line-height:16px;color:#fff;">22</div>
<div class="t" style="left:1345.5px;top:364.3px;font-size:12.6px;line-height:16px;color:#fff;">22</div>
<div class="t" style="left:59.3px;top:349.7px;font-size:12.6px;line-height:16px;color:#fff;">23</div>
<div class="t" style="left:1345.5px;top:349.7px;font-size:12.6px;line-height:16px;color:#fff;">23</div>
<div class="t" style="left:59.3px;top:335.1px;font-size:12.6px;line-height:16px;color:#fff;">24</div>
<div class="t" style="left:1345.5px;top:335.1px;font-size:12.6px;line-height:16px;color:#fff;">24</div>
<div class="t" style="left:59.3px;top:320.5px;font-size:12.6px;line-height:16px;color:#fff;">25</div>
<div class="t" style="left:1345.5px;top:320.5px;font-size:12.6px;line-height:16px;color:#fff;">25</div>
<div class="t" style="left:59.3px;top:305.9px;font-size:12.6px;line-height:16px;color:#fff;">26</div>
<div class="t" style="left:1345.5px;top:305.9px;font-size:12.6px;line-height:16px;color:#fff;">26</div>
<div class="a" style="left:37px;top:560px;width:36.599999999999994px;height:18px;background:#000;border:1px solid #fff;box-sizing:border-box;"></div>
<div class="t" style="left:39.3px;top:562.2px;font-size:10.6px;line-height:14px;color:#00f000;letter-spacing:-0.004px;">8.3200</div>
<div class="a" style="left:1317.3px;top:560px;width:36.700000000000045px;height:18px;background:#000;border:1px solid #fff;box-sizing:border-box;"></div>
<div class="t" style="left:1319.6px;top:562.2px;font-size:10.6px;line-height:14px;color:#00f000;letter-spacing:0.013px;">8.3200</div>
<div class="a" style="left:86.2px;top:633px;width:1227px;height:18px;overflow:hidden;">
<div class="t" style="left:-4.2px;top:3.2px;font-size:12.3px;line-height:16px;color:#fff;">Dec</div>
<div class="t" style="left:40.7px;top:3.2px;font-size:12.3px;line-height:16px;color:#fff;">2018</div>
<div class="t" style="left:75.7px;top:3.2px;font-size:12.3px;line-height:16px;color:#fff;">Feb</div>
<div class="t" style="left:110.7px;top:3.2px;font-size:12.3px;line-height:16px;color:#fff;">Mar</div>
<div class="t" style="left:154.7px;top:3.2px;font-size:12.3px;line-height:16px;color:#fff;">Apr</div>
<div class="t" style="left:189.7px;top:3.2px;font-size:12.3px;line-height:16px;color:#fff;">May</div>
<div class="t" style="left:224.7px;top:3.2px;font-size:12.3px;line-height:16px;color:#fff;">Jun</div>
<div class="t" style="left:268.7px;top:3.2px;font-size:12.3px;line-height:16px;color:#fff;">Jul</div>
<div class="t" style="left:303.7px;top:3.2px;font-size:12.3px;line-height:16px;color:#fff;">Aug</div>
<div class="t" style="left:347.7px;top:3.2px;font-size:12.3px;line-height:16px;color:#fff;">Sep</div>
<div class="t" style="left:382.7px;top:3.2px;font-size:12.3px;line-height:16px;color:#fff;">Oct</div>
<div class="t" style="left:417.7px;top:3.2px;font-size:12.3px;line-height:16px;color:#fff;">Nov</div>
<div class="t" style="left:461.7px;top:3.2px;font-size:12.3px;line-height:16px;color:#fff;">Dec</div>
<div class="t" style="left:496.7px;top:3.2px;font-size:12.3px;line-height:16px;color:#fff;">2019</div>
<div class="t" style="left:531.7px;top:3.2px;font-size:12.3px;line-height:16px;color:#fff;">Feb</div>
<div class="t" style="left:566.7px;top:3.2px;font-size:12.3px;line-height:16px;color:#fff;">Mar</div>
<div class="t" style="left:610.7px;top:3.2px;font-size:12.3px;line-height:16px;color:#fff;">Apr</div>
<div class="t" style="left:645.7px;top:3.2px;font-size:12.3px;line-height:16px;color:#fff;">May</div>
<div class="t" style="left:688.7px;top:3.2px;font-size:12.3px;line-height:16px;color:#fff;">Jun</div>
<div class="t" style="left:724.7px;top:3.2px;font-size:12.3px;line-height:16px;color:#fff;">Jul</div>
<div class="t" style="left:759.7px;top:3.2px;font-size:12.3px;line-height:16px;color:#fff;">Aug</div>
<div class="t" style="left:802.7px;top:3.2px;font-size:12.3px;line-height:16px;color:#fff;">Sep</div>
<div class="t" style="left:838.7px;top:3.2px;font-size:12.3px;line-height:16px;color:#fff;">Oct</div>
<div class="t" style="left:873.7px;top:3.2px;font-size:12.3px;line-height:16px;color:#fff;">Nov</div>
<div class="t" style="left:916.7px;top:3.2px;font-size:12.3px;line-height:16px;color:#fff;">Dec</div>
<div class="t" style="left:951.7px;top:3.2px;font-size:12.3px;line-height:16px;color:#fff;">2020</div>
<div class="t" style="left:995.7px;top:3.2px;font-size:12.3px;line-height:16px;color:#fff;">Feb</div>
<div class="t" style="left:1030.7px;top:3.2px;font-size:12.3px;line-height:16px;color:#fff;">Mar</div>
<div class="t" style="left:1065.7px;top:3.2px;font-size:12.3px;line-height:16px;color:#fff;">Apr</div>
<div class="t" style="left:1109.7px;top:3.2px;font-size:12.3px;line-height:16px;color:#fff;">May</div>
<div class="t" style="left:1144.7px;top:3.2px;font-size:12.3px;line-height:16px;color:#fff;">Jun</div>
<div class="t" style="left:1179.7px;top:3.2px;font-size:12.3px;line-height:16px;color:#fff;">Jul</div>
<div class="t" style="left:1223.7px;top:3.2px;font-size:12.3px;line-height:16px;color:#fff;">Aug</div>
</div>
<div class="a" style="left:1315px;top:632px;width:49px;height:20px;background:#e9e9e9;border:1px solid #cfcfcf;box-sizing:border-box;"></div>
<svg width="1366" height="768"><circle cx="1338" cy="642.4" r="5" fill="none" stroke="#f4e640" stroke-width="1.1"/><path d="M1335,643.4 H1341" stroke="#f4e640" stroke-width="1"/><circle cx="1336.2" cy="640.8" r="0.6" fill="#f4e640"/><circle cx="1339.8" cy="640.8" r="0.6" fill="#f4e640"/></svg>
<div class="a" style="left:35px;top:652.5px;width:1331px;height:21px;background:#ebebeb;"></div>
<div class="a" style="left:52px;top:653px;width:1081px;height:20px;background:repeating-conic-gradient(#ffffff 0% 25%,#ececec 0% 50%) 0 0/2px 2px;"></div>
<div class="a" style="left:849px;top:653px;width:283px;height:19.8px;background:#f0f0f0;box-shadow:inset -1.5px -1.5px 0 #6e6e6e, inset 1.5px 1.5px 0 #ffffff;border:0px solid #d2d2d2;box-sizing:border-box;"></div>
<div class="a" style="left:35px;top:653px;width:17px;height:19.5px;background:#ececec;box-shadow:inset -1px -1px 0 #7e7e7e, inset 1px 1px 0 #ffffff;border:1px solid #d2d2d2;box-sizing:border-box;"></div>
<div class="a" style="left:1132px;top:653px;width:17px;height:19.5px;background:#ececec;box-shadow:inset -1px -1px 0 #7e7e7e, inset 1px 1px 0 #ffffff;border:1px solid #d2d2d2;box-sizing:border-box;"></div>
<svg width="1366" height="768"><path d="M45.5,658.5 V667 L41,662.8 Z" fill="#9a9a9a"/><path d="M1139,658.5 V667 L1143.5,662.8 Z" fill="#8a8a8a"/><rect x="1153" y="655" width="1" height="16" fill="#a8a8a8"/><rect x="1154" y="655" width="1" height="16" fill="#fafafa"/><rect x="1200" y="655" width="1" height="16" fill="#a8a8a8"/><rect x="1201" y="655" width="1" height="16" fill="#fafafa"/><rect x="1290" y="655" width="1" height="16" fill="#a8a8a8"/><rect x="1291" y="655" width="1" height="16" fill="#fafafa"/><rect x="1359" y="655" width="1" height="16" fill="#a8a8a8"/><rect x="1360" y="655" width="1" height="16" fill="#fafafa"/><g fill="none" stroke="#4c4c4c" stroke-width="2"><path d="M1161.2,662 A4.6,4.6 0 0 1 1169.2,659.6"/><path d="M1170.4,663.6 A4.6,4.6 0 0 1 1162.4,666"/></g><path d="M1171.5,657.2 V662 H1166.6 Z" fill="#4c4c4c"/><path d="M1160.1,668.4 V663.6 H1165 Z" fill="#4c4c4c"/><text x="1181.2" y="667.2" font-family="Liberation Sans" font-weight="bold" font-size="11.6" fill="#4c4c4c">W</text><path d="M1213.9,657.6 L1217.4,661.6 H1215 V664.2 H1217.4 L1213.9,668.2 L1210.4,664.2 H1212.8 V661.6 H1210.4 Z" fill="#4c4c4c"/><g fill="#4c4c4c"><rect x="1233.9" y="657.5" width="1.9" height="11"/><rect x="1229.3" y="662" width="11" height="1.9"/><path d="M1234.8,655.6 L1237.8,659 H1231.8 Z M1234.8,670.2 L1237.8,666.8 H1231.8 Z M1227.4,663 L1230.8,660 V666 Z M1242.2,663 L1238.8,660 V666 Z"/></g><circle cx="1255.8" cy="663" r="5.4" fill="#f4f4f4" stroke="#5a5a5a" stroke-width="1.1"/><rect x="1252.8" y="662.1" width="6" height="1.9" fill="#4c4c4c"/><circle cx="1276.8" cy="663" r="5.4" fill="#f4f4f4" stroke="#5a5a5a" stroke-width="1.1"/><rect x="1273.8" y="662.1" width="6" height="1.9" fill="#4c4c4c"/><rect x="1275.85" y="660" width="1.9" height="6" fill="#4c4c4c"/><path d="M1306,658.6 V667.6 L1300.6,663.1 Z" fill="#c2c2c2"/><path d="M1322.6,658.6 V667.6 L1328,663.1 Z" fill="#c2c2c2"/><rect x="1339.6" y="657.3" width="11.2" height="10.8" fill="#f4f4f4" stroke="#4c4c4c" stroke-width="1.1"/><rect x="1339.6" y="657.3" width="11.2" height="2.2" fill="#4c4c4c"/><path d="M1342,661.6 H1343 M1344.2,661.6 H1349 M1342,663.8 H1343 M1344.2,663.8 H1349 M1342,666 H1343 M1344.2,666 H1349" stroke="#4c4c4c" stroke-width="1"/></svg>
<div class="a" style="left:0;top:673.5px;width:1366px;height:2px;background:#f8f8f8;"></div>
<div class="a" style="left:0;top:675.5px;width:1366px;height:32.5px;background:#ebebeb;"></div>
<div class="a" style="left:5.5px;top:679px;width:5px;height:27px;background:linear-gradient(#e6e6e6,#c4c4c4);border-right:1px solid #a0a0a0;"></div><div class="a" style="left:7.0px;top:692px;width:2.6px;height:2.6px;background:#555;"></div>
<div class="a" style="left:14.5px;top:683.8px;width:127.0px;height:18.2px;background:#fff;box-shadow:inset 1px 1px 0 #707070, inset -1px -1px 0 #e0e0e0;border:1px solid #a4a4a4;box-sizing:border-box;"></div>
<div class="a" style="left:28.8px;top:692.7px;width:81.4px;height:1.2px;background:#000;"></div>
<div class="a" style="left:124.4px;top:685.8px;width:15.099999999999994px;height:14.4px;background:linear-gradient(#fdfdfd,#e4e4e4);box-shadow:inset -1px -1px 0 #707070, inset 1px 1px 0 #fff;border:1px solid #b8b8b8;box-sizing:border-box;"></div>
<svg width="1366" height="768"><path d="M128.35,691.2 H135.54999999999998 L131.95,695.4 Z" fill="#111"/></svg>
<div class="a" style="left:145.5px;top:678px;width:1px;height:29px;background:#a8a8a8;"></div><div class="a" style="left:146.5px;top:678px;width:1px;height:29px;background:#fafafa;"></div>
<div class="a" style="left:149.5px;top:683.8px;width:97.9px;height:18.2px;background:#fff;box-shadow:inset 1px 1px 0 #707070, inset -1px -1px 0 #e0e0e0;border:1px solid #a4a4a4;box-sizing:border-box;"></div>
<div class="a" style="left:160.7px;top:692.7px;width:59.10000000000002px;height:1.2px;background:#000;"></div>
<div class="a" style="left:230.8px;top:685.8px;width:15.199999999999989px;height:14.4px;background:linear-gradient(#fdfdfd,#e4e4e4);box-shadow:inset -1px -1px 0 #707070, inset 1px 1px 0 #fff;border:1px solid #b8b8b8;box-sizing:border-box;"></div>
<svg width="1366" height="768"><path d="M234.8,691.2 H242.0 L238.4,695.4 Z" fill="#111"/></svg>
<div class="a" style="left:255.5px;top:678px;width:1px;height:29px;background:#a8a8a8;"></div><div class="a" style="left:256.5px;top:678px;width:1px;height:29px;background:#fafafa;"></div>
<div class="a" style="left:262px;top:679px;width:5px;height:27px;background:linear-gradient(#e6e6e6,#c4c4c4);border-right:1px solid #a0a0a0;"></div><div class="a" style="left:263.5px;top:692px;width:2.6px;height:2.6px;background:#555;"></div>
<div class="a" style="left:272.9px;top:682.5px;width:9.5px;height:9.5px;background:#00ff00;box-shadow:0 0 0 0.6px #8a8a8a;"></div>
<div class="a" style="left:284.8px;top:682.5px;width:9.5px;height:9.5px;background:#f2b84a;box-shadow:0 0 0 0.6px #8a8a8a;"></div>
<div class="a" style="left:296.8px;top:682.5px;width:9.5px;height:9.5px;background:#ff0000;box-shadow:0 0 0 0.6px #8a8a8a;"></div>
<div class="a" style="left:308.7px;top:682.5px;width:9.5px;height:9.5px;background:#d054d0;box-shadow:0 0 0 0.6px #8a8a8a;"></div>
<div class="a" style="left:320.7px;top:682.5px;width:9.5px;height:9.5px;background:#ffb8c8;box-shadow:0 0 0 0.6px #8a8a8a;"></div>
<div class="a" style="left:332.9px;top:682.5px;width:9.5px;height:9.5px;background:#ffffff;box-shadow:0 0 0 0.6px #8a8a8a;"></div>
<div class="a" style="left:344.6px;top:682.5px;width:9.5px;height:9.5px;background:#008c00;box-shadow:0 0 0 0.6px #8a8a8a;"></div>
<div class="a" style="left:355.8px;top:682.5px;width:9.5px;height:9.5px;background:#005a00;box-shadow:0 0 0 0.6px #8a8a8a;"></div>
<div class="a" style="left:272.9px;top:694.9px;width:9.5px;height:9.5px;background:#000000;box-shadow:0 0 0 0.6px #8a8a8a;"></div>
<div class="a" style="left:284.8px;top:694.9px;width:9.5px;height:9.5px;background:#ff8000;box-shadow:0 0 0 0.6px #8a8a8a;"></div>
<div class="a" style="left:296.8px;top:694.9px;width:9.5px;height:9.5px;background:#e06000;box-shadow:0 0 0 0.6px #8a8a8a;"></div>
<div class="a" style="left:308.7px;top:694.9px;width:9.5px;height:9.5px;background:#7a7cc8;box-shadow:0 0 0 0.6px #8a8a8a;"></div>
<div class="a" style="left:320.7px;top:694.9px;width:9.5px;height:9.5px;background:#ffe2e2;box-shadow:0 0 0 0.6px #8a8a8a;"></div>
<div class="a" style="left:332.9px;top:694.9px;width:9.5px;height:9.5px;background:#000070;box-shadow:0 0 0 0.6px #8a8a8a;"></div>
<div class="a" style="left:344.6px;top:694.9px;width:9.5px;height:9.5px;background:#00008c;box-shadow:0 0 0 0.6px #8a8a8a;"></div>
<div class="a" style="left:355.8px;top:694.9px;width:9.5px;height:9.5px;background:#ffd800;box-shadow:0 0 0 0.6px #8a8a8a;"></div>
<div class="a" style="left:295.4px;top:681.1px;width:12.2px;height:12.2px;border:1px dotted #222;box-sizing:border-box;"></div>
<svg width="1366" height="768"><path d="M367.6,691.8 H374.8 L371.2,695.8 Z" fill="#111"/></svg>
<div class="a" style="left:384px;top:678px;width:1px;height:29px;background:#a8a8a8;"></div><div class="a" style="left:385px;top:678px;width:1px;height:29px;background:#fafafa;"></div>
<div class="a" style="left:391.5px;top:679px;width:5px;height:27px;background:linear-gradient(#e6e6e6,#c4c4c4);border-right:1px solid #a0a0a0;"></div><div class="a" style="left:393.0px;top:692px;width:2.6px;height:2.6px;background:#555;"></div>
<div class="a" style="left:404.3px;top:688.2px;width:15.4px;height:12.4px;background:#fcfcfc;border:1px solid #5a7ea6;border-top:2.4px solid #6a8cb2;border-radius:1.5px;box-sizing:border-box;"></div>
<svg width="1366" height="768"><path d="M406.3,697.2 L408.90000000000003,694.6 L410.90000000000003,696" stroke="#d02020" stroke-width="1" fill="none"/></svg>
<div class="t" style="left:411.5px;top:688.3px;font-size:10.5px;line-height:14px;color:#111;">1</div>
<div class="a" style="left:431.2px;top:688.2px;width:15.4px;height:12.4px;background:#fcfcfc;border:1px solid #5a7ea6;border-top:2.4px solid #6a8cb2;border-radius:1.5px;box-sizing:border-box;"></div>
<svg width="1366" height="768"><path d="M433.2,697.2 L435.8,694.6 L437.8,696" stroke="#d02020" stroke-width="1" fill="none"/></svg>
<div class="t" style="left:438.4px;top:688.3px;font-size:10.5px;line-height:14px;color:#111;">2</div>
<div class="a" style="left:458px;top:688.2px;width:15.4px;height:12.4px;background:#fcfcfc;border:1px solid #5a7ea6;border-top:2.4px solid #6a8cb2;border-radius:1.5px;box-sizing:border-box;"></div>
<svg width="1366" height="768"><path d="M460,697.2 L462.6,694.6 L464.6,696" stroke="#d02020" stroke-width="1" fill="none"/></svg>
<div class="t" style="left:465.2px;top:688.3px;font-size:10.5px;line-height:14px;color:#111;">3</div>
<div class="a" style="left:485.2px;top:688.2px;width:15.4px;height:12.4px;background:#fcfcfc;border:1px solid #5a7ea6;border-top:2.4px solid #6a8cb2;border-radius:1.5px;box-sizing:border-box;"></div>
<svg width="1366" height="768"><path d="M487.2,697.2 L489.8,694.6 L491.8,696" stroke="#d02020" stroke-width="1" fill="none"/></svg>
<div class="t" style="left:492.4px;top:688.3px;font-size:10.5px;line-height:14px;color:#111;">4</div>
<div class="a" style="left:512px;top:688.2px;width:15.4px;height:12.4px;background:#fcfcfc;border:1px solid #5a7ea6;border-top:2.4px solid #6a8cb2;border-radius:1.5px;box-sizing:border-box;"></div>
<svg width="1366" height="768"><path d="M514,697.2 L516.6,694.6 L518.6,696" stroke="#d02020" stroke-width="1" fill="none"/></svg>
<div class="t" style="left:519.2px;top:688.3px;font-size:10.5px;line-height:14px;color:#111;">5</div>
<div class="a" style="left:539.2px;top:688.2px;width:15.4px;height:12.4px;background:#fcfcfc;border:1px solid #5a7ea6;border-top:2.4px solid #6a8cb2;border-radius:1.5px;box-sizing:border-box;"></div>
<svg width="1366" height="768"><path d="M541.2,697.2 L543.8000000000001,694.6 L545.8000000000001,696" stroke="#d02020" stroke-width="1" fill="none"/></svg>
<div class="t" style="left:546.4px;top:688.3px;font-size:10.5px;line-height:14px;color:#111;">6</div>
<div class="a" style="left:567px;top:678px;width:1px;height:29px;background:#a8a8a8;"></div><div class="a" style="left:568px;top:678px;width:1px;height:29px;background:#fafafa;"></div>
<div class="a" style="left:0;top:708px;width:1366px;height:21px;background:#3d3d3d;"></div>
<div class="t" style="left:10.0px;top:711.8px;font-size:12.6px;line-height:16px;color:#ffffff;letter-spacing:-0.163px;">For Help, press F1</div>
<div class="t" style="left:1095.5px;top:711.8px;font-size:12.3px;line-height:16px;color:#ffffff;letter-spacing:-0.056px;">06/08/2020</div>
<div class="t" style="left:1252.5px;top:711.8px;font-size:12.3px;line-height:16px;color:#ffffff;letter-spacing:-0.037px;">4.39442</div>
<div class="a" style="left:1345px;top:712.3px;width:21px;height:14.6px;background:#f2f2f2;"></div>
<div class="t" style="left:1351.4px;top:710.6px;font-size:15px;line-height:18px;color:#0a8a0a;font-weight:bold;">$</div>
<div class="a" style="left:0;top:729px;width:1366px;height:39px;background:linear-gradient(97deg,#b7822b 0%,#b8842d 50.5%,#c8a462 56%,#caa968 70%,#c9a766 86%,#c9982f 90.5%,#c8922c 100%);"></div>
<div class="a" style="left:0;top:728.4px;width:1366px;height:2.2px;background:linear-gradient(90deg,#7c6a3a,#8a7a4a 60%,#8c7430);"></div>
<div class="a" style="left:175.7px;top:729.5px;width:58.5px;height:38.5px;background:linear-gradient(#cfae78,#d6b882);border:1px solid #f0e2c4;border-bottom:none;box-sizing:border-box;"></div>
<div class="a" style="left:237.9px;top:729.5px;width:58.29999999999998px;height:38.5px;background:rgba(255,236,190,0.17);border:1px solid rgba(255,240,210,0.35);border-bottom:none;box-sizing:border-box;"></div>
<div class="a" style="left:300px;top:729.5px;width:58.10000000000002px;height:38.5px;background:rgba(255,236,190,0.17);border:1px solid rgba(255,240,210,0.35);border-bottom:none;box-sizing:border-box;"></div>
<div class="a" style="left:424px;top:729.5px;width:58.30000000000001px;height:38.5px;background:rgba(255,236,190,0.17);border:1px solid rgba(255,240,210,0.35);border-bottom:none;box-sizing:border-box;"></div>
<div class="a" style="left:486px;top:729.5px;width:58.10000000000002px;height:38.5px;background:rgba(255,236,190,0.17);border:1px solid rgba(255,240,210,0.35);border-bottom:none;box-sizing:border-box;"></div>
<div class="a" style="left:857.9px;top:729.5px;width:58.10000000000002px;height:38.5px;background:rgba(255,236,190,0.17);border:1px solid rgba(255,240,210,0.35);border-bottom:none;box-sizing:border-box;"></div>
<svg width="1366" height="768"><path d="M11.4,739.8 L23.6,737.4 V746.7 H11.4 Z M25,737.1 L38.3,734.4 V746.7 H25 Z M11.4,748 H23.6 V757.4 L11.4,755 Z M25,748 H38.3 V760.3 L25,757.7 Z" fill="#ffffff"/><defs><linearGradient id="tfold" x1="0" y1="0" x2="0" y2="1"><stop offset="0" stop-color="#fdf0b8"/><stop offset="1" stop-color="#f0cc60"/></linearGradient><linearGradient id="tblue" x1="0" y1="0" x2="0" y2="1"><stop offset="0" stop-color="#bfe6fa"/><stop offset="1" stop-color="#3a9ad8"/></linearGradient></defs><path d="M66.4,760.3 V739.2 L69,736.6 H77 L79,739 H96.3 V760.3 Z" fill="#e8c050"/><rect x="69.5" y="737.6" width="20" height="5" fill="#fdfdfd"/><rect x="70.5" y="736.4" width="3" height="1.8" fill="#1aa81a"/><rect x="78" y="738" width="3" height="1.8" fill="#d02020"/><rect x="85" y="740" width="3" height="1.8" fill="#1a6ad8"/><path d="M66.4,760.3 V743 H96.3 V760.3 Z" fill="url(#tfold)"/><path d="M69.4,763.2 V753.6 L72.6,750.8 H89.6 L92.8,753.6 V763.2 H87 V757.8 H75.2 V763.2 Z" fill="url(#tblue)" stroke="#2a7ab8" stroke-width="0.6"/><rect x="143" y="737.4" width="14.6" height="21.1" fill="#ffffff" stroke="#d04525" stroke-width="1.3"/><circle cx="151.5" cy="743.8" r="3.3" fill="#d04525"/><path d="M151.5,743.8 V740 A3.8,3.8 0 0 1 155.3,743.8 Z" fill="#fff"/><rect x="147" y="749.6" width="8.6" height="1.5" fill="#d04525"/><rect x="147" y="752.8" width="8.6" height="1.5" fill="#d04525"/><path d="M128.3,736.2 L145.8,733 V762.5 L128.3,759.3 Z" fill="#d04525"/><text x="131.4" y="754" font-family="Liberation Sans" font-weight="bold" font-size="17" fill="#fff">P</text><defs><linearGradient id="tms" x1="0" y1="0" x2="0" y2="1"><stop offset="0" stop-color="#4a4a4a"/><stop offset="0.5" stop-color="#101010"/><stop offset="1" stop-color="#000"/></linearGradient></defs><rect x="188.9" y="732.1" width="32.1" height="31.7" rx="3.5" fill="url(#tms)"/><path d="M196.2,760.5 L197.8,750 H201.6 L200,760.5 Z M201.4,760.5 L204,742.5 H208 L205.4,760.5 Z M206.8,760.5 L210.6,734.2 H214.6 L210.8,760.5 Z" fill="#f5871e"/><circle cx="266.6" cy="747.8" r="14.8" fill="#db4437"/><path d="M266.6,747.8 L279.42,740.40 A14.8,14.8 0 0 1 266.60,762.60 Z" fill="#ffcd40"/><path d="M266.6,747.8 L266.60,762.60 A14.8,14.8 0 0 1 253.78,740.40 Z" fill="#0f9d58"/><path d="M266.6,747.8 L253.78,740.40 A14.8,14.8 0 0 1 279.42,740.40 Z" fill="#db4437"/><circle cx="266.6" cy="747.8" r="6.9" fill="#fff"/><circle cx="266.6" cy="747.8" r="5.4" fill="#4285f4"/><rect x="328" y="736" width="15.8" height="23" fill="#fff" stroke="#2b579a" stroke-width="1.2"/><rect x="333" y="739.4" width="8.6" height="1.4" fill="#2b579a"/><rect x="333" y="742.6" width="8.6" height="1.4" fill="#2b579a"/><rect x="333" y="745.8" width="8.6" height="1.4" fill="#2b579a"/><rect x="333" y="749" width="8.6" height="1.4" fill="#2b579a"/><rect x="333" y="752.2" width="8.6" height="1.4" fill="#2b579a"/><rect x="333" y="755.4" width="8.6" height="1.4" fill="#2b579a"/><path d="M313.8,735.6 L331.5,732.5 V762 L313.8,758.9 Z" fill="#2b579a"/><text x="315.6" y="753" font-family="Liberation Sans" font-weight="bold" font-size="14" fill="#fff">W</text><rect x="375.9" y="732" width="29.8" height="30.6" rx="3" fill="#1a6af0"/><path d="M382.5,753.5 V741.6 H399.2 V753.5 H394.6 V746.2 H392.6 V750 H389.2 V746.2 H387.2 V753.5 Z" fill="#fff"/><rect x="441.5" y="733.3" width="21.8" height="28.7" rx="1.5" fill="#cfe6f6" stroke="#6a9ac4" stroke-width="0.9"/><rect x="443.8" y="735.6" width="17.2" height="7.4" fill="#f4fbff" stroke="#e0a040" stroke-width="0.8"/><text x="455.2" y="742.2" font-family="Liberation Mono" font-size="7" fill="#345">0</text><rect x="443.8" y="745.4" width="3.3" height="2.9" fill="#f8fcff" stroke="#8ab0d0" stroke-width="0.4"/><rect x="448.2" y="745.4" width="3.3" height="2.9" fill="#f8fcff" stroke="#8ab0d0" stroke-width="0.4"/><rect x="452.6" y="745.4" width="3.3" height="2.9" fill="#f8fcff" stroke="#8ab0d0" stroke-width="0.4"/><rect x="457.0" y="745.4" width="3.3" height="2.9" fill="#f8fcff" stroke="#8ab0d0" stroke-width="0.4"/><rect x="443.8" y="749.4" width="3.3" height="2.9" fill="#f8fcff" stroke="#8ab0d0" stroke-width="0.4"/><rect x="448.2" y="749.4" width="3.3" height="2.9" fill="#f8fcff" stroke="#8ab0d0" stroke-width="0.4"/><rect x="452.6" y="749.4" width="3.3" height="2.9" fill="#f8fcff" stroke="#8ab0d0" stroke-width="0.4"/><rect x="457.0" y="749.4" width="3.3" height="2.9" fill="#f8fcff" stroke="#8ab0d0" stroke-width="0.4"/><rect x="443.8" y="753.4" width="3.3" height="2.9" fill="#f8fcff" stroke="#8ab0d0" stroke-width="0.4"/><rect x="448.2" y="753.4" width="3.3" height="2.9" fill="#f8fcff" stroke="#8ab0d0" stroke-width="0.4"/><rect x="452.6" y="753.4" width="3.3" height="2.9" fill="#f8fcff" stroke="#8ab0d0" stroke-width="0.4"/><rect x="457.0" y="753.4" width="3.3" height="2.9" fill="#e88a2a" stroke="#8ab0d0" stroke-width="0.4"/><rect x="443.8" y="757.4" width="3.3" height="2.9" fill="#f8fcff" stroke="#8ab0d0" stroke-width="0.4"/><rect x="448.2" y="757.4" width="3.3" height="2.9" fill="#f8fcff" stroke="#8ab0d0" stroke-width="0.4"/><rect x="452.6" y="757.4" width="3.3" height="2.9" fill="#f8fcff" stroke="#8ab0d0" stroke-width="0.4"/><rect x="457.0" y="757.4" width="3.3" height="2.9" fill="#e88a2a" stroke="#8ab0d0" stroke-width="0.4"/><rect x="514" y="736" width="15.9" height="23" fill="#fff" stroke="#217346" stroke-width="1.2"/><rect x="519" y="739" width="4.2" height="2.4" fill="#217346"/><rect x="524.4" y="739" width="4.2" height="2.4" fill="#217346"/><rect x="519" y="743" width="4.2" height="2.4" fill="#217346"/><rect x="524.4" y="743" width="4.2" height="2.4" fill="#217346"/><rect x="519" y="747" width="4.2" height="2.4" fill="#217346"/><rect x="524.4" y="747" width="4.2" height="2.4" fill="#217346"/><rect x="519" y="751" width="4.2" height="2.4" fill="#217346"/><rect x="524.4" y="751" width="4.2" height="2.4" fill="#217346"/><rect x="519" y="755" width="4.2" height="2.4" fill="#217346"/><rect x="524.4" y="755" width="4.2" height="2.4" fill="#217346"/><path d="M499.8,735.6 L517.5,732.5 V762 L499.8,758.9 Z" fill="#217346"/><text x="503.3" y="753" font-family="Liberation Sans" font-weight="bold" font-size="14.5" fill="#fff">X</text><defs><linearGradient id="tie" x1="0" y1="0" x2="0" y2="1"><stop offset="0" stop-color="#7ad8fc"/><stop offset="0.5" stop-color="#38b0f0"/><stop offset="1" stop-color="#1e8ce0"/></linearGradient><linearGradient id="tring" x1="0" y1="1" x2="1" y2="0"><stop offset="0" stop-color="#f0b010"/><stop offset="0.5" stop-color="#ffe060"/><stop offset="1" stop-color="#f0b818"/></linearGradient></defs><path d="M587.3,754.2 A10.3,10.3 0 1 1 588.6,749.6" fill="none" stroke="url(#tie)" stroke-width="6.2"/><rect x="569" y="747" width="22.6" height="5.2" fill="#38b0f0"/><path d="M565.5,761.2 C558,757 568,742 579,736.6 C585,733.6 591.5,733.2 590.8,737.4" fill="none" stroke="url(#tring)" stroke-width="2.4" stroke-linecap="round"/><defs><radialGradient id="tff" cx="0.5" cy="0.35"><stop offset="0" stop-color="#5ab0f0"/><stop offset="0.5" stop-color="#1a6ac8"/><stop offset="1" stop-color="#0a3a8a"/></radialGradient><linearGradient id="tfo" x1="0" y1="0" x2="0.3" y2="1"><stop offset="0" stop-color="#f08020"/><stop offset="0.6" stop-color="#f07018"/><stop offset="1" stop-color="#e85a10"/></linearGradient><linearGradient id="tfy" x1="0" y1="0" x2="0" y2="1"><stop offset="0" stop-color="#fff0a0"/><stop offset="1" stop-color="#f8a020"/></linearGradient></defs><circle cx="640.6" cy="745.6" r="12.6" fill="url(#tff)"/><path d="M651.2,738.5 C654.8,743.5 654.6,752 650.4,757 C653,751 652.4,744 651.2,738.5 Z" fill="url(#tfy)"/><path d="M626.4,737 C627,738.6 628,739.6 629.4,740 C630.8,738.6 633,737.8 635.4,738 C634.4,739.6 634.2,741 634.8,742.4 L638.2,742.6 C637.2,744.4 635.8,745.4 634,745.8 C634.4,749 637.6,751.2 641.4,750.4 C639.8,752.6 642,754.6 645.6,753.4 C649.4,752 651.6,748.6 652.4,745 C654.6,751.4 652,758.2 646,761.2 C639.6,764.2 631.4,762.4 627,756.6 C622.8,751 622.8,742.8 626.4,737 Z" fill="url(#tfo)"/><rect x="685.9" y="732.8" width="30.1" height="29.8" fill="#d9481f"/><circle cx="701" cy="747.7" r="9.6" fill="none" stroke="#fff" stroke-width="2.2"/><text x="696.6" y="753.6" font-family="Liberation Sans" font-weight="bold" font-size="16" fill="#fff">?</text><rect x="762" y="738.5" width="16.3" height="17.6" fill="#0f78d0"/><path d="M764,741 H777 V753.8 H764 Z" fill="#fff"/><path d="M764,741 L770.5,748 L777,741" fill="none" stroke="#0f78d0" stroke-width="1.6"/><path d="M747.7,735.6 L765.4,732.5 V762 L747.7,758.9 Z" fill="#0f78d0"/><ellipse cx="756.6" cy="747.4" rx="4" ry="5.2" fill="none" stroke="#fff" stroke-width="2.4"/><path d="M811,733.6 H834 L835,736 V739.5 H840.4 L838.6,761.8 H812 L809.4,739 Z" fill="#eef4ea" stroke="#9ab09a" stroke-width="0.8"/><path d="M809.4,760.5 L811,733.6 H834 V760.5 Z" fill="#f6faf4" stroke="#8aa08a" stroke-width="0.6" opacity="0.9"/><path d="M816.5,742.4 H831.8 V745.6 H829.6 L828.6,747.2 L827.6,745.6 H816.5 Z M821.5,750.6 H837 V753.8 H834.8 L833.8,755.4 L832.8,753.8 H821.5 Z" fill="#1e4a28"/><rect x="871.4" y="732.8" width="31.2" height="30" rx="4.5" fill="none" stroke="#c0284a" stroke-width="1.2"/><text x="875" y="757" font-family="Liberation Sans" font-size="14.5" fill="#c0284a">Pro</text><text x="878.4" y="742.6" font-family="Liberation Sans" font-weight="bold" font-size="4.2" fill="#5a1a2a">Bullring</text><path d="M890,737.4 L893.6,735.8 L896.4,738.2 L893.4,739.6 Z" fill="#c0284a"/><path d="M1078,750.8 L1082,746.2 L1086,750.8 Z" fill="#fff"/><rect x="1101" y="741" width="8" height="10" rx="1" fill="#9a9a9a" stroke="#5a5a5a" stroke-width="0.7"/><rect x="1103" y="738.4" width="4" height="3" fill="#7a7a7a"/><rect x="1104.2" y="751" width="1.6" height="4" fill="#555"/><circle cx="1110.4" cy="752.6" r="4.2" fill="#22a838" stroke="#0e7a22" stroke-width="0.5"/><path d="M1108.2,752.6 L1109.8,754.4 L1112.6,750.8" stroke="#fff" stroke-width="1.2" fill="none"/><circle cx="1131" cy="748.5" r="7.8" fill="#dfe9f2" stroke="#8a9aa8" stroke-width="0.8"/><path d="M1125,746 C1128,741.5 1134,741.5 1136.5,745 C1138,748 1137.5,752 1135,754.5 C1136,751 1134.5,747.5 1131.5,746.5 C1129,746 1127,746.5 1125,746 Z" fill="#1e62b8"/><path d="M1127,748 C1130,748.5 1132.5,750.5 1133.5,753" stroke="#2a8a3a" stroke-width="1.6" fill="none"/><path d="M1148,746 H1151 L1155,742 V755.6 L1151,751.6 H1148 Z" fill="#fff"/><path d="M1157.4,745.4 A4.6,4.6 0 0 1 1157.4,752.2 M1159.8,743 A8,8 0 0 1 1159.8,754.6" stroke="#fff" stroke-width="1.1" fill="none"/><rect x="1171.9" y="741.6" width="1.6" height="14" fill="#fff"/><path d="M1173.5,742.2 C1177,741 1179,744 1182.5,742.6 L1186.6,744 C1184,746.4 1183,748.4 1181.5,749.4 C1178.5,750.4 1176.5,748.4 1173.5,749.8 Z" fill="none" stroke="#fff" stroke-width="1.1"/><rect x="1195.6" y="753.0" width="2.1" height="2.4" fill="#fff"/><rect x="1198.7" y="750.4" width="2.1" height="5.0" fill="#fff"/><rect x="1201.8" y="747.8" width="2.1" height="7.6" fill="#fff"/><rect x="1204.9" y="745.2" width="2.1" height="10.2" fill="#fff"/><rect x="1208.0" y="742.6" width="2.1" height="12.8" fill="#fff"/><rect x="1226.4" y="742.6" width="7.4" height="12.4" rx="0.8" fill="none" stroke="#fff" stroke-width="1.3"/><rect x="1228.6" y="740.8" width="3" height="1.8" fill="#fff"/><rect x="1220" y="744.6" width="5" height="3.6" fill="#fff"/><rect x="1221" y="741.6" width="1" height="3" fill="#fff"/><rect x="1223" y="741.6" width="1" height="3" fill="#fff"/><rect x="1222" y="748.2" width="1.2" height="6.8" fill="#fff"/></svg>
<div class="t" style="left:1249.3px;top:740.3px;font-size:12px;line-height:16px;color:#ffffff;letter-spacing:-1.135px;">POR</div>
<div class="t" style="left:1305.7px;top:732.8px;font-size:12.2px;line-height:16px;color:#ffffff;letter-spacing:-0.845px;">18:38</div>
<div class="t" style="left:1288.9px;top:749.8px;font-size:12.2px;line-height:16px;color:#ffffff;letter-spacing:-0.295px;">21/05/2020</div>
</body></html>
